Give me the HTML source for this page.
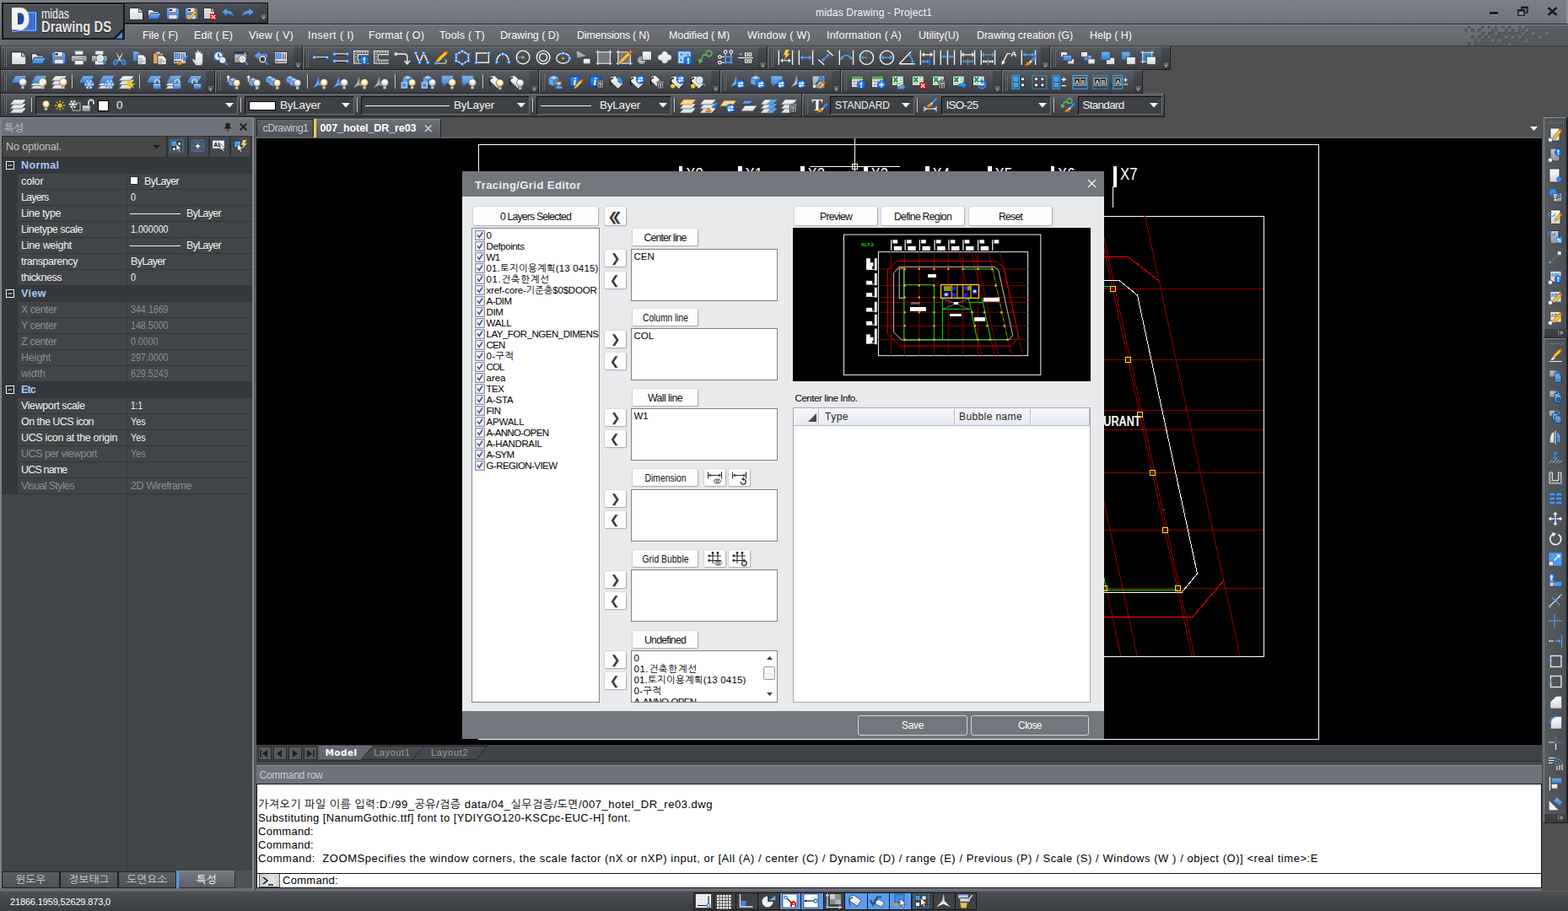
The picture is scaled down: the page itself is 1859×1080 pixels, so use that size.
<!DOCTYPE html>
<html lang="en"><head><meta charset="utf-8"><title>midas Drawing - Project1</title>
<style>
html,body{margin:0;padding:0;}
body{width:1859px;height:1080px;overflow:hidden;background:#505050;position:relative;font-family:"Liberation Sans","NanumGothic","Noto Sans CJK KR",sans-serif;font-size:12px;}
div,span,svg{position:absolute;box-sizing:border-box;}
svg{overflow:visible;}

</style></head><body>
<div style="left:0px;top:0px;width:1859px;height:28px;background:linear-gradient(#7b7f88,#70737b);"></div>
<div style="left:0px;top:28px;width:1859px;height:2px;background:#6f727a;"></div>
<div style="left:148px;top:28px;width:1711px;height:1px;background:#1e1e1e;"></div>
<div style="left:148px;top:29px;width:1711px;height:1px;background:#8a8f98;"></div>
<div style="left:0px;top:30px;width:1859px;height:24px;background:linear-gradient(#6d7179,#64676c);"></div>
<div style="left:0px;top:54px;width:1859px;height:1px;background:#3a3a3a;"></div>
<span style="left:1036px;top:8.04px;font-size:12px;line-height:15px;color:#f4f4f4;white-space:pre;letter-spacing:0.165px;transform:translateX(-50%);">midas Drawing - Project1</span>
<svg width="0" height="0" style="left:0;top:0"><defs>
<pattern id="grip" width="2" height="2" patternUnits="userSpaceOnUse"><rect width="1" height="1" fill="#26282b"/><rect x="1" y="1" width="1" height="1" fill="#8e9297"/></pattern>
<linearGradient id="gW" x1="0" y1="0" x2="0" y2="1"><stop offset="0" stop-color="#ffffff"/><stop offset="1" stop-color="#d2d4d8"/></linearGradient>
<linearGradient id="gB" x1="0" y1="0" x2="0" y2="1"><stop offset="0" stop-color="#7fb0e6"/><stop offset="1" stop-color="#3f7fc8"/></linearGradient>
<linearGradient id="gG" x1="0" y1="0" x2="0" y2="1"><stop offset="0" stop-color="#c9ccd1"/><stop offset="1" stop-color="#8d9198"/></linearGradient>
<radialGradient id="gBulbOn" cx="0.5" cy="0.35" r="0.7"><stop offset="0" stop-color="#ffffff"/><stop offset="0.45" stop-color="#ffe9a8"/><stop offset="1" stop-color="#f0b030"/></radialGradient>
<radialGradient id="gBulbOff" cx="0.5" cy="0.35" r="0.7"><stop offset="0" stop-color="#ffffff"/><stop offset="0.6" stop-color="#d8d8dc"/><stop offset="1" stop-color="#9a9aa0"/></radialGradient>
<radialGradient id="gBadge" cx="0.4" cy="0.3" r="0.8"><stop offset="0" stop-color="#2a8cf4"/><stop offset="1" stop-color="#0a5fd0"/></radialGradient>
</defs></svg>
<div style="left:0px;top:55px;width:1px;height:84px;background:#2a2b2d;"></div>
<div style="left:1px;top:55px;width:357px;height:27px;background:linear-gradient(#5b5f64,#4a4d52 45%,#3b3e42);"></div>
<div style="left:1px;top:55px;width:357px;height:1px;background:#6f7378;"></div>
<div style="left:358px;top:55px;width:1px;height:28px;background:#1c1d1f;"></div>
<div style="left:0px;top:82px;width:359px;height:1px;background:#1c1d1f;"></div>
<svg width="4" height="20" style="left:4px;top:59px"><rect width="4" height="20" fill="url(#grip)"/></svg>
<div style="left:348px;top:56px;width:10px;height:26px;background:linear-gradient(#484b4f,#35383b);"></div>
<svg width="10" height="8" style="left:348px;top:74px"><rect x="2.5" y="0.5" width="6" height="1" fill="#8e9399"/><path d="M2.5 2.5h6l-3 4z" fill="#8e9399"/></svg>
<svg width="19.44" height="17.28" viewBox="0 0 18 16" style="left:12.28px;top:59.86px"><path d="M1.5 1.5h11l5 5v9h-16z" fill="url(#gW)" stroke="#2a2c2f" stroke-width="1"/><path d="M12.5 1.5v5h5" fill="#c8cad0" stroke="#2a2c2f" stroke-width="0.8"/></svg>
<svg width="19.44" height="17.28" viewBox="0 0 18 16" style="left:36.28px;top:59.86px"><path d="M1.5 3.5h5l1.500 2h6.500v8.500h-13z" fill="url(#gW)" stroke="#2a2c2f" stroke-width="1"/><path d="M4.500 7.500h12.500l-3.500 7h-12.500z" fill="url(#gB)" stroke="#1f4f90" stroke-width="1"/></svg>
<svg width="19.44" height="17.28" viewBox="0 0 18 16" style="left:60.28px;top:59.86px"><path d="M1.5 1.500h13l2 2v11h-15z" fill="url(#gB)" stroke="#1f4f90" stroke-width="1"/><rect x="4" y="1.5" width="9" height="5" fill="#f0f0f2" stroke="#50607a" stroke-width="0.6"/><rect x="5" y="3" width="3" height="2" fill="#1c1c1c"/><rect x="4" y="9.5" width="10" height="5" fill="#e6e6ea" stroke="#50607a" stroke-width="0.6"/></svg>
<svg width="19.44" height="17.28" viewBox="0 0 18 16" style="left:84.28px;top:59.86px"><g transform="translate(-0.9 -0.9) scale(1.1)"><rect x="5" y="1" width="8" height="4" fill="#eeeef2" stroke="#70747a" stroke-width="0.6"/><path d="M2.500 5.500h13c1 0 1.500.5 1.500 1.500v5h-16v-5c0-1 .5-1.500 1.500-1.500z" fill="url(#gG)" stroke="#3a3d42" stroke-width="1"/><rect x="4.5" y="10.5" width="9" height="4.5" fill="#f4f4f6" stroke="#50545a" stroke-width="0.7"/><rect x="12.5" y="7" width="3" height="1.5" fill="#22e022"/></g></svg>
<svg width="19.44" height="17.28" viewBox="0 0 18 16" style="left:108.28px;top:59.86px"><g transform="translate(-0.9 -0.9) scale(1.1)"><rect x="5" y="1" width="8" height="4" fill="#eeeef2" stroke="#70747a" stroke-width="0.6"/><path d="M2.500 5.500h13c1 0 1.500.5 1.500 1.500v5h-16v-5c0-1 .5-1.500 1.500-1.500z" fill="url(#gG)" stroke="#3a3d42" stroke-width="1"/><rect x="4.5" y="10.5" width="9" height="4.5" fill="#f4f4f6" stroke="#50545a" stroke-width="0.7"/><rect x="12.5" y="7" width="3" height="1.5" fill="#22e022"/></g><path d="M12.38 10.88L15.62 14.12" stroke="#3b8be8" stroke-width="2.2" fill="none" stroke-linecap="round"/><circle cx="10" cy="8.5" r="3.4" fill="#cfe4fa" stroke="#f4f4f4" stroke-width="1.4"/><circle cx="10" cy="8.5" r="4.3" fill="none" stroke="#3a3d42" stroke-width="0.5"/></svg>
<svg width="19.44" height="17.28" viewBox="0 0 18 16" style="left:132.28px;top:59.86px"><path d="M5 .5c1.500 3 4.500 7 6.500 10.500l-1.800 1c-2-3.500-4.500-7.500-4.700-11.500z" fill="url(#gW)" stroke="#3a3d42" stroke-width="0.5"/><path d="M13 .5c-1.500 3-4.500 7-6.500 10.500l1.800 1c2-3.500 4.500-7.500 4.700-11.500z" fill="url(#gW)" stroke="#3a3d42" stroke-width="0.5"/><ellipse cx="4.500" cy="12.800" rx="1.700" ry="2.500" fill="none" stroke="#3b8be8" stroke-width="1.900" transform="rotate(25 4.500 12.800)"/><ellipse cx="13.500" cy="12.800" rx="1.700" ry="2.500" fill="none" stroke="#3b8be8" stroke-width="1.900" transform="rotate(-25 13.500 12.800)"/></svg>
<svg width="19.44" height="17.28" viewBox="0 0 18 16" style="left:156.28px;top:59.86px"><path d="M1.500 .5h5l3 3v8h-8z" fill="url(#gB)" stroke="#1f4f90" stroke-width="0.7"/><path d="M6.500 4.500h6l3.500 3.500v7.500h-9.500z" fill="url(#gW)" stroke="#2a2c2f" stroke-width="0.8"/><path d="M8 9L12 9" stroke="#8a8a8e" stroke-width="0.9" fill="none" /><path d="M8 11.5L14 11.5" stroke="#8a8a8e" stroke-width="0.9" fill="none" /><path d="M8 13.5L11 13.5" stroke="#8a8a8e" stroke-width="0.9" fill="none" /></svg>
<svg width="19.44" height="17.28" viewBox="0 0 18 16" style="left:180.28px;top:59.86px"><rect x="1.5" y="2.5" width="11" height="12" fill="#d8a868" stroke="#5a3a10" stroke-width="0.8" rx="1"/><rect x="4.5" y="1" width="5" height="3" fill="#c8cacd" stroke="#3a3d42" stroke-width="0.6" rx="0.8"/><path d="M6.500 5.500h6l3.500 3.500v6.500h-9.500z" fill="url(#gW)" stroke="#2a2c2f" stroke-width="0.8"/><path d="M8 9.5L12 9.5" stroke="#8a8a8e" stroke-width="0.9" fill="none" /><path d="M8 11.5L14 11.5" stroke="#8a8a8e" stroke-width="0.9" fill="none" /><path d="M8 13.5L11 13.5" stroke="#8a8a8e" stroke-width="0.9" fill="none" /></svg>
<svg width="19.44" height="17.28" viewBox="0 0 18 16" style="left:204.28px;top:59.86px"><rect x="1.5" y="1.5" width="14" height="13" fill="url(#gW)" stroke="#2a2c2f" stroke-width="0.9" rx="0.6"/><rect x="2.8" y="3" width="6" height="6" fill="#5b9be4" stroke="#2d6cc0" stroke-width="0.6"/><path d="M10.8 3L10.8 9.5" stroke="#44474c" stroke-width="1.1" fill="none" /><path d="M13 3L13 9.5" stroke="#44474c" stroke-width="1.1" fill="none" /><path d="M3 12L14 12" stroke="#44474c" stroke-width="1" fill="none" /><rect x="3" y="11" width="1.2" height="2" fill="#44474c"/><g transform="translate(5 3.5) scale(1.25)"><g transform="translate(0 0)"><path d="M0 9.500c2 .5 4 .2 5.500-1l-2-2.200c-1.500.6-1.800 2.200-3.500 3.200z" fill="#f0901a" stroke="#8a4a00" stroke-width="0.4"/><path d="M4.6 7.2L6.4 5.4" stroke="#f4f4f4" stroke-width="1.8" fill="none" /><path d="M6.4 5.4L9.3 2.2" stroke="#2f8ff0" stroke-width="1.9" fill="none" stroke-linecap="round"/></g></g></svg>
<svg width="19.44" height="17.28" viewBox="0 0 18 16" style="left:228.28px;top:59.86px"><g transform="translate(-1.5 -1.2) scale(1.18)"><path d="M4.500 15c-1-2-3-4-3.500-6c.8-.8 2-.2 2.800 1v-7c0-1.200 1.800-1.200 1.800 0v-1.500c0-1.200 1.900-1.200 1.900 0v1c0-1.300 1.900-1.300 1.900 0v1.500c0-1.200 1.800-1.200 1.800 0v7c0 2-1 3-1.500 4z" fill="url(#gW)" stroke="#2a2c2f" stroke-width="0.5"/></g></svg>
<svg width="19.44" height="17.28" viewBox="0 0 18 16" style="left:252.28px;top:59.86px"><circle cx="6.5" cy="6" r="5" fill="#e8f0fc" stroke="#2a6fd8" stroke-width="1.6"/><path d="M6.500 3v3.500h2.500" fill="none" stroke="#111" stroke-width="1.1"/><path d="M12.96 12.46L15.84 15.34" stroke="#3b8be8" stroke-width="2.2" fill="none" stroke-linecap="round"/><circle cx="11" cy="10.5" r="2.8" fill="#cfe4fa" stroke="#f4f4f4" stroke-width="1.4"/><circle cx="11" cy="10.5" r="3.7" fill="none" stroke="#3a3d42" stroke-width="0.5"/></svg>
<svg width="19.44" height="17.28" viewBox="0 0 18 16" style="left:276.28px;top:59.86px"><rect x="1.5" y="1.5" width="14" height="12" fill="url(#gG)" stroke="#2a2c2f" stroke-width="0.8"/><rect x="1.5" y="1.5" width="14" height="2.5" fill="#2e3a52"/><rect x="12.5" y="2" width="2" height="1.5" fill="#9fc0ee"/><path d="M12.74 11.74L15.98 14.98" stroke="#3b8be8" stroke-width="2.2" fill="none" stroke-linecap="round"/><circle cx="10.5" cy="9.5" r="3.2" fill="#d8dade" stroke="#f4f4f4" stroke-width="1.4"/><circle cx="10.5" cy="9.5" r="4.1" fill="none" stroke="#3a3d42" stroke-width="0.5"/></svg>
<svg width="19.44" height="17.28" viewBox="0 0 18 16" style="left:300.28px;top:59.86px"><path d="M1 5.500l6.500-5v3h8.500v4.500h-8.500v3z" fill="url(#gB)" stroke="#1f4f90" stroke-width="0.5"/><path d="M12.74 11.74L15.98 14.98" stroke="#3b8be8" stroke-width="2.2" fill="none" stroke-linecap="round"/><circle cx="10.5" cy="9.5" r="3.2" fill="#3a3d42" stroke="#f4f4f4" stroke-width="1.4"/><circle cx="10.5" cy="9.5" r="4.1" fill="none" stroke="#3a3d42" stroke-width="0.5"/></svg>
<svg width="19.44" height="17.28" viewBox="0 0 18 16" style="left:324.28px;top:59.86px"><rect x="1.5" y="1.5" width="14" height="13" fill="url(#gW)" stroke="#2a2c2f" stroke-width="0.9" rx="0.6"/><rect x="2.8" y="3" width="6" height="6" fill="#5b9be4" stroke="#2d6cc0" stroke-width="0.6"/><path d="M10.8 3L10.8 9.5" stroke="#44474c" stroke-width="1.1" fill="none" /><path d="M13 3L13 9.5" stroke="#44474c" stroke-width="1.1" fill="none" /><path d="M3 12L14 12" stroke="#44474c" stroke-width="1" fill="none" /><rect x="3" y="11" width="1.2" height="2" fill="#44474c"/></svg>
<div style="left:359px;top:55px;width:550px;height:27px;background:linear-gradient(#5b5f64,#4a4d52 45%,#3b3e42);"></div>
<div style="left:359px;top:55px;width:550px;height:1px;background:#6f7378;"></div>
<div style="left:359px;top:55px;width:1px;height:27px;background:#7a7e83;"></div>
<div style="left:909px;top:55px;width:1px;height:28px;background:#1c1d1f;"></div>
<div style="left:358px;top:82px;width:552px;height:1px;background:#1c1d1f;"></div>
<svg width="4" height="20" style="left:362px;top:59px"><rect width="4" height="20" fill="url(#grip)"/></svg>
<div style="left:899px;top:56px;width:10px;height:26px;background:linear-gradient(#484b4f,#35383b);"></div>
<svg width="10" height="8" style="left:899px;top:74px"><rect x="2.5" y="0.5" width="6" height="1" fill="#8e9399"/><path d="M2.5 2.5h6l-3 4z" fill="#8e9399"/></svg>
<svg width="20.16" height="17.92" viewBox="0 0 18 16" style="left:369.92px;top:59.24px"><path d="M2 8L16 8" stroke="#f2f2f2" stroke-width="1.3" fill="none" /><path d="M2 9L16 9" stroke="#101010" stroke-width="0.8" fill="none" /><rect x="1" y="6.7" width="2.6" height="2.6" fill="#ffffff" stroke="#1f7be8" stroke-width="1"/><rect x="14.4" y="6.7" width="2.6" height="2.6" fill="#ffffff" stroke="#1f7be8" stroke-width="1"/></svg>
<svg width="20.16" height="17.92" viewBox="0 0 18 16" style="left:393.92px;top:59.24px"><path d="M2 4.5L16 4.5" stroke="#f2f2f2" stroke-width="1.3" fill="none" /><path d="M2 5.5L16 5.5" stroke="#101010" stroke-width="0.8" fill="none" /><path d="M2 12L16 12" stroke="#f2f2f2" stroke-width="1.3" fill="none" /><path d="M2 13L16 13" stroke="#101010" stroke-width="0.8" fill="none" /><rect x="1" y="3.2" width="2.6" height="2.6" fill="#ffffff" stroke="#1f7be8" stroke-width="1"/><rect x="14.4" y="3.2" width="2.6" height="2.6" fill="#ffffff" stroke="#1f7be8" stroke-width="1"/><rect x="1" y="10.7" width="2.6" height="2.6" fill="#ffffff" stroke="#1f7be8" stroke-width="1"/><rect x="14.4" y="10.7" width="2.6" height="2.6" fill="#ffffff" stroke="#1f7be8" stroke-width="1"/></svg>
<svg width="20.16" height="17.92" viewBox="0 0 18 16" style="left:417.92px;top:59.24px"><path d="M17 1.500h-15.500v13h15.500" fill="none" stroke="#f2f2f2" stroke-width="1"/><path d="M17 5h-11.500v6h11.500" fill="none" stroke="#f2f2f2" stroke-width="1"/><path d="M17 3.200h-13.500v9.600h13.500" fill="none" stroke="#f2f2f2" stroke-width="0.9" stroke-dasharray="1.6 1.2"/><circle cx="12.5" cy="11" r="4.8" fill="url(#gBadge)" stroke="#0b3f9a" stroke-width="0.5"/><rect x="11.6" y="8" width="1.8" height="3.8" fill="#fff" rx="0.8"/><circle cx="12.5" cy="13.3" r="1" fill="#fff"/></svg>
<svg width="20.16" height="17.92" viewBox="0 0 18 16" style="left:441.92px;top:59.24px"><path d="M17 1.500h-15.500v13h15.500" fill="none" stroke="#f2f2f2" stroke-width="1"/><path d="M17 5h-11.500v6h11.500" fill="none" stroke="#f2f2f2" stroke-width="1"/><path d="M17 3.200h-13.500v9.600h13.500" fill="none" stroke="#f2f2f2" stroke-width="0.9" stroke-dasharray="1.6 1.2"/></svg>
<svg width="20.16" height="17.92" viewBox="0 0 18 16" style="left:465.92px;top:59.24px"><circle cx="3" cy="4.5" r="1.8" fill="#d8d8da"/><path d="M4.500 4.500h7c2.500 0 3.500 1 3.500 3v6.500" fill="none" stroke="#f2f2f2" stroke-width="1.3"/><path d="M12 11.500l3 3.500l3-3.500" fill="none" stroke="#f2f2f2" stroke-width="1.3"/></svg>
<svg width="20.16" height="17.92" viewBox="0 0 18 16" style="left:489.92px;top:59.24px"><path d="M2.500 3.500l4 10l4.500-10l4.500 10" fill="none" stroke="#f2f2f2" stroke-width="1.4"/><rect x="1.2" y="2.2" width="2.6" height="2.6" fill="#ffffff" stroke="#1f7be8" stroke-width="1"/><rect x="5.4" y="12.2" width="2.6" height="2.6" fill="#ffffff" stroke="#1f7be8" stroke-width="1"/><rect x="9.7" y="2.2" width="2.6" height="2.6" fill="#ffffff" stroke="#1f7be8" stroke-width="1"/><rect x="14.2" y="12.2" width="2.6" height="2.6" fill="#ffffff" stroke="#1f7be8" stroke-width="1"/></svg>
<svg width="20.16" height="17.92" viewBox="0 0 18 16" style="left:513.92px;top:59.24px"><path d="M2 14.500h9c3.500 0 3.500-4 .5-4" fill="none" stroke="#d0d0d4" stroke-width="1.1"/><path d="M5.91 12.72L14.8 4.18L12.31 1.59L3.42 10.12z" fill="#f2b01e" stroke="#7a5200" stroke-width="0.5"/><path d="M2.5 13.5L5.91 12.72L3.42 10.12z" fill="#f6e2b8" stroke="#7a5200" stroke-width="0.5"/><path d="M14.8 4.18L16.25 2.8L13.75 0.2L12.31 1.59z" fill="#f06a18" stroke="#7a3000" stroke-width="0.5"/><path d="M4.66 11.42L13.56 2.89" stroke="#ffe27a" stroke-width="0.8" fill="none" /><rect x="1.2" y="13.3" width="2" height="2" fill="#ffffff" stroke="#1f7be8" stroke-width="1"/></svg>
<svg width="20.16" height="17.92" viewBox="0 0 18 16" style="left:537.92px;top:59.24px"><path d="M9 1.500l6.500 3.500v6.500l-6.500 3.500l-6.500-3.500v-6.500z" fill="none" stroke="#f2f2f2" stroke-width="1.3"/><rect x="7.7" y="0.2" width="2.6" height="2.6" fill="#ffffff" stroke="#1f7be8" stroke-width="1"/><rect x="14.2" y="3.7" width="2.6" height="2.6" fill="#ffffff" stroke="#1f7be8" stroke-width="1"/><rect x="14.2" y="10.2" width="2.6" height="2.6" fill="#ffffff" stroke="#1f7be8" stroke-width="1"/><rect x="7.7" y="13.7" width="2.6" height="2.6" fill="#ffffff" stroke="#1f7be8" stroke-width="1"/><rect x="1.2" y="10.2" width="2.6" height="2.6" fill="#ffffff" stroke="#1f7be8" stroke-width="1"/><rect x="1.2" y="3.7" width="2.6" height="2.6" fill="#ffffff" stroke="#1f7be8" stroke-width="1"/></svg>
<svg width="20.16" height="17.92" viewBox="0 0 18 16" style="left:561.92px;top:59.24px"><rect x="2.5" y="3.5" width="13" height="10" fill="none" stroke="#f2f2f2" stroke-width="1.3"/><rect x="14.4" y="2.2" width="2.6" height="2.6" fill="#ffffff" stroke="#1f7be8" stroke-width="1"/><rect x="1" y="12.2" width="2.6" height="2.6" fill="#ffffff" stroke="#1f7be8" stroke-width="1"/></svg>
<svg width="20.16" height="17.92" viewBox="0 0 18 16" style="left:585.92px;top:59.24px"><path d="M2.500 13c0-5 3-8.500 6.500-8.500s6.500 3.500 6.500 8.500" fill="none" stroke="#f2f2f2" stroke-width="1.3"/><rect x="1.2" y="11.7" width="2.6" height="2.6" fill="#ffffff" stroke="#1f7be8" stroke-width="1"/><rect x="7.7" y="3.2" width="2.6" height="2.6" fill="#ffffff" stroke="#1f7be8" stroke-width="1"/><rect x="14.2" y="11.7" width="2.6" height="2.6" fill="#ffffff" stroke="#1f7be8" stroke-width="1"/></svg>
<svg width="20.16" height="17.92" viewBox="0 0 18 16" style="left:609.92px;top:59.24px"><circle cx="9" cy="8" r="7" fill="none" stroke="#f2f2f2" stroke-width="1.2"/><path d="M2.5 8L9 8" stroke="#4da0f0" stroke-width="1.2" fill="none" /><path d="M7.500 8h3M9 6.500v3" fill="none" stroke="#f0a020" stroke-width="1.2"/></svg>
<svg width="20.16" height="17.92" viewBox="0 0 18 16" style="left:633.92px;top:59.24px"><circle cx="9" cy="8" r="7" fill="none" stroke="#f2f2f2" stroke-width="1.3"/><circle cx="9" cy="8" r="4" fill="none" stroke="#f2f2f2" stroke-width="1.3"/></svg>
<svg width="20.16" height="17.92" viewBox="0 0 18 16" style="left:657.92px;top:59.24px"><ellipse cx="8.5" cy="9" rx="7" ry="5.3" fill="none" stroke="#f2f2f2" stroke-width="1.2"/><path d="M7 9h3M8.500 7.500v3" fill="none" stroke="#f0a020" stroke-width="1.2"/><rect x="7.2" y="2.4" width="2.6" height="2.6" fill="#ffffff" stroke="#1f7be8" stroke-width="1"/><rect x="14.2" y="7.7" width="2.6" height="2.6" fill="#ffffff" stroke="#1f7be8" stroke-width="1"/></svg>
<svg width="20.16" height="17.92" viewBox="0 0 18 16" style="left:681.92px;top:59.24px"><path d="M1.500 1l11 5.500l-11 2.500z" fill="url(#gG)" stroke="#3a3d42" stroke-width="0.4"/><rect x="8.5" y="9.5" width="7.5" height="5.5" fill="url(#gW)" stroke="#3a3d42" stroke-width="0.5"/></svg>
<svg width="20.16" height="17.92" viewBox="0 0 18 16" style="left:705.92px;top:59.24px"><rect x="2.5" y="2.5" width="13" height="12" fill="#4a4d52"/><path d="M2.5 4.5L4.5 2.5M2.5 6.5L6.5 2.5M2.5 8.5L8.5 2.5M2.5 10.5L10.5 2.5M2.5 12.5L12.5 2.5M2.5 14.5L14.5 2.5M4.5 14.5L15.5 3.5M6.5 14.5L15.5 5.5M8.5 14.5L15.5 7.5M10.5 14.5L15.5 9.5M12.5 14.5L15.5 11.5M14.5 14.5L15.5 13.5" fill="none" stroke="#c4c6c9" stroke-width="0.7"/><path d="M2.500 .5v15.500M15.500 .5v15.500M.5 2.500h17M.5 14.500h17" fill="none" stroke="#f2f2f2" stroke-width="1"/></svg>
<svg width="20.16" height="17.92" viewBox="0 0 18 16" style="left:729.92px;top:59.24px"><rect x="2.5" y="2.5" width="13" height="12" fill="#4a4d52"/><path d="M2.5 4.5L4.5 2.5M2.5 6.5L6.5 2.5M2.5 8.5L8.5 2.5M2.5 10.5L10.5 2.5M2.5 12.5L12.5 2.5M2.5 14.5L14.5 2.5M4.5 14.5L15.5 3.5M6.5 14.5L15.5 5.5M8.5 14.5L15.5 7.5M10.5 14.5L15.5 9.5M12.5 14.5L15.5 11.5M14.5 14.5L15.5 13.5" fill="none" stroke="#c4c6c9" stroke-width="0.7"/><path d="M2.500 .5v15.500M15.500 .5v15.500M.5 2.500h17M.5 14.500h17" fill="none" stroke="#f2f2f2" stroke-width="1"/><path d="M6.39 14.15L15.86 4.69L13.31 2.14L3.85 11.61z" fill="#f2b01e" stroke="#7a5200" stroke-width="0.5"/><path d="M3 15L6.39 14.15L3.85 11.61z" fill="#f6e2b8" stroke="#7a5200" stroke-width="0.5"/><path d="M15.86 4.69L17.27 3.27L14.73 0.73L13.31 2.14z" fill="#f06a18" stroke="#7a3000" stroke-width="0.5"/><path d="M5.12 12.88L14.59 3.41" stroke="#ffe27a" stroke-width="0.8" fill="none" /></svg>
<svg width="20.16" height="17.92" viewBox="0 0 18 16" style="left:753.92px;top:59.24px"><circle cx="6" cy="11" r="4.5" fill="#b8babd" stroke="#3a3d42" stroke-width="0.6"/><path d="M3 13l5-5M2 11l4-4M5 15l5-5" fill="none" stroke="#6a6d72" stroke-width="0.6"/><rect x="6.5" y="1.5" width="10" height="9.5" fill="url(#gW)" stroke="#3a3d42" stroke-width="0.8"/></svg>
<svg width="20.16" height="17.92" viewBox="0 0 18 16" style="left:777.92px;top:59.24px"><path d="M9 1.500c2 0 3.500 1.300 3.500 3.300c2.300 0 4 1.500 4 3.400s-1.700 3.400-4 3.400c0 1.800-1.500 3.200-3.500 3.200s-3.500-1.400-3.500-3.200c-2.300 0-4-1.500-4-3.400s1.700-3.400 4-3.400c0-2 1.500-3.300 3.500-3.300z" fill="url(#gW)" stroke="#3a3d42" stroke-width="0.6"/></svg>
<svg width="20.16" height="17.92" viewBox="0 0 18 16" style="left:801.92px;top:59.24px"><rect x="1" y="1" width="15" height="14" fill="#5b9be4" stroke="#1f4f90" stroke-width="0.8"/><rect x="3" y="3" width="5" height="4" fill="none" stroke="#e8f0fc" stroke-width="1"/><rect x="10" y="3" width="4" height="4" fill="none" stroke="#e8f0fc" stroke-width="1"/><rect x="3" y="9" width="4" height="4" fill="none" stroke="#e8f0fc" stroke-width="1"/><circle cx="12.5" cy="11.5" r="4.6" fill="url(#gBadge)" stroke="#0b3f9a" stroke-width="0.5"/><rect x="11.6" y="8.5" width="1.8" height="3.8" fill="#fff" rx="0.8"/><circle cx="12.5" cy="13.8" r="1" fill="#fff"/></svg>
<svg width="20.16" height="17.92" viewBox="0 0 18 16" style="left:825.92px;top:59.24px"><circle cx="13" cy="4" r="3" fill="none" stroke="#5cb85c" stroke-width="1.4"/><path d="M10.500 5.500h-3.500l-4 8" fill="none" stroke="#5cb85c" stroke-width="1.4"/><path d="M1.500 9.500l1.200 5l4.300-2.500z" fill="#5cb85c"/></svg>
<svg width="20.16" height="17.92" viewBox="0 0 18 16" style="left:849.92px;top:59.24px"><rect x="9" y="7.5" width="6" height="6" fill="none" stroke="#4da0f0" stroke-width="1.3"/><path d="M7.500 7.500h9M7.500 13.500h9M9 6v9M15 6v9" fill="none" stroke="#4da0f0" stroke-width="1"/><circle cx="3" cy="7.5" r="1.6" fill="none" stroke="#f2f2f2" stroke-width="1.1"/><circle cx="3" cy="13.5" r="1.6" fill="none" stroke="#f2f2f2" stroke-width="1.1"/><path d="M4.6 7.5L7.5 7.5" stroke="#f2f2f2" stroke-width="1" fill="none" /><path d="M4.6 13.5L7.5 13.5" stroke="#f2f2f2" stroke-width="1" fill="none" /><circle cx="9" cy="2.2" r="1.6" fill="none" stroke="#f2f2f2" stroke-width="1.1"/><circle cx="15" cy="2.2" r="1.6" fill="none" stroke="#f2f2f2" stroke-width="1.1"/><path d="M9 3.8L9 6" stroke="#f2f2f2" stroke-width="1" fill="none" /><path d="M15 3.8L15 6" stroke="#f2f2f2" stroke-width="1" fill="none" /></svg>
<svg width="20.16" height="17.92" viewBox="0 0 18 16" style="left:873.92px;top:59.24px"><path d="M1.500 3.500h4.500l-2.250 3z" fill="#4da0f0"/><path d="M1 8.5L17 8.5" stroke="#f2f2f2" stroke-width="1.1" fill="none" /><rect x="8.5" y="3.5" width="2.4" height="3" fill="none" stroke="#f2f2f2" stroke-width="1"/><rect x="12.5" y="3.5" width="2.4" height="3" fill="none" stroke="#f2f2f2" stroke-width="1"/><rect x="8.5" y="10.5" width="2.4" height="3" fill="none" stroke="#f2f2f2" stroke-width="1"/><rect x="12.5" y="10.5" width="2.4" height="3" fill="none" stroke="#f2f2f2" stroke-width="1"/></svg>
<div style="left:910px;top:55px;width:334px;height:27px;background:linear-gradient(#5b5f64,#4a4d52 45%,#3b3e42);"></div>
<div style="left:910px;top:55px;width:334px;height:1px;background:#6f7378;"></div>
<div style="left:910px;top:55px;width:1px;height:27px;background:#7a7e83;"></div>
<div style="left:1244px;top:55px;width:1px;height:28px;background:#1c1d1f;"></div>
<div style="left:909px;top:82px;width:336px;height:1px;background:#1c1d1f;"></div>
<svg width="4" height="20" style="left:913px;top:59px"><rect width="4" height="20" fill="url(#grip)"/></svg>
<div style="left:1234px;top:56px;width:10px;height:26px;background:linear-gradient(#484b4f,#35383b);"></div>
<svg width="10" height="8" style="left:1234px;top:74px"><rect x="2.5" y="0.5" width="6" height="1" fill="#8e9399"/><path d="M2.5 2.5h6l-3 4z" fill="#8e9399"/></svg>
<svg width="20.88" height="18.56" viewBox="0 0 18 16" style="left:920.56px;top:58.92px"><path d="M2 0.5L2 15.5" stroke="#f2f2f2" stroke-width="1.2" fill="none" /><path d="M16 0.5L16 15.5" stroke="#f2f2f2" stroke-width="1.2" fill="none" /><path d="M4.5 11L13.5 11" stroke="#f2f2f2" stroke-width="1" fill="none" /><path d="M3.5 11l2.6 -2.08v4.16z" fill="#f2f2f2"/><path d="M14.5 11l-2.6 -2.08v4.16z" fill="#f2f2f2"/><g transform="translate(5 0) scale(0.95)"><path d="M4 0h4.500l-2.500 4h3l-6.500 7l2-5h-2.500z" fill="#ffd45a" stroke="#a07810" stroke-width="0.4"/></g></svg>
<svg width="20.88" height="18.56" viewBox="0 0 18 16" style="left:944.56px;top:58.92px"><path d="M2 0.5L2 15.5" stroke="#f2f2f2" stroke-width="1.2" fill="none" /><path d="M16 0.5L16 15.5" stroke="#f2f2f2" stroke-width="1.2" fill="none" /><path d="M4 8L14 8" stroke="#4da0f0" stroke-width="1.3" fill="none" /><path d="M3 8l3 -2.4v4.8z" fill="#4da0f0"/><path d="M15 8l-3 -2.4v4.8z" fill="#4da0f0"/></svg>
<svg width="20.88" height="18.56" viewBox="0 0 18 16" style="left:968.56px;top:58.92px"><path d="M1 10L7 15.5" stroke="#f2f2f2" stroke-width="1.2" fill="none" /><path d="M10 0.5L16 6" stroke="#f2f2f2" stroke-width="1.2" fill="none" /><path d="M5.5 11L11.5 5" stroke="#4da0f0" stroke-width="1.3" fill="none" /><path d="M4.500 12l1-3.500l2.500 2.500z" fill="#4da0f0"/><path d="M12.500 4l-1 3.500l-2.500-2.500z" fill="#4da0f0"/></svg>
<svg width="20.88" height="18.56" viewBox="0 0 18 16" style="left:992.56px;top:58.92px"><path d="M2 0.5L2 15.5" stroke="#f2f2f2" stroke-width="1.2" fill="none" /><path d="M16 0.5L16 15.5" stroke="#f2f2f2" stroke-width="1.2" fill="none" /><path d="M4 9.500c2-5 8-5 10 0" fill="none" stroke="#4da0f0" stroke-width="1.4"/><path d="M3 10.500l.2-3.800l3 2.300z" fill="#4da0f0"/><path d="M15 10.500l-.2-3.800l-3 2.300z" fill="#4da0f0"/></svg>
<svg width="20.88" height="18.56" viewBox="0 0 18 16" style="left:1016.56px;top:58.92px"><circle cx="9" cy="8" r="7" fill="none" stroke="#f2f2f2" stroke-width="1.2"/><path d="M9 3v10M9 8h5" fill="none" stroke="#8a8d92" stroke-width="0.9" stroke-dasharray="1 1.3"/><path d="M4 8L9 8" stroke="#4da0f0" stroke-width="1.3" fill="none" /><path d="M2.500 8l3-2.400v4.800z" fill="#4da0f0"/></svg>
<svg width="20.88" height="18.56" viewBox="0 0 18 16" style="left:1040.56px;top:58.92px"><circle cx="9" cy="8" r="7" fill="none" stroke="#f2f2f2" stroke-width="1.2"/><path d="M3.8 8L14.2 8" stroke="#4da0f0" stroke-width="1.3" fill="none" /><path d="M2.8 8l3 -2.4v4.8z" fill="#4da0f0"/><path d="M15.2 8l-3 -2.4v4.8z" fill="#4da0f0"/></svg>
<svg width="20.88" height="18.56" viewBox="0 0 18 16" style="left:1064.56px;top:58.92px"><path d="M1 14.500h16M1 14.500l12-12.500" fill="none" stroke="#f2f2f2" stroke-width="1.2"/><path d="M11.500 5.500c2 2 3 4.500 3.200 7.500" fill="none" stroke="#4da0f0" stroke-width="1.2"/><path d="M10.500 4.500l3.300.6l-2.300 2.400z" fill="#4da0f0"/><path d="M14.700 14l-2-2.800h3.600z" fill="#4da0f0"/></svg>
<svg width="20.88" height="18.56" viewBox="0 0 18 16" style="left:1088.56px;top:58.92px"><path d="M2 0.5L2 15.5" stroke="#f2f2f2" stroke-width="1.2" fill="none" /><path d="M16 0.5L16 15.5" stroke="#f2f2f2" stroke-width="1.2" fill="none" /><path d="M4 5L14 5" stroke="#f2f2f2" stroke-width="1.2" fill="none" /><path d="M3 5l3 -2.4v4.8z" fill="#f2f2f2"/><path d="M15 5l-3 -2.4v4.8z" fill="#f2f2f2"/><path d="M4 12L10 12" stroke="#4da0f0" stroke-width="1.3" fill="none" /><path d="M3 12l2.6 -2.08v4.16z" fill="#4da0f0"/><path d="M11 12l-2.6 -2.08v4.16z" fill="#4da0f0"/><path d="M11.5 9.5L11.5 15.5" stroke="#1f7be8" stroke-width="1.3" fill="none" /></svg>
<svg width="20.88" height="18.56" viewBox="0 0 18 16" style="left:1112.56px;top:58.92px"><path d="M2 0.5L2 15.5" stroke="#f2f2f2" stroke-width="1.2" fill="none" /><path d="M9 0.5L9 15.5" stroke="#f2f2f2" stroke-width="1.2" fill="none" /><path d="M16 0.5L16 15.5" stroke="#f2f2f2" stroke-width="1.2" fill="none" /><path d="M4 7L7.3 7" stroke="#4da0f0" stroke-width="1.2" fill="none" /><path d="M3 7l2.2 -1.76v3.52z" fill="#4da0f0"/><path d="M8.3 7l-2.2 -1.76v3.52z" fill="#4da0f0"/><path d="M10.7 7L14.3 7" stroke="#4da0f0" stroke-width="1.2" fill="none" /><path d="M9.7 7l2.2 -1.76v3.52z" fill="#4da0f0"/><path d="M15.3 7l-2.2 -1.76v3.52z" fill="#4da0f0"/></svg>
<svg width="20.88" height="18.56" viewBox="0 0 18 16" style="left:1136.56px;top:58.92px"><path d="M2 0.5L2 15.5" stroke="#f2f2f2" stroke-width="1.2" fill="none" /><path d="M16 0.5L16 15.5" stroke="#f2f2f2" stroke-width="1.2" fill="none" /><path d="M3 5H15M4.8 3.2L3 5l1.8 1.8M13.2 3.2L15 5l-1.8 1.8" fill="none" stroke="#f2f2f2" stroke-width="1.1"/><path d="M9 9.5L9 15.5" stroke="#9a9da2" stroke-width="1.1" fill="none" /><path d="M4 12L7.5 12" stroke="#4da0f0" stroke-width="1.1" fill="none" /><path d="M3 12l2 -1.6v3.2z" fill="#4da0f0"/><path d="M8.5 12l-2 -1.6v3.2z" fill="#4da0f0"/><path d="M10.5 12L14 12" stroke="#4da0f0" stroke-width="1.1" fill="none" /><path d="M9.5 12l2 -1.6v3.2z" fill="#4da0f0"/><path d="M15 12l-2 -1.6v3.2z" fill="#4da0f0"/></svg>
<svg width="20.88" height="18.56" viewBox="0 0 18 16" style="left:1160.56px;top:58.92px"><path d="M2 0.5L2 15.5" stroke="#f2f2f2" stroke-width="1.2" fill="none" /><path d="M16 0.5L16 15.5" stroke="#f2f2f2" stroke-width="1.2" fill="none" /><path d="M3 5H15M4.8 3.2L3 5l1.8 1.8M13.2 3.2L15 5l-1.8 1.8" fill="none" stroke="#4da0f0" stroke-width="1.1"/><path d="M9 9.5L9 15.5" stroke="#9a9da2" stroke-width="1.1" fill="none" /><path d="M4 12L7.5 12" stroke="#f2f2f2" stroke-width="1.1" fill="none" /><path d="M3 12l2 -1.6v3.2z" fill="#f2f2f2"/><path d="M8.5 12l-2 -1.6v3.2z" fill="#f2f2f2"/><path d="M10.5 12L14 12" stroke="#f2f2f2" stroke-width="1.1" fill="none" /><path d="M9.5 12l2 -1.6v3.2z" fill="#f2f2f2"/><path d="M15 12l-2 -1.6v3.2z" fill="#f2f2f2"/></svg>
<svg width="20.88" height="18.56" viewBox="0 0 18 16" style="left:1184.56px;top:58.92px"><path d="M3.500 13l4.500-9h3" fill="none" stroke="#f2f2f2" stroke-width="1.2"/><path d="M2 15.500l.6-4.500l3.400 2z" fill="#f2f2f2"/><text x="11.5" y="7" font-family="Liberation Sans,sans-serif" font-size="8.5" font-weight="bold" fill="#f2f2f2" >A</text></svg>
<svg width="20.88" height="18.56" viewBox="0 0 18 16" style="left:1208.56px;top:58.92px"><path d="M2 0.5L2 15.5" stroke="#f2f2f2" stroke-width="1.2" fill="none" /><path d="M16 0.5L16 15.5" stroke="#f2f2f2" stroke-width="1.2" fill="none" /><path d="M4 5L14 5" stroke="#4da0f0" stroke-width="1.3" fill="none" /><path d="M3 5l2.8 -2.24v4.48z" fill="#4da0f0"/><path d="M15 5l-2.8 -2.24v4.48z" fill="#4da0f0"/><g transform="translate(4.5 4) scale(1.25)"><g transform="translate(0 0)"><path d="M0 9.500c2 .5 4 .2 5.500-1l-2-2.200c-1.500.6-1.800 2.200-3.500 3.200z" fill="#f0901a" stroke="#8a4a00" stroke-width="0.4"/><path d="M4.6 7.2L6.4 5.4" stroke="#f4f4f4" stroke-width="1.8" fill="none" /><path d="M6.4 5.4L9.3 2.2" stroke="#2f8ff0" stroke-width="1.9" fill="none" stroke-linecap="round"/></g></g></svg>
<div style="left:1245px;top:55px;width:142px;height:27px;background:linear-gradient(#5b5f64,#4a4d52 45%,#3b3e42);"></div>
<div style="left:1245px;top:55px;width:142px;height:1px;background:#6f7378;"></div>
<div style="left:1245px;top:55px;width:1px;height:27px;background:#7a7e83;"></div>
<div style="left:1387px;top:55px;width:1px;height:28px;background:#1c1d1f;"></div>
<div style="left:1244px;top:82px;width:144px;height:1px;background:#1c1d1f;"></div>
<svg width="4" height="20" style="left:1248px;top:59px"><rect width="4" height="20" fill="url(#grip)"/></svg>
<div style="left:1377px;top:56px;width:10px;height:26px;background:linear-gradient(#484b4f,#35383b);"></div>
<svg width="10" height="8" style="left:1377px;top:74px"><rect x="2.5" y="0.5" width="6" height="1" fill="#8e9399"/><path d="M2.5 2.5h6l-3 4z" fill="#8e9399"/></svg>
<svg width="19.80" height="17.60" viewBox="0 0 18 16" style="left:1256.10px;top:59.70px"><rect x="1.5" y="1.5" width="7" height="5.5" fill="url(#gW)" stroke="#3a3d42" stroke-width="0.7"/><rect x="9" y="9" width="7" height="5.5" fill="url(#gW)" stroke="#3a3d42" stroke-width="0.7"/><rect x="4" y="5" width="9" height="6" fill="url(#gB)" stroke="#1f4f90" stroke-width="0.7"/></svg>
<svg width="19.80" height="17.60" viewBox="0 0 18 16" style="left:1280.10px;top:59.70px"><rect x="4.5" y="5" width="8.5" height="6" fill="url(#gB)" stroke="#1f4f90" stroke-width="0.7"/><rect x="1.5" y="1.5" width="7" height="5.5" fill="url(#gW)" stroke="#3a3d42" stroke-width="0.7"/><rect x="9" y="9" width="7.5" height="5.5" fill="url(#gW)" stroke="#3a3d42" stroke-width="0.7"/></svg>
<svg width="19.80" height="17.60" viewBox="0 0 18 16" style="left:1304.10px;top:59.70px"><rect x="7" y="7.5" width="9" height="7.5" fill="url(#gW)" stroke="#3a3d42" stroke-width="0.7"/><rect x="1.5" y="1" width="9.5" height="9" fill="url(#gB)" stroke="#1f4f90" stroke-width="0.7"/></svg>
<svg width="19.80" height="17.60" viewBox="0 0 18 16" style="left:1328.10px;top:59.70px"><rect x="1.5" y="1" width="9.5" height="9" fill="url(#gB)" stroke="#1f4f90" stroke-width="0.7"/><rect x="7" y="7" width="9.5" height="8" fill="url(#gW)" stroke="#3a3d42" stroke-width="0.7"/></svg>
<svg width="19.80" height="17.60" viewBox="0 0 18 16" style="left:1352.10px;top:59.70px"><rect x="2.5" y="2" width="10" height="10" fill="#1c2a3a"/><path d="M2.5 4.2L4.7 2M2.5 6.4L6.9 2M2.5 8.6L9.1 2M2.5 10.8L11.3 2M3.5 12L12.5 3M5.7 12L12.5 5.2M7.9 12L12.5 7.4M10.1 12L12.5 9.6M12.3 12L12.5 11.8" fill="none" stroke="#35a8f8" stroke-width="1.1"/><path d="M2.500 .5v13M12.500 .5v13M.5 2h14M.5 12h14" fill="none" stroke="#f2f2f2" stroke-width="0.9"/><rect x="7" y="6.5" width="9.5" height="8.5" fill="url(#gW)" stroke="#3a3d42" stroke-width="0.7"/></svg>
<div style="left:1px;top:83px;width:253px;height:27px;background:linear-gradient(#5b5f64,#4a4d52 45%,#3b3e42);"></div>
<div style="left:1px;top:83px;width:253px;height:1px;background:#6f7378;"></div>
<div style="left:254px;top:83px;width:1px;height:28px;background:#1c1d1f;"></div>
<div style="left:0px;top:110px;width:255px;height:1px;background:#1c1d1f;"></div>
<svg width="4" height="20" style="left:4px;top:87px"><rect width="4" height="20" fill="url(#grip)"/></svg>
<div style="left:244px;top:84px;width:10px;height:26px;background:linear-gradient(#484b4f,#35383b);"></div>
<svg width="10" height="8" style="left:244px;top:102px"><rect x="2.5" y="0.5" width="6" height="1" fill="#8e9399"/><path d="M2.5 2.5h6l-3 4z" fill="#8e9399"/></svg>
<svg width="18.90" height="16.80" viewBox="0 0 18 16" style="left:12.55px;top:88.60px"><path d="M5 0.55h13l-5 8.5h-13z" fill="url(#gB)" stroke="#16335e" stroke-width="0.6"/><rect x="11.7" y="11.9" width="3.2" height="3.6" fill="#a8a8ac" stroke="#505256" stroke-width="0.5"/><path d="M11.7 13.4L14.9 13.4" stroke="#e8e8e8" stroke-width="0.7" fill="none" /><path d="M11.7 14.7L14.9 14.7" stroke="#e8e8e8" stroke-width="0.7" fill="none" /><circle cx="13.3" cy="8" r="4.4" fill="url(#gBulbOff)" stroke="#505256" stroke-width="0.5"/><ellipse cx="13.3" cy="6.7" rx="2.73" ry="1.98" fill="#ffffff"/></svg>
<svg width="18.90" height="16.80" viewBox="0 0 18 16" style="left:36.55px;top:88.60px"><path d="M3.75 10.5h13l-4.5 5h-13z" fill="url(#gW)" stroke="#505357" stroke-width="0.6"/><path d="M3.75 7h13l-4.5 5h-13z" fill="url(#gW)" stroke="#505357" stroke-width="0.6"/><path d="M5 0.55h13l-5 8.5h-13z" fill="url(#gB)" stroke="#16335e" stroke-width="0.6" stroke-dasharray="1.2 1" stroke-width="1.1"/><rect x="11.7" y="11.9" width="3.2" height="3.6" fill="#a8a8ac" stroke="#505256" stroke-width="0.5"/><path d="M11.7 13.4L14.9 13.4" stroke="#e8e8e8" stroke-width="0.7" fill="none" /><path d="M11.7 14.7L14.9 14.7" stroke="#e8e8e8" stroke-width="0.7" fill="none" /><circle cx="13.3" cy="8" r="4.4" fill="url(#gBulbOn)" stroke="#4a4230" stroke-width="0.5"/><ellipse cx="13.3" cy="6.7" rx="2.73" ry="1.98" fill="#ffffff"/><path d="M13.300 3.600a4.400 4.400 0 0 0 0 8.800z" fill="#f4f4f4" stroke="none" stroke-width="1"/></svg>
<svg width="18.90" height="16.80" viewBox="0 0 18 16" style="left:60.55px;top:88.60px"><path d="M4.25 9.95h13l-4.5 5.5h-13z" fill="url(#gW)" stroke="#505357" stroke-width="0.6"/><path d="M4.25 5.45h13l-4.5 5.5h-13z" fill="url(#gW)" stroke="#505357" stroke-width="0.6"/><path d="M4.25 0.95h13l-4.5 5.5h-13z" fill="url(#gW)" stroke="#505357" stroke-width="0.6"/><rect x="11.7" y="11.9" width="3.2" height="3.6" fill="#a8a8ac" stroke="#505256" stroke-width="0.5"/><path d="M11.7 13.4L14.9 13.4" stroke="#e8e8e8" stroke-width="0.7" fill="none" /><path d="M11.7 14.7L14.9 14.7" stroke="#e8e8e8" stroke-width="0.7" fill="none" /><circle cx="13.3" cy="8" r="4.4" fill="url(#gBulbOn)" stroke="#4a4230" stroke-width="0.5"/><ellipse cx="13.3" cy="6.7" rx="2.73" ry="1.98" fill="#ffffff"/></svg>
<div style="left:85px;top:88px;width:1px;height:17px;background:#c8cacd;"></div>
<div style="left:86px;top:88px;width:1px;height:17px;background:#2e3033;opacity:.6;"></div>
<svg width="18.90" height="16.80" viewBox="0 0 18 16" style="left:92.55px;top:88.60px"><path d="M5 0.55h13l-5 8.5h-13z" fill="url(#gB)" stroke="#16335e" stroke-width="0.6"/><path d="M6.4 10.5L17.6 10.5" stroke="#2a6fcc" stroke-width="2.6" fill="none" /><path d="M9.2 5.65L14.8 15.35" stroke="#2a6fcc" stroke-width="2.6" fill="none" /><path d="M14.8 5.65L9.2 15.35" stroke="#2a6fcc" stroke-width="2.6" fill="none" /><path d="M15.47 10.5L16.69 12.24" stroke="#2a6fcc" stroke-width="2.08" fill="none" /><path d="M15.47 10.5L16.69 8.76" stroke="#2a6fcc" stroke-width="2.08" fill="none" /><path d="M13.74 13.51L12.84 15.44" stroke="#2a6fcc" stroke-width="2.08" fill="none" /><path d="M13.74 13.51L15.86 13.69" stroke="#2a6fcc" stroke-width="2.08" fill="none" /><path d="M10.26 13.51L8.14 13.69" stroke="#2a6fcc" stroke-width="2.08" fill="none" /><path d="M10.26 13.51L11.16 15.44" stroke="#2a6fcc" stroke-width="2.08" fill="none" /><path d="M8.53 10.5L7.31 8.76" stroke="#2a6fcc" stroke-width="2.08" fill="none" /><path d="M8.53 10.5L7.31 12.24" stroke="#2a6fcc" stroke-width="2.08" fill="none" /><path d="M10.26 7.49L11.16 5.56" stroke="#2a6fcc" stroke-width="2.08" fill="none" /><path d="M10.26 7.49L8.14 7.31" stroke="#2a6fcc" stroke-width="2.08" fill="none" /><path d="M13.74 7.49L15.86 7.31" stroke="#2a6fcc" stroke-width="2.08" fill="none" /><path d="M13.74 7.49L12.84 5.56" stroke="#2a6fcc" stroke-width="2.08" fill="none" /><path d="M6.7 10.5L17.3 10.5" stroke="#b4dcff" stroke-width="1.3" fill="none" /><path d="M9.35 5.91L14.65 15.09" stroke="#b4dcff" stroke-width="1.3" fill="none" /><path d="M14.65 5.91L9.35 15.09" stroke="#b4dcff" stroke-width="1.3" fill="none" /><path d="M15.29 10.5L16.44 12.15" stroke="#b4dcff" stroke-width="1.04" fill="none" /><path d="M15.29 10.5L16.44 8.85" stroke="#b4dcff" stroke-width="1.04" fill="none" /><path d="M13.64 13.35L12.79 15.17" stroke="#b4dcff" stroke-width="1.04" fill="none" /><path d="M13.64 13.35L15.65 13.52" stroke="#b4dcff" stroke-width="1.04" fill="none" /><path d="M10.36 13.35L8.35 13.52" stroke="#b4dcff" stroke-width="1.04" fill="none" /><path d="M10.36 13.35L11.21 15.17" stroke="#b4dcff" stroke-width="1.04" fill="none" /><path d="M8.71 10.5L7.56 8.85" stroke="#b4dcff" stroke-width="1.04" fill="none" /><path d="M8.71 10.5L7.56 12.15" stroke="#b4dcff" stroke-width="1.04" fill="none" /><path d="M10.36 7.65L11.21 5.83" stroke="#b4dcff" stroke-width="1.04" fill="none" /><path d="M10.36 7.65L8.35 7.48" stroke="#b4dcff" stroke-width="1.04" fill="none" /><path d="M13.64 7.65L15.65 7.48" stroke="#b4dcff" stroke-width="1.04" fill="none" /><path d="M13.64 7.65L12.79 5.83" stroke="#b4dcff" stroke-width="1.04" fill="none" /></svg>
<svg width="18.90" height="16.80" viewBox="0 0 18 16" style="left:116.55px;top:88.60px"><path d="M3.75 10.5h13l-4.5 5h-13z" fill="url(#gW)" stroke="#505357" stroke-width="0.6"/><path d="M3.75 7h13l-4.5 5h-13z" fill="url(#gW)" stroke="#505357" stroke-width="0.6"/><path d="M5 0.55h13l-5 8.5h-13z" fill="url(#gB)" stroke="#16335e" stroke-width="0.6" stroke-dasharray="1.2 1" stroke-width="1.1"/><path d="M6.4 10.5L17.6 10.5" stroke="#2a6fcc" stroke-width="2.6" fill="none" /><path d="M9.2 5.65L14.8 15.35" stroke="#2a6fcc" stroke-width="2.6" fill="none" /><path d="M14.8 5.65L9.2 15.35" stroke="#2a6fcc" stroke-width="2.6" fill="none" /><path d="M15.47 10.5L16.69 12.24" stroke="#2a6fcc" stroke-width="2.08" fill="none" /><path d="M15.47 10.5L16.69 8.76" stroke="#2a6fcc" stroke-width="2.08" fill="none" /><path d="M13.74 13.51L12.84 15.44" stroke="#2a6fcc" stroke-width="2.08" fill="none" /><path d="M13.74 13.51L15.86 13.69" stroke="#2a6fcc" stroke-width="2.08" fill="none" /><path d="M10.26 13.51L8.14 13.69" stroke="#2a6fcc" stroke-width="2.08" fill="none" /><path d="M10.26 13.51L11.16 15.44" stroke="#2a6fcc" stroke-width="2.08" fill="none" /><path d="M8.53 10.5L7.31 8.76" stroke="#2a6fcc" stroke-width="2.08" fill="none" /><path d="M8.53 10.5L7.31 12.24" stroke="#2a6fcc" stroke-width="2.08" fill="none" /><path d="M10.26 7.49L11.16 5.56" stroke="#2a6fcc" stroke-width="2.08" fill="none" /><path d="M10.26 7.49L8.14 7.31" stroke="#2a6fcc" stroke-width="2.08" fill="none" /><path d="M13.74 7.49L15.86 7.31" stroke="#2a6fcc" stroke-width="2.08" fill="none" /><path d="M13.74 7.49L12.84 5.56" stroke="#2a6fcc" stroke-width="2.08" fill="none" /><path d="M6.7 10.5L17.3 10.5" stroke="#b4dcff" stroke-width="1.3" fill="none" /><path d="M9.35 5.91L14.65 15.09" stroke="#b4dcff" stroke-width="1.3" fill="none" /><path d="M14.65 5.91L9.35 15.09" stroke="#b4dcff" stroke-width="1.3" fill="none" /><path d="M15.29 10.5L16.44 12.15" stroke="#b4dcff" stroke-width="1.04" fill="none" /><path d="M15.29 10.5L16.44 8.85" stroke="#b4dcff" stroke-width="1.04" fill="none" /><path d="M13.64 13.35L12.79 15.17" stroke="#b4dcff" stroke-width="1.04" fill="none" /><path d="M13.64 13.35L15.65 13.52" stroke="#b4dcff" stroke-width="1.04" fill="none" /><path d="M10.36 13.35L8.35 13.52" stroke="#b4dcff" stroke-width="1.04" fill="none" /><path d="M10.36 13.35L11.21 15.17" stroke="#b4dcff" stroke-width="1.04" fill="none" /><path d="M8.71 10.5L7.56 8.85" stroke="#b4dcff" stroke-width="1.04" fill="none" /><path d="M8.71 10.5L7.56 12.15" stroke="#b4dcff" stroke-width="1.04" fill="none" /><path d="M10.36 7.65L11.21 5.83" stroke="#b4dcff" stroke-width="1.04" fill="none" /><path d="M10.36 7.65L8.35 7.48" stroke="#b4dcff" stroke-width="1.04" fill="none" /><path d="M13.64 7.65L15.65 7.48" stroke="#b4dcff" stroke-width="1.04" fill="none" /><path d="M13.64 7.65L12.79 5.83" stroke="#b4dcff" stroke-width="1.04" fill="none" /></svg>
<svg width="18.90" height="16.80" viewBox="0 0 18 16" style="left:140.55px;top:88.60px"><path d="M4.25 9.95h13l-4.5 5.5h-13z" fill="url(#gW)" stroke="#505357" stroke-width="0.6"/><path d="M4.25 5.45h13l-4.5 5.5h-13z" fill="url(#gW)" stroke="#505357" stroke-width="0.6"/><path d="M4.25 0.95h13l-4.5 5.5h-13z" fill="url(#gW)" stroke="#505357" stroke-width="0.6"/><path d="M16.2 10L18.3 10" stroke="#f6c21c" stroke-width="1.2" fill="none" /><path d="M14.97 12.97L16.45 14.45" stroke="#f6c21c" stroke-width="1.2" fill="none" /><path d="M12 14.2L12 16.3" stroke="#f6c21c" stroke-width="1.2" fill="none" /><path d="M9.03 12.97L7.55 14.45" stroke="#f6c21c" stroke-width="1.2" fill="none" /><path d="M7.8 10L5.7 10" stroke="#f6c21c" stroke-width="1.2" fill="none" /><path d="M9.03 7.03L7.55 5.55" stroke="#f6c21c" stroke-width="1.2" fill="none" /><path d="M12 5.8L12 3.7" stroke="#f6c21c" stroke-width="1.2" fill="none" /><path d="M14.97 7.03L16.45 5.55" stroke="#f6c21c" stroke-width="1.2" fill="none" /><circle cx="12" cy="10" r="3.2" fill="#f6c21c"/></svg>
<div style="left:165px;top:88px;width:1px;height:17px;background:#c8cacd;"></div>
<div style="left:166px;top:88px;width:1px;height:17px;background:#2e3033;opacity:.6;"></div>
<svg width="18.90" height="16.80" viewBox="0 0 18 16" style="left:172.55px;top:88.60px"><path d="M5 0.55h13l-5 8.5h-13z" fill="url(#gB)" stroke="#16335e" stroke-width="0.6"/><g transform="translate(8 5)"><path d="M2 5v-2.200a2.600 2.600 0 0 1 5.200 0v2.200" fill="none" stroke="#c8cacd" stroke-width="1.7"/><rect x="0" y="4.6" width="9" height="6.4" fill="url(#gB)" stroke="#153e80" stroke-width="0.6" rx="0.8"/><rect x="0.8" y="5.4" width="7.4" height="1.2" fill="#a8cdf4"/></g></svg>
<svg width="18.90" height="16.80" viewBox="0 0 18 16" style="left:196.55px;top:88.60px"><path d="M3.75 10.5h13l-4.5 5h-13z" fill="url(#gW)" stroke="#505357" stroke-width="0.6"/><path d="M3.75 7h13l-4.5 5h-13z" fill="url(#gW)" stroke="#505357" stroke-width="0.6"/><path d="M5 0.55h13l-5 8.5h-13z" fill="url(#gB)" stroke="#16335e" stroke-width="0.6" stroke-dasharray="1.2 1" stroke-width="1.1"/><g transform="translate(8 5)"><path d="M2 5v-2.200a2.600 2.600 0 0 1 5.200 0v2.200" fill="none" stroke="#c8cacd" stroke-width="1.7"/><rect x="0" y="4.6" width="9" height="6.4" fill="url(#gB)" stroke="#153e80" stroke-width="0.6" rx="0.8"/><rect x="0.8" y="5.4" width="7.4" height="1.2" fill="#a8cdf4"/></g></svg>
<svg width="18.90" height="16.80" viewBox="0 0 18 16" style="left:220.55px;top:88.60px"><path d="M5 0.55h13l-5 8.5h-13z" fill="url(#gB)" stroke="#16335e" stroke-width="0.6"/><g transform="translate(8 5)"><path d="M-1.500 5v-2.500a2.600 2.600 0 0 1 5.200 0v2.500" fill="none" stroke="#c8cacd" stroke-width="1.7"/><rect x="0" y="4.6" width="9" height="6.4" fill="url(#gB)" stroke="#153e80" stroke-width="0.6" rx="0.8"/><rect x="0.8" y="5.4" width="7.4" height="1.2" fill="#a8cdf4"/></g></svg>
<div style="left:255px;top:83px;width:383px;height:27px;background:linear-gradient(#5b5f64,#4a4d52 45%,#3b3e42);"></div>
<div style="left:255px;top:83px;width:383px;height:1px;background:#6f7378;"></div>
<div style="left:255px;top:83px;width:1px;height:27px;background:#7a7e83;"></div>
<div style="left:638px;top:83px;width:1px;height:28px;background:#1c1d1f;"></div>
<div style="left:254px;top:110px;width:385px;height:1px;background:#1c1d1f;"></div>
<svg width="4" height="20" style="left:258px;top:87px"><rect width="4" height="20" fill="url(#grip)"/></svg>
<div style="left:628px;top:84px;width:10px;height:26px;background:linear-gradient(#484b4f,#35383b);"></div>
<svg width="10" height="8" style="left:628px;top:102px"><rect x="2.5" y="0.5" width="6" height="1" fill="#8e9399"/><path d="M2.5 2.5h6l-3 4z" fill="#8e9399"/></svg>
<svg width="18.90" height="16.80" viewBox="0 0 18 16" style="left:266.55px;top:88.60px"><path d="M3.500 0l3 3h-1.800v5h-2.400v-5h-1.800z" fill="url(#gW)" stroke="#3a3d42" stroke-width="0.5"/><g transform="translate(4 3) scale(0.85)"><path d="M5.500 0l5.500 2.500l-5.500 2.500l-5.500-2.500z" fill="#a9cdf2" stroke="#2b5a9a" stroke-width="0.4"/><path d="M0 2.500l5.500 2.500v6.500l-5.500-2.500z" fill="#6fa5e0" stroke="#2b5a9a" stroke-width="0.4"/><path d="M11 2.500l-5.500 2.500v6.500l5.500-2.500z" fill="#4a86cc" stroke="#2b5a9a" stroke-width="0.4"/></g><rect x="11.4" y="12.5" width="3.2" height="3.6" fill="#a8a8ac" stroke="#505256" stroke-width="0.5"/><path d="M11.4 14L14.6 14" stroke="#e8e8e8" stroke-width="0.7" fill="none" /><path d="M11.4 15.3L14.6 15.3" stroke="#e8e8e8" stroke-width="0.7" fill="none" /><circle cx="13" cy="9" r="4" fill="url(#gBulbOn)" stroke="#4a4230" stroke-width="0.5"/><ellipse cx="13" cy="7.7" rx="2.48" ry="1.8" fill="#ffffff"/></svg>
<svg width="18.90" height="16.80" viewBox="0 0 18 16" style="left:290.55px;top:88.60px"><path d="M3.500 0l3 3h-1.800v5h-2.400v-5h-1.800z" fill="url(#gW)" stroke="#3a3d42" stroke-width="0.5"/><g transform="translate(4 3) scale(0.85)"><path d="M5.500 0l5.500 2.500l-5.500 2.500l-5.500-2.500z" fill="#a9cdf2" stroke="#2b5a9a" stroke-width="0.4"/><path d="M0 2.500l5.500 2.500v6.500l-5.500-2.500z" fill="#6fa5e0" stroke="#2b5a9a" stroke-width="0.4"/><path d="M11 2.500l-5.500 2.500v6.500l5.500-2.500z" fill="#4a86cc" stroke="#2b5a9a" stroke-width="0.4"/></g><rect x="11.4" y="12.5" width="3.2" height="3.6" fill="#a8a8ac" stroke="#505256" stroke-width="0.5"/><path d="M11.4 14L14.6 14" stroke="#e8e8e8" stroke-width="0.7" fill="none" /><path d="M11.4 15.3L14.6 15.3" stroke="#e8e8e8" stroke-width="0.7" fill="none" /><circle cx="13" cy="9" r="4" fill="url(#gBulbOff)" stroke="#505256" stroke-width="0.5"/><ellipse cx="13" cy="7.7" rx="2.48" ry="1.8" fill="#ffffff"/></svg>
<svg width="18.90" height="16.80" viewBox="0 0 18 16" style="left:314.55px;top:88.60px"><g transform="translate(0.5 1) scale(0.75)"><path d="M5.500 0l5.500 2.500l-5.500 2.500l-5.500-2.500z" fill="#a9cdf2" stroke="#2b5a9a" stroke-width="0.4"/><path d="M0 2.500l5.500 2.500v6.500l-5.500-2.500z" fill="#6fa5e0" stroke="#2b5a9a" stroke-width="0.4"/><path d="M11 2.500l-5.500 2.500v6.500l5.500-2.500z" fill="#4a86cc" stroke="#2b5a9a" stroke-width="0.4"/></g><g transform="translate(4 3) scale(0.85)"><path d="M5.500 0l5.500 2.500l-5.500 2.500l-5.500-2.500z" fill="#a9cdf2" stroke="#2b5a9a" stroke-width="0.4"/><path d="M0 2.500l5.500 2.500v6.500l-5.500-2.500z" fill="#6fa5e0" stroke="#2b5a9a" stroke-width="0.4"/><path d="M11 2.500l-5.500 2.500v6.500l5.500-2.500z" fill="#4a86cc" stroke="#2b5a9a" stroke-width="0.4"/></g><rect x="11.4" y="12.5" width="3.2" height="3.6" fill="#a8a8ac" stroke="#505256" stroke-width="0.5"/><path d="M11.4 14L14.6 14" stroke="#e8e8e8" stroke-width="0.7" fill="none" /><path d="M11.4 15.3L14.6 15.3" stroke="#e8e8e8" stroke-width="0.7" fill="none" /><circle cx="13" cy="9" r="4" fill="url(#gBulbOn)" stroke="#4a4230" stroke-width="0.5"/><ellipse cx="13" cy="7.7" rx="2.48" ry="1.8" fill="#ffffff"/></svg>
<svg width="18.90" height="16.80" viewBox="0 0 18 16" style="left:338.55px;top:88.60px"><g transform="translate(0.5 1) scale(0.75)"><path d="M5.500 0l5.500 2.500l-5.500 2.500l-5.500-2.500z" fill="#a9cdf2" stroke="#2b5a9a" stroke-width="0.4"/><path d="M0 2.500l5.500 2.500v6.500l-5.500-2.500z" fill="#6fa5e0" stroke="#2b5a9a" stroke-width="0.4"/><path d="M11 2.500l-5.500 2.500v6.500l5.500-2.500z" fill="#4a86cc" stroke="#2b5a9a" stroke-width="0.4"/></g><g transform="translate(4 3) scale(0.85)"><path d="M5.500 0l5.500 2.500l-5.500 2.500l-5.500-2.500z" fill="#a9cdf2" stroke="#2b5a9a" stroke-width="0.4"/><path d="M0 2.500l5.500 2.500v6.500l-5.500-2.500z" fill="#6fa5e0" stroke="#2b5a9a" stroke-width="0.4"/><path d="M11 2.500l-5.500 2.500v6.500l5.500-2.500z" fill="#4a86cc" stroke="#2b5a9a" stroke-width="0.4"/></g><rect x="11.4" y="12.5" width="3.2" height="3.6" fill="#a8a8ac" stroke="#505256" stroke-width="0.5"/><path d="M11.4 14L14.6 14" stroke="#e8e8e8" stroke-width="0.7" fill="none" /><path d="M11.4 15.3L14.6 15.3" stroke="#e8e8e8" stroke-width="0.7" fill="none" /><circle cx="13" cy="9" r="4" fill="url(#gBulbOff)" stroke="#505256" stroke-width="0.5"/><ellipse cx="13" cy="7.7" rx="2.48" ry="1.8" fill="#ffffff"/></svg>
<div style="left:364px;top:88px;width:1px;height:17px;background:#c8cacd;"></div>
<div style="left:365px;top:88px;width:1px;height:17px;background:#2e3033;opacity:.6;"></div>
<svg width="18.90" height="16.80" viewBox="0 0 18 16" style="left:370.55px;top:88.60px"><g transform="translate(0 1.5)"><path d="M6 0l2.300 6.500l4.700 5.300l-6.300-2.100l-6.700 3.300l4.300-6z" fill="#6fb0f0" stroke="#2f6fb8" stroke-width="0.5"/><path d="M6 0l2.300 6.500l-1.600 3.200z" fill="#2f6fb8"/></g><rect x="10.9" y="12.2" width="3.2" height="3.6" fill="#a8a8ac" stroke="#505256" stroke-width="0.5"/><path d="M10.9 13.7L14.1 13.7" stroke="#e8e8e8" stroke-width="0.7" fill="none" /><path d="M10.9 15L14.1 15" stroke="#e8e8e8" stroke-width="0.7" fill="none" /><circle cx="12.5" cy="8.5" r="4.2" fill="url(#gBulbOn)" stroke="#4a4230" stroke-width="0.5"/><ellipse cx="12.5" cy="7.2" rx="2.6" ry="1.89" fill="#ffffff"/></svg>
<svg width="18.90" height="16.80" viewBox="0 0 18 16" style="left:394.55px;top:88.60px"><g transform="translate(0 1.5)"><path d="M6 0l2.300 6.500l4.700 5.300l-6.300-2.100l-6.700 3.300l4.300-6z" fill="#6fb0f0" stroke="#2f6fb8" stroke-width="0.5"/><path d="M6 0l2.300 6.500l-1.600 3.200z" fill="#2f6fb8"/></g><rect x="10.9" y="12.2" width="3.2" height="3.6" fill="#a8a8ac" stroke="#505256" stroke-width="0.5"/><path d="M10.9 13.7L14.1 13.7" stroke="#e8e8e8" stroke-width="0.7" fill="none" /><path d="M10.9 15L14.1 15" stroke="#e8e8e8" stroke-width="0.7" fill="none" /><circle cx="12.5" cy="8.5" r="4.2" fill="url(#gBulbOff)" stroke="#505256" stroke-width="0.5"/><ellipse cx="12.5" cy="7.2" rx="2.6" ry="1.89" fill="#ffffff"/></svg>
<svg width="18.90" height="16.80" viewBox="0 0 18 16" style="left:418.55px;top:88.60px"><g transform="translate(0 1.5)"><path d="M6 0l2.300 6.500l4.700 5.300l-6.300-2.100l-6.700 3.300l4.300-6z" fill="#b4b6ba" stroke="#6a6d72" stroke-width="0.5"/><path d="M6 0l2.300 6.500l-1.600 3.200z" fill="#6a6d72"/></g><rect x="10.9" y="12.2" width="3.2" height="3.6" fill="#a8a8ac" stroke="#505256" stroke-width="0.5"/><path d="M10.9 13.7L14.1 13.7" stroke="#e8e8e8" stroke-width="0.7" fill="none" /><path d="M10.9 15L14.1 15" stroke="#e8e8e8" stroke-width="0.7" fill="none" /><circle cx="12.5" cy="8.5" r="4.2" fill="url(#gBulbOn)" stroke="#4a4230" stroke-width="0.5"/><ellipse cx="12.5" cy="7.2" rx="2.6" ry="1.89" fill="#ffffff"/></svg>
<svg width="18.90" height="16.80" viewBox="0 0 18 16" style="left:442.55px;top:88.60px"><g transform="translate(0 1.5)"><path d="M6 0l2.300 6.500l4.700 5.300l-6.300-2.100l-6.700 3.300l4.300-6z" fill="#b4b6ba" stroke="#6a6d72" stroke-width="0.5"/><path d="M6 0l2.300 6.500l-1.600 3.200z" fill="#6a6d72"/></g><rect x="10.9" y="12.2" width="3.2" height="3.6" fill="#a8a8ac" stroke="#505256" stroke-width="0.5"/><path d="M10.9 13.7L14.1 13.7" stroke="#e8e8e8" stroke-width="0.7" fill="none" /><path d="M10.9 15L14.1 15" stroke="#e8e8e8" stroke-width="0.7" fill="none" /><circle cx="12.5" cy="8.5" r="4.2" fill="url(#gBulbOff)" stroke="#505256" stroke-width="0.5"/><ellipse cx="12.5" cy="7.2" rx="2.6" ry="1.89" fill="#ffffff"/></svg>
<div style="left:468px;top:88px;width:1px;height:17px;background:#c8cacd;"></div>
<div style="left:469px;top:88px;width:1px;height:17px;background:#2e3033;opacity:.6;"></div>
<svg width="18.90" height="16.80" viewBox="0 0 18 16" style="left:474.55px;top:88.60px"><g transform="translate(2.5 0.5) scale(0.95)"><path d="M5.500 0l5.500 2.500l-5.500 2.500l-5.500-2.500z" fill="#a9cdf2" stroke="#2b5a9a" stroke-width="0.4"/><path d="M0 2.500l5.500 2.500v6.500l-5.500-2.500z" fill="#6fa5e0" stroke="#2b5a9a" stroke-width="0.4"/><path d="M11 2.500l-5.500 2.500v6.500l5.500-2.500z" fill="#4a86cc" stroke="#2b5a9a" stroke-width="0.4"/></g><rect x="1" y="8.5" width="6" height="6" fill="#5b9be4" stroke="#cfe4fa" stroke-width="0.9"/><path d="M3 10.5L5 12.5" stroke="#1f4f90" stroke-width="0.9" fill="none" /><rect x="11.4" y="12" width="3.2" height="3.6" fill="#a8a8ac" stroke="#505256" stroke-width="0.5"/><path d="M11.4 13.5L14.6 13.5" stroke="#e8e8e8" stroke-width="0.7" fill="none" /><path d="M11.4 14.8L14.6 14.8" stroke="#e8e8e8" stroke-width="0.7" fill="none" /><circle cx="13" cy="8.5" r="4" fill="url(#gBulbOn)" stroke="#4a4230" stroke-width="0.5"/><ellipse cx="13" cy="7.2" rx="2.48" ry="1.8" fill="#ffffff"/></svg>
<svg width="18.90" height="16.80" viewBox="0 0 18 16" style="left:498.55px;top:88.60px"><g transform="translate(2.5 0.5) scale(0.95)"><path d="M5.500 0l5.500 2.500l-5.500 2.500l-5.500-2.500z" fill="#a9cdf2" stroke="#2b5a9a" stroke-width="0.4"/><path d="M0 2.500l5.500 2.500v6.500l-5.500-2.500z" fill="#6fa5e0" stroke="#2b5a9a" stroke-width="0.4"/><path d="M11 2.500l-5.500 2.500v6.500l5.500-2.500z" fill="#4a86cc" stroke="#2b5a9a" stroke-width="0.4"/></g><rect x="1" y="8.5" width="6" height="6" fill="#5b9be4" stroke="#cfe4fa" stroke-width="0.9"/><path d="M3 10.5L5 12.5" stroke="#1f4f90" stroke-width="0.9" fill="none" /><rect x="11.4" y="12" width="3.2" height="3.6" fill="#a8a8ac" stroke="#505256" stroke-width="0.5"/><path d="M11.4 13.5L14.6 13.5" stroke="#e8e8e8" stroke-width="0.7" fill="none" /><path d="M11.4 14.8L14.6 14.8" stroke="#e8e8e8" stroke-width="0.7" fill="none" /><circle cx="13" cy="8.5" r="4" fill="url(#gBulbOff)" stroke="#505256" stroke-width="0.5"/><ellipse cx="13" cy="7.2" rx="2.48" ry="1.8" fill="#ffffff"/></svg>
<svg width="18.90" height="16.80" viewBox="0 0 18 16" style="left:522.55px;top:88.60px"><g transform="translate(0.5 0.5)"><path d="M0 0h13v9h-8l-3.500 3.500v-3.500h-1.500z" fill="url(#gB)" stroke="#2b5a9a" stroke-width="0.5"/></g><rect x="10.9" y="12.2" width="3.2" height="3.6" fill="#a8a8ac" stroke="#505256" stroke-width="0.5"/><path d="M10.9 13.7L14.1 13.7" stroke="#e8e8e8" stroke-width="0.7" fill="none" /><path d="M10.9 15L14.1 15" stroke="#e8e8e8" stroke-width="0.7" fill="none" /><circle cx="12.5" cy="8.5" r="4.2" fill="url(#gBulbOn)" stroke="#4a4230" stroke-width="0.5"/><ellipse cx="12.5" cy="7.2" rx="2.6" ry="1.89" fill="#ffffff"/></svg>
<svg width="18.90" height="16.80" viewBox="0 0 18 16" style="left:546.55px;top:88.60px"><g transform="translate(0.5 0.5)"><path d="M0 0h13v9h-8l-3.500 3.500v-3.500h-1.500z" fill="url(#gB)" stroke="#2b5a9a" stroke-width="0.5"/></g><rect x="10.9" y="12.2" width="3.2" height="3.6" fill="#a8a8ac" stroke="#505256" stroke-width="0.5"/><path d="M10.9 13.7L14.1 13.7" stroke="#e8e8e8" stroke-width="0.7" fill="none" /><path d="M10.9 15L14.1 15" stroke="#e8e8e8" stroke-width="0.7" fill="none" /><circle cx="12.5" cy="8.5" r="4.2" fill="url(#gBulbOff)" stroke="#505256" stroke-width="0.5"/><ellipse cx="12.5" cy="7.2" rx="2.6" ry="1.89" fill="#ffffff"/></svg>
<div style="left:572px;top:88px;width:1px;height:17px;background:#c8cacd;"></div>
<div style="left:573px;top:88px;width:1px;height:17px;background:#2e3033;opacity:.6;"></div>
<svg width="18.90" height="16.80" viewBox="0 0 18 16" style="left:578.55px;top:88.60px"><g transform="translate(0 0)"><path d="M1.800 1.200l5.200-.7l9 8.700l-5.800 6l-8.700-8.500z" fill="url(#gW)" stroke="#2a2c2f" stroke-width="0.8"/><circle cx="3.8" cy="3.2" r="1.1" fill="#222"/><path d="M3.400 3.200c-2.800 1.800-2.800 5.500-.8 8.500" fill="none" stroke="#111" stroke-width="1"/></g><rect x="11.4" y="12.7" width="3.2" height="3.6" fill="#a8a8ac" stroke="#505256" stroke-width="0.5"/><path d="M11.4 14.2L14.6 14.2" stroke="#e8e8e8" stroke-width="0.7" fill="none" /><path d="M11.4 15.5L14.6 15.5" stroke="#e8e8e8" stroke-width="0.7" fill="none" /><circle cx="13" cy="9" r="4.2" fill="url(#gBulbOn)" stroke="#4a4230" stroke-width="0.5"/><ellipse cx="13" cy="7.7" rx="2.6" ry="1.89" fill="#ffffff"/></svg>
<svg width="18.90" height="16.80" viewBox="0 0 18 16" style="left:602.55px;top:88.60px"><g transform="translate(0 0)"><path d="M1.800 1.200l5.200-.7l9 8.700l-5.800 6l-8.700-8.500z" fill="url(#gW)" stroke="#2a2c2f" stroke-width="0.8"/><circle cx="3.8" cy="3.2" r="1.1" fill="#222"/><path d="M3.400 3.200c-2.800 1.800-2.800 5.500-.8 8.500" fill="none" stroke="#111" stroke-width="1"/></g><rect x="11.4" y="12.7" width="3.2" height="3.6" fill="#a8a8ac" stroke="#505256" stroke-width="0.5"/><path d="M11.4 14.2L14.6 14.2" stroke="#e8e8e8" stroke-width="0.7" fill="none" /><path d="M11.4 15.5L14.6 15.5" stroke="#e8e8e8" stroke-width="0.7" fill="none" /><circle cx="13" cy="9" r="4.2" fill="url(#gBulbOff)" stroke="#505256" stroke-width="0.5"/><ellipse cx="13" cy="7.7" rx="2.6" ry="1.89" fill="#ffffff"/></svg>
<div style="left:639px;top:83px;width:214px;height:27px;background:linear-gradient(#5b5f64,#4a4d52 45%,#3b3e42);"></div>
<div style="left:639px;top:83px;width:214px;height:1px;background:#6f7378;"></div>
<div style="left:639px;top:83px;width:1px;height:27px;background:#7a7e83;"></div>
<div style="left:853px;top:83px;width:1px;height:28px;background:#1c1d1f;"></div>
<div style="left:638px;top:110px;width:216px;height:1px;background:#1c1d1f;"></div>
<svg width="4" height="20" style="left:642px;top:87px"><rect width="4" height="20" fill="url(#grip)"/></svg>
<div style="left:843px;top:84px;width:10px;height:26px;background:linear-gradient(#484b4f,#35383b);"></div>
<svg width="10" height="8" style="left:843px;top:102px"><rect x="2.5" y="0.5" width="6" height="1" fill="#8e9399"/><path d="M2.5 2.5h6l-3 4z" fill="#8e9399"/></svg>
<svg width="18.90" height="16.80" viewBox="0 0 18 16" style="left:649.55px;top:88.60px"><g transform="translate(0.5 0.5) scale(1.05)"><path d="M5.500 0l5.500 2.500l-5.500 2.500l-5.500-2.500z" fill="#a9cdf2" stroke="#2b5a9a" stroke-width="0.4"/><path d="M0 2.500l5.500 2.500v6.500l-5.500-2.500z" fill="#6fa5e0" stroke="#2b5a9a" stroke-width="0.4"/><path d="M11 2.500l-5.500 2.500v6.500l5.500-2.500z" fill="#4a86cc" stroke="#2b5a9a" stroke-width="0.4"/></g><circle cx="12" cy="9" r="2.6" fill="#f2c8a0" stroke="#7a4a20" stroke-width="0.5"/><path d="M9.700 8.200a2.400 2.400 0 0 1 4.600 0z" fill="#8a4a20"/><path d="M8 15.500c0-3 1.500-4 4-4s4 1 4 4z" fill="#4da0f0" stroke="#1f4f90" stroke-width="0.5"/></svg>
<svg width="18.90" height="16.80" viewBox="0 0 18 16" style="left:673.55px;top:88.60px"><rect x="1.5" y="1.5" width="11.5" height="11.5" fill="url(#gBadge)" stroke="#0b3f9a" stroke-width="0.6"/><text x="5.2" y="11.3" font-family="Liberation Serif,sans-serif" font-size="12" font-weight="bold" fill="#fff" font-style="italic">i</text><path d="M9.7 14.35L15.84 7.56L13.47 5.41L7.33 12.2z" fill="#f2b01e" stroke="#7a5200" stroke-width="0.5"/><path d="M6.5 15.5L9.7 14.35L7.33 12.2z" fill="#f6e2b8" stroke="#7a5200" stroke-width="0.5"/><path d="M15.84 7.56L17.19 6.07L14.81 3.93L13.47 5.41z" fill="#f06a18" stroke="#7a3000" stroke-width="0.5"/><path d="M8.51 13.28L14.66 6.48" stroke="#ffe27a" stroke-width="0.8" fill="none" /></svg>
<svg width="18.90" height="16.80" viewBox="0 0 18 16" style="left:697.55px;top:88.60px"><rect x="1.5" y="1.5" width="11.5" height="11.5" fill="url(#gBadge)" stroke="#0b3f9a" stroke-width="0.6"/><text x="5.2" y="11.3" font-family="Liberation Serif,sans-serif" font-size="12" font-weight="bold" fill="#fff" font-style="italic">i</text><g transform="translate(9 5.5) scale(1)"><rect x="0.5" y="2.5" width="7" height="7" fill="url(#gG)" stroke="#1e1f21" stroke-width="0.8" rx="0.6"/><rect x="0" y="1" width="8" height="1.6" fill="#d0d2d6" stroke="#1e1f21" stroke-width="0.6" rx="0.5"/><rect x="2.8" y="0" width="2.4" height="1.2" fill="#d0d2d6" stroke="#1e1f21" stroke-width="0.5"/><path d="M2.7 4L2.7 8.5" stroke="#2a2c2f" stroke-width="1" fill="none" /><path d="M5.3 4L5.3 8.5" stroke="#2a2c2f" stroke-width="1" fill="none" /></g></svg>
<svg width="18.90" height="16.80" viewBox="0 0 18 16" style="left:721.55px;top:88.60px"><g transform="translate(0 0.5)"><path d="M1.800 1.200l5.200-.7l9 8.700l-5.800 6l-8.700-8.500z" fill="url(#gW)" stroke="#2a2c2f" stroke-width="0.8"/><circle cx="3.8" cy="3.2" r="1.1" fill="#222"/><path d="M3.400 3.200c-2.800 1.800-2.800 5.500-.8 8.500" fill="none" stroke="#111" stroke-width="1"/></g><path d="M8.500 2c3.500-.5 6 1.500 6 4.500h2l-3.500 3.500l-3.500-3.500h2c0-1.500-1.200-2.500-3-2.500z" fill="#2f8ff0" stroke="#0b4faa" stroke-width="0.5"/></svg>
<svg width="18.90" height="16.80" viewBox="0 0 18 16" style="left:745.55px;top:88.60px"><g transform="translate(0 0.5)"><path d="M1.800 1.200l5.200-.7l9 8.700l-5.800 6l-8.700-8.500z" fill="url(#gW)" stroke="#2a2c2f" stroke-width="0.8"/><circle cx="3.8" cy="3.2" r="1.1" fill="#222"/><path d="M3.400 3.200c-2.800 1.800-2.800 5.500-.8 8.500" fill="none" stroke="#111" stroke-width="1"/></g><circle cx="12.5" cy="5" r="4.7" fill="url(#gBadge)" stroke="#0b3f9a" stroke-width="0.5"/><path d="M9.3 3.6h5.4m-1.500 -1.600l1.800 1.600l-1.800 1.600M15.7 6.6h-5.4m1.500 -1.600l-1.800 1.600l1.800 1.600" fill="none" stroke="#ffffff" stroke-width="1.1"/></svg>
<svg width="18.90" height="16.80" viewBox="0 0 18 16" style="left:769.55px;top:88.60px"><g transform="translate(0 0)"><path d="M1.800 1.200l5.200-.7l9 8.700l-5.800 6l-8.700-8.500z" fill="url(#gW)" stroke="#2a2c2f" stroke-width="0.8"/><circle cx="3.8" cy="3.2" r="1.1" fill="#222"/><path d="M3.400 3.200c-2.800 1.800-2.800 5.500-.8 8.500" fill="none" stroke="#111" stroke-width="1"/></g><g transform="translate(8.5 6) scale(1)"><rect x="0.5" y="2.5" width="7" height="7" fill="url(#gG)" stroke="#1e1f21" stroke-width="0.8" rx="0.6"/><rect x="0" y="1" width="8" height="1.6" fill="#d0d2d6" stroke="#1e1f21" stroke-width="0.6" rx="0.5"/><rect x="2.8" y="0" width="2.4" height="1.2" fill="#d0d2d6" stroke="#1e1f21" stroke-width="0.5"/><path d="M2.7 4L2.7 8.5" stroke="#2a2c2f" stroke-width="1" fill="none" /><path d="M5.3 4L5.3 8.5" stroke="#2a2c2f" stroke-width="1" fill="none" /></g></svg>
<svg width="18.90" height="16.80" viewBox="0 0 18 16" style="left:793.55px;top:88.60px"><g transform="translate(0 0.5)"><path d="M1.800 1.200l5.200-.7l9 8.700l-5.800 6l-8.700-8.500z" fill="url(#gW)" stroke="#2a2c2f" stroke-width="0.8"/><circle cx="3.8" cy="3.2" r="1.1" fill="#222"/><path d="M3.400 3.200c-2.800 1.800-2.800 5.500-.8 8.500" fill="none" stroke="#111" stroke-width="1"/></g><circle cx="3.5" cy="12.5" r="2.6" fill="#f6d020" stroke="#8a7000" stroke-width="0.4"/><circle cx="12.5" cy="5" r="4.7" fill="url(#gBadge)" stroke="#0b3f9a" stroke-width="0.5"/><path d="M9.3 3.6h5.4m-1.500 -1.600l1.800 1.600l-1.800 1.600M15.7 6.6h-5.4m1.500 -1.600l-1.800 1.600l1.800 1.600" fill="none" stroke="#ffffff" stroke-width="1.1"/></svg>
<svg width="18.90" height="16.80" viewBox="0 0 18 16" style="left:817.55px;top:88.60px"><g transform="translate(0 0.5)"><path d="M1.800 1.200l5.200-.7l9 8.700l-5.800 6l-8.700-8.500z" fill="url(#gW)" stroke="#2a2c2f" stroke-width="0.8"/><circle cx="3.8" cy="3.2" r="1.1" fill="#222"/><path d="M3.400 3.200c-2.800 1.800-2.800 5.500-.8 8.500" fill="none" stroke="#111" stroke-width="1"/></g><circle cx="3.5" cy="12.5" r="2.6" fill="#f6d020" stroke="#8a7000" stroke-width="0.4"/><path d="M13.31 7.81L16.55 11.05" stroke="#3b8be8" stroke-width="2.2" fill="none" stroke-linecap="round"/><circle cx="11" cy="5.5" r="3.3" fill="#bfe4ff" stroke="#f4f4f4" stroke-width="1.4"/><circle cx="11" cy="5.5" r="4.2" fill="none" stroke="#3a3d42" stroke-width="0.5"/></svg>
<div style="left:854px;top:83px;width:142px;height:27px;background:linear-gradient(#5b5f64,#4a4d52 45%,#3b3e42);"></div>
<div style="left:854px;top:83px;width:142px;height:1px;background:#6f7378;"></div>
<div style="left:854px;top:83px;width:1px;height:27px;background:#7a7e83;"></div>
<div style="left:996px;top:83px;width:1px;height:28px;background:#1c1d1f;"></div>
<div style="left:853px;top:110px;width:144px;height:1px;background:#1c1d1f;"></div>
<svg width="4" height="20" style="left:857px;top:87px"><rect width="4" height="20" fill="url(#grip)"/></svg>
<div style="left:986px;top:84px;width:10px;height:26px;background:linear-gradient(#484b4f,#35383b);"></div>
<svg width="10" height="8" style="left:986px;top:102px"><rect x="2.5" y="0.5" width="6" height="1" fill="#8e9399"/><path d="M2.5 2.5h6l-3 4z" fill="#8e9399"/></svg>
<svg width="18.90" height="16.80" viewBox="0 0 18 16" style="left:864.55px;top:88.60px"><g transform="translate(1 0.5)"><path d="M6 0l2.300 6.500l4.700 5.300l-6.300-2.100l-6.700 3.300l4.300-6z" fill="#6fb0f0" stroke="#2f6fb8" stroke-width="0.5"/><path d="M6 0l2.300 6.500l-1.600 3.200z" fill="#2f6fb8"/></g><circle cx="12.5" cy="10.5" r="4.7" fill="url(#gBadge)" stroke="#0b3f9a" stroke-width="0.5"/><path d="M9.3 9.1h5.4m-1.500 -1.600l1.800 1.600l-1.800 1.600M15.7 12.1h-5.4m1.500 -1.600l-1.800 1.600l1.800 1.600" fill="none" stroke="#ffffff" stroke-width="1.1"/></svg>
<svg width="18.90" height="16.80" viewBox="0 0 18 16" style="left:888.55px;top:88.60px"><g transform="translate(1 0.5) scale(1)"><path d="M5.500 0l5.500 2.500l-5.500 2.500l-5.500-2.500z" fill="#a9cdf2" stroke="#2b5a9a" stroke-width="0.4"/><path d="M0 2.500l5.500 2.500v6.500l-5.500-2.500z" fill="#6fa5e0" stroke="#2b5a9a" stroke-width="0.4"/><path d="M11 2.500l-5.500 2.500v6.500l5.500-2.500z" fill="#4a86cc" stroke="#2b5a9a" stroke-width="0.4"/></g><circle cx="12.5" cy="10.5" r="4.7" fill="url(#gBadge)" stroke="#0b3f9a" stroke-width="0.5"/><path d="M9.3 9.1h5.4m-1.500 -1.600l1.800 1.600l-1.800 1.600M15.7 12.1h-5.4m1.500 -1.600l-1.800 1.600l1.800 1.600" fill="none" stroke="#ffffff" stroke-width="1.1"/></svg>
<svg width="18.90" height="16.80" viewBox="0 0 18 16" style="left:912.55px;top:88.60px"><g transform="translate(1 1)"><path d="M0 0h13v9h-8l-3.500 3.500v-3.500h-1.500z" fill="url(#gB)" stroke="#2b5a9a" stroke-width="0.5"/></g><circle cx="12.5" cy="10.5" r="4.7" fill="url(#gBadge)" stroke="#0b3f9a" stroke-width="0.5"/><path d="M9.3 9.1h5.4m-1.500 -1.600l1.800 1.600l-1.800 1.600M15.7 12.1h-5.4m1.500 -1.600l-1.800 1.600l1.800 1.600" fill="none" stroke="#ffffff" stroke-width="1.1"/></svg>
<svg width="18.90" height="16.80" viewBox="0 0 18 16" style="left:936.55px;top:88.60px"><g transform="translate(1 0.5)"><path d="M6 0l2.300 6.500l4.700 5.300l-6.300-2.100l-6.700 3.300l4.300-6z" fill="#c4c6ca" stroke="#6a6d72" stroke-width="0.5"/><path d="M6 0l2.300 6.500l-1.600 3.200z" fill="#6a6d72"/></g><circle cx="12.5" cy="10.5" r="4.7" fill="url(#gBadge)" stroke="#0b3f9a" stroke-width="0.5"/><path d="M9.3 9.1h5.4m-1.500 -1.600l1.800 1.600l-1.800 1.600M15.7 12.1h-5.4m1.500 -1.600l-1.800 1.600l1.800 1.600" fill="none" stroke="#ffffff" stroke-width="1.1"/></svg>
<svg width="18.90" height="16.80" viewBox="0 0 18 16" style="left:960.55px;top:88.60px"><rect x="2" y="1" width="14" height="14" fill="url(#gG)" stroke="#3a3d42" stroke-width="0.6"/><path d="M5 12L11 4.5" stroke="#1c1c1c" stroke-width="1.1" fill="none" /><rect x="2.5" y="10.5" width="4" height="4" fill="#f4f4f4" stroke="#3a3d42" stroke-width="0.6"/><circle cx="12" cy="4.5" r="2.8" fill="#3b8be8" stroke="#0b4faa" stroke-width="0.5"/><path d="M12.72 14.4L16.31 10.55L13.97 8.37L10.38 12.22z" fill="#f2b01e" stroke="#7a5200" stroke-width="0.5"/><path d="M9.5 15.5L12.72 14.4L10.38 12.22z" fill="#f6e2b8" stroke="#7a5200" stroke-width="0.5"/><path d="M16.31 10.55L17.67 9.09L15.33 6.91L13.97 8.37z" fill="#f06a18" stroke="#7a3000" stroke-width="0.5"/><path d="M11.55 13.31L15.14 9.46" stroke="#ffe27a" stroke-width="0.8" fill="none" /></svg>
<div style="left:997px;top:83px;width:190px;height:27px;background:linear-gradient(#5b5f64,#4a4d52 45%,#3b3e42);"></div>
<div style="left:997px;top:83px;width:190px;height:1px;background:#6f7378;"></div>
<div style="left:997px;top:83px;width:1px;height:27px;background:#7a7e83;"></div>
<div style="left:1187px;top:83px;width:1px;height:28px;background:#1c1d1f;"></div>
<div style="left:996px;top:110px;width:192px;height:1px;background:#1c1d1f;"></div>
<svg width="4" height="20" style="left:1000px;top:87px"><rect width="4" height="20" fill="url(#grip)"/></svg>
<div style="left:1177px;top:84px;width:10px;height:26px;background:linear-gradient(#484b4f,#35383b);"></div>
<svg width="10" height="8" style="left:1177px;top:102px"><rect x="2.5" y="0.5" width="6" height="1" fill="#8e9399"/><path d="M2.5 2.5h6l-3 4z" fill="#8e9399"/></svg>
<svg width="18.90" height="16.80" viewBox="0 0 18 16" style="left:1007.55px;top:88.60px"><g transform="translate(1 0.5)"><rect x="0.5" y="0.5" width="13" height="13" fill="#f4f4f4" stroke="#2a2c2f" stroke-width="0.8"/><rect x="0.5" y="0.5" width="13" height="3" fill="#58a858" stroke="#2a5a2a" stroke-width="0.5"/><path d="M3.75 3.5L3.75 13.5" stroke="#8a8a8a" stroke-width="0.8" fill="none" /><path d="M7 3.5L7 13.5" stroke="#8a8a8a" stroke-width="0.8" fill="none" /><path d="M10.25 3.5L10.25 13.5" stroke="#8a8a8a" stroke-width="0.8" fill="none" /><path d="M0.5 6.8L13.5 6.8" stroke="#8a8a8a" stroke-width="0.8" fill="none" /><path d="M0.5 10.1L13.5 10.1" stroke="#8a8a8a" stroke-width="0.8" fill="none" /></g><circle cx="12.5" cy="11" r="4.8" fill="url(#gBadge)" stroke="#0b3f9a" stroke-width="0.5"/><rect x="11.6" y="8" width="1.8" height="3.8" fill="#fff" rx="0.8"/><circle cx="12.5" cy="13.3" r="1" fill="#fff"/></svg>
<svg width="18.90" height="16.80" viewBox="0 0 18 16" style="left:1031.55px;top:88.60px"><g transform="translate(1 0.5)"><rect x="0.5" y="0.5" width="13" height="13" fill="#f4f4f4" stroke="#2a2c2f" stroke-width="0.8"/><rect x="0.5" y="0.5" width="13" height="3" fill="#58a858" stroke="#2a5a2a" stroke-width="0.5"/><path d="M3.75 3.5L3.75 13.5" stroke="#8a8a8a" stroke-width="0.8" fill="none" /><path d="M7 3.5L7 13.5" stroke="#8a8a8a" stroke-width="0.8" fill="none" /><path d="M10.25 3.5L10.25 13.5" stroke="#8a8a8a" stroke-width="0.8" fill="none" /><path d="M0.5 6.8L13.5 6.8" stroke="#8a8a8a" stroke-width="0.8" fill="none" /><path d="M0.5 10.1L13.5 10.1" stroke="#8a8a8a" stroke-width="0.8" fill="none" /></g><circle cx="12.5" cy="11" r="4.8" fill="url(#gBadge)" stroke="#0b3f9a" stroke-width="0.5"/><path d="M9.7 11h5.600M12.5 8.2v5.600" fill="none" stroke="#fff" stroke-width="1.3"/></svg>
<svg width="18.90" height="16.80" viewBox="0 0 18 16" style="left:1055.55px;top:88.60px"><g transform="translate(1 0.5)"><rect x="0.5" y="0.5" width="13" height="11" fill="#f6f6f6" stroke="#2a2c2f" stroke-width="0.9" rx="0.6"/><path d="M2.200 2l4.600 5.500M6.800 2l-4.600 5.500" fill="none" stroke="#12903a" stroke-width="1.9"/><rect x="8.5" y="2" width="3.6" height="1.5" fill="#8fce9a"/><rect x="8.5" y="4.7" width="3.6" height="1.5" fill="#8fce9a"/><rect x="8.5" y="7.4" width="3.6" height="1.5" fill="#8fce9a"/><rect x="2" y="8.6" width="4.6" height="1.6" fill="#8fce9a"/></g><g transform="translate(7 8.5) scale(0.95)"><path d="M.5 1.500h3l1 1.200h4v5h-8z" fill="url(#gW)" stroke="#2a2c2f" stroke-width="0.6"/><path d="M2.500 4h8l-2 4h-8z" fill="url(#gB)" stroke="#1f4f90" stroke-width="0.6"/></g></svg>
<svg width="18.90" height="16.80" viewBox="0 0 18 16" style="left:1079.55px;top:88.60px"><g transform="translate(1 0.5)"><rect x="0.5" y="0.5" width="13" height="11" fill="#f6f6f6" stroke="#2a2c2f" stroke-width="0.9" rx="0.6"/><path d="M2.200 2l4.600 5.500M6.800 2l-4.600 5.500" fill="none" stroke="#12903a" stroke-width="1.9"/><rect x="8.5" y="2" width="3.6" height="1.5" fill="#8fce9a"/><rect x="8.5" y="4.7" width="3.6" height="1.5" fill="#8fce9a"/><rect x="8.5" y="7.4" width="3.6" height="1.5" fill="#8fce9a"/><rect x="2" y="8.6" width="4.6" height="1.6" fill="#8fce9a"/></g><rect x="10" y="8.5" width="7" height="7" fill="#e01818" stroke="#7a0000" stroke-width="0.4"/><path d="M11.3 9.8l4.4 4.4M15.7 9.8l-4.4 4.4" fill="none" stroke="#fff" stroke-width="1.1"/></svg>
<svg width="18.90" height="16.80" viewBox="0 0 18 16" style="left:1103.55px;top:88.60px"><g transform="translate(1 0.5)"><rect x="0.5" y="0.5" width="13" height="11" fill="#f6f6f6" stroke="#2a2c2f" stroke-width="0.9" rx="0.6"/><path d="M2.200 2l4.600 5.500M6.800 2l-4.600 5.500" fill="none" stroke="#12903a" stroke-width="1.9"/><rect x="8.5" y="2" width="3.6" height="1.5" fill="#8fce9a"/><rect x="8.5" y="4.7" width="3.6" height="1.5" fill="#8fce9a"/><rect x="8.5" y="7.4" width="3.6" height="1.5" fill="#8fce9a"/><rect x="2" y="8.6" width="4.6" height="1.6" fill="#8fce9a"/></g><g transform="translate(8 5.5) scale(1.05)"><rect x="0.5" y="2.5" width="7" height="7" fill="url(#gG)" stroke="#1e1f21" stroke-width="0.8" rx="0.6"/><rect x="0" y="1" width="8" height="1.6" fill="#d0d2d6" stroke="#1e1f21" stroke-width="0.6" rx="0.5"/><rect x="2.8" y="0" width="2.4" height="1.2" fill="#d0d2d6" stroke="#1e1f21" stroke-width="0.5"/><path d="M2.7 4L2.7 8.5" stroke="#2a2c2f" stroke-width="1" fill="none" /><path d="M5.3 4L5.3 8.5" stroke="#2a2c2f" stroke-width="1" fill="none" /></g></svg>
<svg width="18.90" height="16.80" viewBox="0 0 18 16" style="left:1127.55px;top:88.60px"><g transform="translate(1 0.5)"><rect x="0.5" y="0.5" width="13" height="11" fill="#f6f6f6" stroke="#2a2c2f" stroke-width="0.9" rx="0.6"/><path d="M2.200 2l4.600 5.500M6.800 2l-4.600 5.500" fill="none" stroke="#12903a" stroke-width="1.9"/><rect x="8.5" y="2" width="3.6" height="1.5" fill="#8fce9a"/><rect x="8.5" y="4.7" width="3.6" height="1.5" fill="#8fce9a"/><rect x="8.5" y="7.4" width="3.6" height="1.5" fill="#8fce9a"/><rect x="2" y="8.6" width="4.6" height="1.6" fill="#8fce9a"/></g><path d="M8 10h5v-2.500l4.500 4l-4.500 4v-2.500h-5z" fill="#2f8ff0" stroke="#0b4faa" stroke-width="0.5"/></svg>
<svg width="18.90" height="16.80" viewBox="0 0 18 16" style="left:1151.55px;top:88.60px"><g transform="translate(1 0.5)"><rect x="0.5" y="0.5" width="13" height="11" fill="#f6f6f6" stroke="#2a2c2f" stroke-width="0.9" rx="0.6"/><path d="M2.200 2l4.600 5.500M6.800 2l-4.600 5.500" fill="none" stroke="#12903a" stroke-width="1.9"/><rect x="8.5" y="2" width="3.6" height="1.5" fill="#8fce9a"/><rect x="8.5" y="4.7" width="3.6" height="1.5" fill="#8fce9a"/><rect x="8.5" y="7.4" width="3.6" height="1.5" fill="#8fce9a"/><rect x="2" y="8.6" width="4.6" height="1.6" fill="#8fce9a"/></g><path d="M7.500 11a4 4 0 1 0 4-4" fill="none" stroke="#2f7fe8" stroke-width="2.2"/><path d="M12.500 4l-4 3l4 3z" fill="#2f7fe8"/><circle cx="11.5" cy="11" r="1.6" fill="#c8cacd"/></svg>
<div style="left:1188px;top:83px;width:166px;height:27px;background:linear-gradient(#5b5f64,#4a4d52 45%,#3b3e42);"></div>
<div style="left:1188px;top:83px;width:166px;height:1px;background:#6f7378;"></div>
<div style="left:1188px;top:83px;width:1px;height:27px;background:#7a7e83;"></div>
<div style="left:1354px;top:83px;width:1px;height:28px;background:#1c1d1f;"></div>
<div style="left:1187px;top:110px;width:168px;height:1px;background:#1c1d1f;"></div>
<svg width="4" height="20" style="left:1191px;top:87px"><rect width="4" height="20" fill="url(#grip)"/></svg>
<div style="left:1344px;top:84px;width:10px;height:26px;background:linear-gradient(#484b4f,#35383b);"></div>
<svg width="10" height="8" style="left:1344px;top:102px"><rect x="2.5" y="0.5" width="6" height="1" fill="#8e9399"/><path d="M2.5 2.5h6l-3 4z" fill="#8e9399"/></svg>
<svg width="18.90" height="16.80" viewBox="0 0 18 16" style="left:1198.55px;top:88.60px"><rect x="1" y="0.5" width="8" height="15" fill="none" stroke="#18a8f8" stroke-width="1.2"/><rect x="2.8" y="2.5" width="4.4" height="4.4" fill="#3f9bf0" stroke="#6fc0ff" stroke-width="0.6"/><rect x="2.8" y="9" width="4.4" height="4.4" fill="#3f9bf0" stroke="#6fc0ff" stroke-width="0.6"/><rect x="11" y="2.8" width="3.6" height="3.6" fill="#ffffff" stroke="#1a1a1a" stroke-width="0.7"/><rect x="11" y="9.5" width="3.6" height="3.6" fill="#ffffff" stroke="#1a1a1a" stroke-width="0.7"/></svg>
<svg width="18.90" height="16.80" viewBox="0 0 18 16" style="left:1222.55px;top:88.60px"><rect x="1" y="0.5" width="16" height="15" fill="none" stroke="#18a8f8" stroke-width="1.2" stroke-dasharray="1.6 1.2"/><rect x="3.5" y="2.8" width="3.6" height="3.6" fill="#ffffff" stroke="#1a1a1a" stroke-width="0.7"/><rect x="10.5" y="2.8" width="3.6" height="3.6" fill="#ffffff" stroke="#1a1a1a" stroke-width="0.7"/><rect x="3.5" y="9.5" width="3.6" height="3.6" fill="#ffffff" stroke="#1a1a1a" stroke-width="0.7"/><rect x="10.5" y="9.5" width="3.6" height="3.6" fill="#ffffff" stroke="#1a1a1a" stroke-width="0.7"/></svg>
<svg width="18.90" height="16.80" viewBox="0 0 18 16" style="left:1246.55px;top:88.60px"><rect x="1" y="0.5" width="8" height="15" fill="none" stroke="#18a8f8" stroke-width="1.2"/><rect x="2.8" y="2.5" width="4.4" height="4.4" fill="#3f9bf0" stroke="#6fc0ff" stroke-width="0.6"/><rect x="2.8" y="9" width="4.4" height="4.4" fill="#3f9bf0" stroke="#6fc0ff" stroke-width="0.6"/><path d="M11 5h5M13.500 2.500v5M11 12h5" fill="none" stroke="#fff" stroke-width="1.2"/></svg>
<svg width="18.90" height="16.80" viewBox="0 0 18 16" style="left:1270.55px;top:88.60px"><rect x="0.8" y="0.5" width="16.4" height="15" fill="none" stroke="#18a8f8" stroke-width="1.2"/><rect x="1.8" y="3" width="14.4" height="9" fill="#b8b8b8" stroke="#8a8a8a" stroke-width="0.5"/><rect x="2.8" y="4" width="5.7" height="7" fill="#2a2a2a"/><text x="3.4" y="10.3" font-family="Liberation Mono,sans-serif" font-size="7.5" font-weight="normal" fill="#fff" >A</text><rect x="9.5" y="4" width="5.7" height="7" fill="#2a2a2a"/><text x="10.1" y="10.3" font-family="Liberation Mono,sans-serif" font-size="7.5" font-weight="normal" fill="#fff" >B</text></svg>
<svg width="18.90" height="16.80" viewBox="0 0 18 16" style="left:1294.55px;top:88.60px"><rect x="0.8" y="0.5" width="16.4" height="15" fill="none" stroke="#18a8f8" stroke-width="1.2" stroke-dasharray="1.6 1.2"/><rect x="1.8" y="3" width="14.4" height="9" fill="#b8b8b8" stroke="#8a8a8a" stroke-width="0.5"/><rect x="2.8" y="4" width="5.7" height="7" fill="#2a2a2a"/><text x="3.4" y="10.3" font-family="Liberation Mono,sans-serif" font-size="7.5" font-weight="normal" fill="#fff" >A</text><rect x="9.5" y="4" width="5.7" height="7" fill="#2a2a2a"/><text x="10.1" y="10.3" font-family="Liberation Mono,sans-serif" font-size="7.5" font-weight="normal" fill="#fff" >B</text></svg>
<svg width="18.90" height="16.80" viewBox="0 0 18 16" style="left:1318.55px;top:88.60px"><rect x="0.8" y="0.5" width="10.4" height="15" fill="none" stroke="#18a8f8" stroke-width="1.2"/><rect x="2.2" y="3" width="7.6" height="9" fill="#b8b8b8" stroke="#8a8a8a" stroke-width="0.5"/><rect x="3.2" y="4" width="5.6" height="7" fill="#2a2a2a"/><text x="3.8" y="10.3" font-family="Liberation Mono,sans-serif" font-size="7.5" font-weight="normal" fill="#fff" >A</text><path d="M12.500 5.500h4.500M14.750 3.200v4.600M12.500 10.500h4.500" fill="none" stroke="#fff" stroke-width="1.1"/></svg>
<div style="left:1px;top:111px;width:949px;height:27px;background:linear-gradient(#5b5f64,#4a4d52 45%,#3b3e42);"></div>
<div style="left:1px;top:111px;width:949px;height:1px;background:#6f7378;"></div>
<div style="left:950px;top:111px;width:1px;height:28px;background:#1c1d1f;"></div>
<div style="left:0px;top:138px;width:951px;height:1px;background:#1c1d1f;"></div>
<svg width="4" height="20" style="left:4px;top:115px"><rect width="4" height="20" fill="url(#grip)"/></svg>
<svg width="19.80" height="17.60" viewBox="0 0 18 16" style="left:12.10px;top:116.70px"><path d="M4.25 9.95h13l-4.5 5.5h-13z" fill="url(#gW)" stroke="#505357" stroke-width="0.6"/><path d="M4.25 5.45h13l-4.5 5.5h-13z" fill="url(#gW)" stroke="#505357" stroke-width="0.6"/><path d="M4.25 0.95h13l-4.5 5.5h-13z" fill="url(#gW)" stroke="#505357" stroke-width="0.6"/></svg>
<div style="left:37px;top:116px;width:1px;height:17px;background:#c8cacd;"></div>
<div style="left:38px;top:116px;width:1px;height:17px;background:#2e3033;opacity:.6;"></div>
<div style="left:42px;top:114px;width:240px;height:22px;background:#3e4144;border:1px solid #6c7075;border-top-color:#0e0e0f;border-left-color:#0e0e0f;"></div>
<span style="left:138px;top:116.22px;font-size:13.5px;line-height:17px;color:#f2f2f2;white-space:pre;letter-spacing:-0.516px;">0</span>
<svg width="10" height="6" style="left:267px;top:122px"><path d="M0 0h10l-5 5.5z" fill="#f4f4f4"/></svg>
<svg width="18.00" height="16.00" viewBox="0 0 18 16" style="left:48.00px;top:117.00px"><rect x="4.9" y="10.2" width="3.2" height="3.6" fill="#a8a8ac" stroke="#505256" stroke-width="0.5"/><path d="M4.9 11.7L8.1 11.7" stroke="#e8e8e8" stroke-width="0.7" fill="none" /><path d="M4.9 13L8.1 13" stroke="#e8e8e8" stroke-width="0.7" fill="none" /><circle cx="6.5" cy="6.5" r="4.2" fill="url(#gBulbOn)" stroke="#4a4230" stroke-width="0.5"/><ellipse cx="6.5" cy="5.2" rx="2.6" ry="1.89" fill="#ffffff"/></svg>
<svg width="18.00" height="16.00" viewBox="0 0 18 16" style="left:63.00px;top:117.00px"><path d="M11.6 8L14.2 8" stroke="#f6c21c" stroke-width="1.2" fill="none" /><path d="M10.55 10.55L12.38 12.38" stroke="#f6c21c" stroke-width="1.2" fill="none" /><path d="M8 11.6L8 14.2" stroke="#f6c21c" stroke-width="1.2" fill="none" /><path d="M5.45 10.55L3.62 12.38" stroke="#f6c21c" stroke-width="1.2" fill="none" /><path d="M4.4 8L1.8 8" stroke="#f6c21c" stroke-width="1.2" fill="none" /><path d="M5.45 5.45L3.62 3.62" stroke="#f6c21c" stroke-width="1.2" fill="none" /><path d="M8 4.4L8 1.8" stroke="#f6c21c" stroke-width="1.2" fill="none" /><path d="M10.55 5.45L12.38 3.62" stroke="#f6c21c" stroke-width="1.2" fill="none" /><circle cx="8" cy="8" r="2.6" fill="#f6c21c"/></svg>
<svg width="18.00" height="16.00" viewBox="0 0 18 16" style="left:80.00px;top:117.00px"><rect x="6" y="5" width="9" height="9" fill="none" stroke="#c8cacd" stroke-width="0.9"/><circle cx="6.5" cy="6.5" r="4.6" fill="#3e4144"/><path d="M1.5 6.5L11.5 6.5" stroke="#f4f4f4" stroke-width="1.1" fill="none" /><path d="M4 2.17L9 10.83" stroke="#f4f4f4" stroke-width="1.1" fill="none" /><path d="M9 2.17L4 10.83" stroke="#f4f4f4" stroke-width="1.1" fill="none" /><path d="M9.6 6.5L10.69 8.06" stroke="#f4f4f4" stroke-width="0.88" fill="none" /><path d="M9.6 6.5L10.69 4.94" stroke="#f4f4f4" stroke-width="0.88" fill="none" /><path d="M8.05 9.18L7.25 10.91" stroke="#f4f4f4" stroke-width="0.88" fill="none" /><path d="M8.05 9.18L9.94 9.35" stroke="#f4f4f4" stroke-width="0.88" fill="none" /><path d="M4.95 9.18L3.06 9.35" stroke="#f4f4f4" stroke-width="0.88" fill="none" /><path d="M4.95 9.18L5.75 10.91" stroke="#f4f4f4" stroke-width="0.88" fill="none" /><path d="M3.4 6.5L2.31 4.94" stroke="#f4f4f4" stroke-width="0.88" fill="none" /><path d="M3.4 6.5L2.31 8.06" stroke="#f4f4f4" stroke-width="0.88" fill="none" /><path d="M4.95 3.82L5.75 2.09" stroke="#f4f4f4" stroke-width="0.88" fill="none" /><path d="M4.95 3.82L3.06 3.65" stroke="#f4f4f4" stroke-width="0.88" fill="none" /><path d="M8.05 3.82L9.94 3.65" stroke="#f4f4f4" stroke-width="0.88" fill="none" /><path d="M8.05 3.82L7.25 2.09" stroke="#f4f4f4" stroke-width="0.88" fill="none" /></svg>
<svg width="18.00" height="16.00" viewBox="0 0 18 16" style="left:96.00px;top:117.00px"><path d="M9 8v-3.500a3 3 0 0 1 6 0v2" fill="none" stroke="#d8dadd" stroke-width="1.8"/><rect x="1.5" y="8" width="9.5" height="7" fill="url(#gG)" stroke="#4a4d52" stroke-width="0.6" rx="0.6"/><rect x="2.5" y="9" width="7.5" height="1.2" fill="#e8e8ea"/></svg>
<div style="left:116px;top:119px;width:13px;height:13px;background:#fff;border:1px solid #000;"></div>
<div style="left:285px;top:116px;width:1px;height:17px;background:#c8cacd;"></div>
<div style="left:286px;top:116px;width:1px;height:17px;background:#2e3033;opacity:.6;"></div>
<div style="left:290px;top:114px;width:130px;height:22px;background:#3e4144;border:1px solid #6c7075;border-top-color:#0e0e0f;border-left-color:#0e0e0f;"></div>
<span style="left:332px;top:116.22px;font-size:13.5px;line-height:17px;color:#f2f2f2;white-space:pre;letter-spacing:-0.219px;">ByLayer</span>
<svg width="10" height="6" style="left:405px;top:122px"><path d="M0 0h10l-5 5.5z" fill="#f4f4f4"/></svg>
<div style="left:295px;top:120px;width:32px;height:11px;background:#fff;border:1px solid #000;"></div>
<div style="left:423px;top:116px;width:1px;height:17px;background:#c8cacd;"></div>
<div style="left:424px;top:116px;width:1px;height:17px;background:#2e3033;opacity:.6;"></div>
<div style="left:428px;top:114px;width:200px;height:22px;background:#3e4144;border:1px solid #6c7075;border-top-color:#0e0e0f;border-left-color:#0e0e0f;"></div>
<span style="left:538px;top:116.22px;font-size:13.5px;line-height:17px;color:#f2f2f2;white-space:pre;letter-spacing:-0.219px;">ByLayer</span>
<svg width="10" height="6" style="left:613px;top:122px"><path d="M0 0h10l-5 5.5z" fill="#f4f4f4"/></svg>
<div style="left:433px;top:125px;width:100px;height:1px;background:#f0f0f0;"></div>
<div style="left:631px;top:116px;width:1px;height:17px;background:#c8cacd;"></div>
<div style="left:632px;top:116px;width:1px;height:17px;background:#2e3033;opacity:.6;"></div>
<div style="left:636px;top:114px;width:160px;height:22px;background:#3e4144;border:1px solid #6c7075;border-top-color:#0e0e0f;border-left-color:#0e0e0f;"></div>
<span style="left:711px;top:116.22px;font-size:13.5px;line-height:17px;color:#f2f2f2;white-space:pre;letter-spacing:-0.219px;">ByLayer</span>
<svg width="10" height="6" style="left:781px;top:122px"><path d="M0 0h10l-5 5.5z" fill="#f4f4f4"/></svg>
<div style="left:641px;top:125px;width:60px;height:1px;background:#f0f0f0;"></div>
<div style="left:799px;top:116px;width:1px;height:17px;background:#c8cacd;"></div>
<div style="left:800px;top:116px;width:1px;height:17px;background:#2e3033;opacity:.6;"></div>
<svg width="19.80" height="17.60" viewBox="0 0 18 16" style="left:806.10px;top:116.70px"><path d="M4.25 9.95h13l-4.5 5.5h-13z" fill="url(#gW)" stroke="#505357" stroke-width="0.6"/><path d="M4.25 5.45h13l-4.5 5.5h-13z" fill="url(#gW)" stroke="#505357" stroke-width="0.6"/><path d="M4.25 0.95h13l-4.5 5.5h-13z" fill="#fad68a" stroke="#a87a20" stroke-width="0.6"/></svg>
<svg width="19.80" height="17.60" viewBox="0 0 18 16" style="left:830.10px;top:116.70px"><path d="M4.25 9.95h13l-4.5 5.5h-13z" fill="url(#gW)" stroke="#505357" stroke-width="0.6"/><path d="M4.25 5.45h13l-4.5 5.5h-13z" fill="url(#gW)" stroke="#505357" stroke-width="0.6"/><path d="M4.25 0.95h13l-4.5 5.5h-13z" fill="url(#gW)" stroke="#505357" stroke-width="0.6"/><g transform="translate(5.5 2.5) scale(1.25)"><g transform="translate(0 0)"><path d="M0 9.500c2 .5 4 .2 5.500-1l-2-2.200c-1.500.6-1.800 2.200-3.500 3.200z" fill="#f0901a" stroke="#8a4a00" stroke-width="0.4"/><path d="M4.6 7.2L6.4 5.4" stroke="#f4f4f4" stroke-width="1.8" fill="none" /><path d="M6.4 5.4L9.3 2.2" stroke="#2f8ff0" stroke-width="1.9" fill="none" stroke-linecap="round"/></g></g></svg>
<svg width="19.80" height="17.60" viewBox="0 0 18 16" style="left:854.10px;top:116.70px"><path d="M4.25 2h13l-4.5 6h-13z" fill="#fad68a" stroke="#a87a20" stroke-width="0.6"/><circle cx="11" cy="10.5" r="4.8" fill="url(#gBadge)" stroke="#0b3f9a" stroke-width="0.5"/><path d="M7.7 9.1h5.6m-1.500 -1.600l1.800 1.600l-1.800 1.600M14.3 12.1h-5.6m1.500 -1.600l-1.800 1.600l1.800 1.600" fill="none" stroke="#ffffff" stroke-width="1.1"/></svg>
<svg width="19.80" height="17.60" viewBox="0 0 18 16" style="left:878.10px;top:116.70px"><path d="M4.75 7.5h13l-4.5 6h-13z" fill="url(#gW)" stroke="#505357" stroke-width="0.6"/><path d="M4.25 2h9l-3.5 4h-9z" fill="url(#gB)" stroke="#16335e" stroke-width="0.6"/></svg>
<svg width="19.80" height="17.60" viewBox="0 0 18 16" style="left:902.10px;top:116.70px"><path d="M4.25 9.95h13l-4.5 5.5h-13z" fill="url(#gW)" stroke="#505357" stroke-width="0.6"/><path d="M10.7 9.95h6.5l-4.500 5.500h-6.500z" fill="#5b9be4"/><path d="M4.25 5.45h13l-4.5 5.5h-13z" fill="url(#gW)" stroke="#505357" stroke-width="0.6"/><path d="M10.7 5.45h6.5l-4.500 5.500h-6.500z" fill="#5b9be4"/><path d="M4.25 0.95h13l-4.5 5.5h-13z" fill="url(#gW)" stroke="#505357" stroke-width="0.6"/><path d="M10.7 0.95h6.5l-4.500 5.500h-6.500z" fill="#5b9be4"/></svg>
<svg width="19.80" height="17.60" viewBox="0 0 18 16" style="left:926.10px;top:116.70px"><path d="M4.25 9.95h13l-4.5 5.5h-13z" fill="url(#gW)" stroke="#505357" stroke-width="0.6"/><path d="M4.25 5.45h13l-4.5 5.5h-13z" fill="url(#gW)" stroke="#505357" stroke-width="0.6"/><path d="M4.25 0.95h13l-4.5 5.5h-13z" fill="url(#gW)" stroke="#505357" stroke-width="0.6"/><g transform="translate(9 5.5) scale(1)"><rect x="0.5" y="2.5" width="7" height="7" fill="url(#gG)" stroke="#1e1f21" stroke-width="0.8" rx="0.6"/><rect x="0" y="1" width="8" height="1.6" fill="#d0d2d6" stroke="#1e1f21" stroke-width="0.6" rx="0.5"/><rect x="2.8" y="0" width="2.4" height="1.2" fill="#d0d2d6" stroke="#1e1f21" stroke-width="0.5"/><path d="M2.7 4L2.7 8.5" stroke="#2a2c2f" stroke-width="1" fill="none" /><path d="M5.3 4L5.3 8.5" stroke="#2a2c2f" stroke-width="1" fill="none" /></g></svg>
<div style="left:951px;top:111px;width:429px;height:27px;background:linear-gradient(#5b5f64,#4a4d52 45%,#3b3e42);"></div>
<div style="left:951px;top:111px;width:429px;height:1px;background:#6f7378;"></div>
<div style="left:951px;top:111px;width:1px;height:27px;background:#7a7e83;"></div>
<div style="left:1380px;top:111px;width:1px;height:28px;background:#1c1d1f;"></div>
<div style="left:950px;top:138px;width:431px;height:1px;background:#1c1d1f;"></div>
<svg width="4" height="20" style="left:954px;top:115px"><rect width="4" height="20" fill="url(#grip)"/></svg>
<svg width="18.00" height="18.00" viewBox="0 0 18 18" style="left:962.00px;top:116.00px"><text x="0.5" y="14.5" font-family="Liberation Serif,sans-serif" font-size="19" font-weight="bold" fill="#fff" >T</text><g transform="translate(6 4.5) scale(1.3)"><g transform="translate(0 0)"><path d="M0 9.500c2 .5 4 .2 5.500-1l-2-2.200c-1.500.6-1.800 2.200-3.500 3.200z" fill="#f0901a" stroke="#8a4a00" stroke-width="0.4"/><path d="M4.6 7.2L6.4 5.4" stroke="#f4f4f4" stroke-width="1.8" fill="none" /><path d="M6.4 5.4L9.3 2.2" stroke="#2f8ff0" stroke-width="1.9" fill="none" stroke-linecap="round"/></g></g></svg>
<div style="left:984px;top:114px;width:100px;height:22px;background:#3e4144;border:1px solid #6c7075;border-top-color:#0e0e0f;border-left-color:#0e0e0f;"></div>
<span style="left:989.5px;top:116.22px;font-size:13.5px;line-height:17px;color:#f2f2f2;white-space:pre;transform-origin:0 0;transform:scaleX(0.8872);">STANDARD</span>
<svg width="10" height="6" style="left:1069px;top:122px"><path d="M0 0h10l-5 5.5z" fill="#f4f4f4"/></svg>
<div style="left:1087px;top:116px;width:1px;height:17px;background:#c8cacd;"></div>
<div style="left:1088px;top:116px;width:1px;height:17px;background:#2e3033;opacity:.6;"></div>
<svg width="18.00" height="18.00" viewBox="0 0 18 18" style="left:1094.00px;top:116.00px"><path d="M2 10v6M16 10v6" fill="none" stroke="#f2f2f2" stroke-width="1.1"/><path d="M2 13L16 13" stroke="#f2f2f2" stroke-width="1.1" fill="none" /><path d="M2 13l2.500-1.500v3zM16 13l-2.500-1.500v3z" fill="#f2f2f2"/><g transform="translate(3.5 -1.5) scale(1.3)"><g transform="translate(0 0)"><path d="M0 9.500c2 .5 4 .2 5.500-1l-2-2.200c-1.500.6-1.800 2.200-3.500 3.200z" fill="#f0901a" stroke="#8a4a00" stroke-width="0.4"/><path d="M4.6 7.2L6.4 5.4" stroke="#f4f4f4" stroke-width="1.8" fill="none" /><path d="M6.4 5.4L9.3 2.2" stroke="#2f8ff0" stroke-width="1.9" fill="none" stroke-linecap="round"/></g></g></svg>
<div style="left:1116px;top:114px;width:130px;height:22px;background:#3e4144;border:1px solid #6c7075;border-top-color:#0e0e0f;border-left-color:#0e0e0f;"></div>
<span style="left:1121.5px;top:116.22px;font-size:13.5px;line-height:17px;color:#f2f2f2;white-space:pre;letter-spacing:-0.797px;">ISO-25</span>
<svg width="10" height="6" style="left:1231px;top:122px"><path d="M0 0h10l-5 5.5z" fill="#f4f4f4"/></svg>
<div style="left:1249px;top:116px;width:1px;height:17px;background:#c8cacd;"></div>
<div style="left:1250px;top:116px;width:1px;height:17px;background:#2e3033;opacity:.6;"></div>
<svg width="18.00" height="18.00" viewBox="0 0 18 18" style="left:1256.00px;top:116.00px"><circle cx="12" cy="3.5" r="3" fill="none" stroke="#5cb85c" stroke-width="1.4"/><path d="M9.500 5h-3.500l-3 6" fill="none" stroke="#5cb85c" stroke-width="1.4"/><path d="M1.500 7.500l1 5l4.300-2.500z" fill="#5cb85c"/><g transform="translate(5.5 4.5) scale(1.25)"><g transform="translate(0 0)"><path d="M0 9.500c2 .5 4 .2 5.500-1l-2-2.200c-1.500.6-1.800 2.200-3.500 3.200z" fill="#f0901a" stroke="#8a4a00" stroke-width="0.4"/><path d="M4.6 7.2L6.4 5.4" stroke="#f4f4f4" stroke-width="1.8" fill="none" /><path d="M6.4 5.4L9.3 2.2" stroke="#2f8ff0" stroke-width="1.9" fill="none" stroke-linecap="round"/></g></g></svg>
<div style="left:1278px;top:114px;width:100px;height:22px;background:#3e4144;border:1px solid #6c7075;border-top-color:#0e0e0f;border-left-color:#0e0e0f;"></div>
<span style="left:1283.5px;top:116.22px;font-size:13.5px;line-height:17px;color:#f2f2f2;white-space:pre;letter-spacing:-0.725px;">Standard</span>
<svg width="10" height="6" style="left:1363px;top:122px"><path d="M0 0h10l-5 5.5z" fill="#f4f4f4"/></svg>
<div style="left:2px;top:3px;width:146px;height:44px;background:#1b1c1e;"></div>
<svg width="146" height="44" style="left:2px;top:3px"><path d="M1.5 1.5h143v29l-12 12h-131z" fill="#4b4e52" stroke="#131415"/><path d="M143 35v7.500h-7.500z" fill="#2f9be8"/><path d="M2.5 2.5h141" stroke="#5e6166"/></svg>
<div style="left:148px;top:3px;width:170px;height:25px;background:linear-gradient(#4d5055,#3b3e43);border:1px solid #101011;border-left:none;"></div>
<div style="left:307px;top:4px;width:10px;height:23px;background:linear-gradient(#484b4f,#35383b);"></div>
<svg width="10" height="8" style="left:307px;top:17px"><rect x="2.5" y="0.5" width="6" height="1" fill="#8e9399"/><path d="M2.5 2.5h6l-3 4z" fill="#8e9399"/></svg>
<svg width="18.00" height="16.00" viewBox="0 0 18 16" style="left:152.00px;top:8.00px"><path d="M1.5 1.5h11l5 5v9h-16z" fill="url(#gW)" stroke="#2a2c2f" stroke-width="1"/><path d="M12.5 1.5v5h5" fill="#c8cad0" stroke="#2a2c2f" stroke-width="0.8"/></svg>
<svg width="18.00" height="16.00" viewBox="0 0 18 16" style="left:174.00px;top:8.00px"><path d="M1.5 3.5h5l1.500 2h6.500v8.500h-13z" fill="url(#gW)" stroke="#2a2c2f" stroke-width="1"/><path d="M4.500 7.500h12.500l-3.500 7h-12.500z" fill="url(#gB)" stroke="#1f4f90" stroke-width="1"/></svg>
<svg width="18.00" height="16.00" viewBox="0 0 18 16" style="left:196.00px;top:8.00px"><path d="M1.5 1.500h13l2 2v11h-15z" fill="url(#gB)" stroke="#1f4f90" stroke-width="1"/><rect x="4" y="1.5" width="9" height="5" fill="#f0f0f2" stroke="#50607a" stroke-width="0.6"/><rect x="5" y="3" width="3" height="2" fill="#1c1c1c"/><rect x="4" y="9.5" width="10" height="5" fill="#e6e6ea" stroke="#50607a" stroke-width="0.6"/></svg>
<svg width="18.00" height="16.00" viewBox="0 0 18 16" style="left:218.00px;top:8.00px"><path d="M1.5 1.500h13l2 2v11h-15z" fill="url(#gB)" stroke="#1f4f90" stroke-width="1"/><rect x="4" y="1.5" width="9" height="5" fill="#f0f0f2" stroke="#50607a" stroke-width="0.6"/><rect x="5" y="3" width="3" height="2" fill="#1c1c1c"/><rect x="4" y="9.5" width="10" height="5" fill="#e6e6ea" stroke="#50607a" stroke-width="0.6"/><path d="M8.78 13.92L15.41 6.62L12.9 4.34L6.26 11.64z" fill="#f2b01e" stroke="#7a5200" stroke-width="0.5"/><path d="M5.5 15L8.78 13.92L6.26 11.64z" fill="#f6e2b8" stroke="#7a5200" stroke-width="0.5"/><path d="M15.41 6.62L16.76 5.14L14.24 2.86L12.9 4.34z" fill="#f06a18" stroke="#7a3000" stroke-width="0.5"/><path d="M7.52 12.78L14.15 5.48" stroke="#ffe27a" stroke-width="0.8" fill="none" /></svg>
<svg width="18.00" height="16.00" viewBox="0 0 18 16" style="left:240.00px;top:8.00px"><path d="M1.5 1.5h9l4 4v9h-13z" fill="url(#gW)" stroke="#2a2c2f" stroke-width="1"/><path d="M10.5 1.5v4h4" fill="#c8cad0" stroke="#2a2c2f" stroke-width="0.8"/><path d="M3 5L8 5" stroke="#b0b0b4" stroke-width="1" fill="none" /><path d="M3 8L10 8" stroke="#b0b0b4" stroke-width="1" fill="none" /><path d="M3 11L8 11" stroke="#b0b0b4" stroke-width="1" fill="none" /><rect x="9.5" y="8.5" width="7" height="7" fill="#e01818" stroke="#7a0000" stroke-width="0.4"/><path d="M10.8 9.8l4.4 4.4M15.2 9.8l-4.4 4.4" fill="none" stroke="#fff" stroke-width="1.1"/></svg>
<svg width="18.00" height="16.00" viewBox="0 0 18 16" style="left:262.00px;top:8.00px"><path d="M1 6l6-4.500v3c5 0 8 2.500 8.500 8c-2-3-4.500-4-8.500-4v3z" fill="url(#gB)" stroke="#1f4f90" stroke-width="0.6"/></svg>
<svg width="18.00" height="16.00" viewBox="0 0 18 16" style="left:284.00px;top:8.00px"><path d="M17 6l-6-4.500v3c-5 0-8 2.500-8.500 8c2-3 4.500-4 8.500-4v3z" fill="url(#gB)" stroke="#1f4f90" stroke-width="0.6"/></svg>
<svg width="36" height="32" style="left:13px;top:8px" viewBox="0 0 36 32">
<rect x="5.500" y="5" width="25.500" height="25" rx="1.500" fill="#1f56b8"/>
<rect x="8.500" y="7" width="21" height="21" fill="#2c66cc" stroke="#dfe8fa" stroke-width="0.800"/>
<path d="M11 7v21M14 7v21M17 7v21M20 7v21M23 7v21M26 7v21M8.500 10h21M8.500 13h21M8.500 16h21M8.500 19h21M8.500 22h21M8.500 25h21" stroke="#5d8fe6" stroke-width="0.500"/>
<path d="M1 1h10c7 0 10.500 6 10.500 13.500c0 7-3.500 12-9 13l-8 2.500c-2 0-3.500-1-3.500-3z" fill="#f2f2f4"/>
<path d="M1 27c.5 1.500 2 2.500 3.500 2.500l6.500-2h-5z" fill="#1f56b8"/>
<path d="M8 7.500h3c3 0 4.500 3 4.500 6.500s-1.500 7-4.500 7h-3z" fill="#183f98"/>
<path d="M8 10.500h6.500M8 13.500h7.500M8 16.500h7M8 19.500h5.500M11 7.500v13.500M14 9v10.500" stroke="#2c55b0" stroke-width="0.500"/>
</svg>
<span style="left:49px;top:7.46px;font-size:16px;line-height:20px;color:#f0f0f0;white-space:pre;transform-origin:0 0;transform:scaleX(0.7731);">midas</span>
<span style="left:49px;top:20.94px;font-size:17.5px;line-height:22px;color:#e4e4e6;white-space:pre;font-weight:bold;transform-origin:0 0;transform:scaleX(0.8451);text-shadow:0 1px 1px #222;">Drawing DS</span>
<span style="left:169px;top:33.67px;font-size:12.5px;line-height:16px;color:#fbfbfb;white-space:pre;letter-spacing:-0.118px;">File ( F)</span>
<span style="left:230px;top:33.67px;font-size:12.5px;line-height:16px;color:#fbfbfb;white-space:pre;letter-spacing:0.094px;">Edit ( E)</span>
<span style="left:295px;top:33.67px;font-size:12.5px;line-height:16px;color:#fbfbfb;white-space:pre;letter-spacing:0.280px;">View ( V)</span>
<span style="left:365px;top:33.67px;font-size:12.5px;line-height:16px;color:#fbfbfb;white-space:pre;letter-spacing:0.453px;">Insert ( I)</span>
<span style="left:437px;top:33.67px;font-size:12.5px;line-height:16px;color:#fbfbfb;white-space:pre;letter-spacing:0.128px;">Format ( O)</span>
<span style="left:521px;top:33.67px;font-size:12.5px;line-height:16px;color:#fbfbfb;white-space:pre;letter-spacing:0.212px;">Tools ( T)</span>
<span style="left:593px;top:33.67px;font-size:12.5px;line-height:16px;color:#fbfbfb;white-space:pre;letter-spacing:-0.013px;">Drawing ( D)</span>
<span style="left:684px;top:33.67px;font-size:12.5px;line-height:16px;color:#fbfbfb;white-space:pre;letter-spacing:-0.241px;">Dimensions ( N)</span>
<span style="left:793px;top:33.67px;font-size:12.5px;line-height:16px;color:#fbfbfb;white-space:pre;letter-spacing:-0.072px;">Modified ( M)</span>
<span style="left:886px;top:33.67px;font-size:12.5px;line-height:16px;color:#fbfbfb;white-space:pre;letter-spacing:0.315px;">Window ( W)</span>
<span style="left:980px;top:33.67px;font-size:12.5px;line-height:16px;color:#fbfbfb;white-space:pre;letter-spacing:0.222px;">Information ( A)</span>
<span style="left:1089px;top:33.67px;font-size:12.5px;line-height:16px;color:#fbfbfb;white-space:pre;letter-spacing:0.008px;">Utility(U)</span>
<span style="left:1158px;top:33.67px;font-size:12.5px;line-height:16px;color:#fbfbfb;white-space:pre;letter-spacing:-0.066px;">Drawing creation (G)</span>
<span style="left:1292px;top:33.67px;font-size:12.5px;line-height:16px;color:#fbfbfb;white-space:pre;letter-spacing:-0.002px;">Help ( H)</span>
<div style="left:1766px;top:14px;width:10px;height:3px;background:#1a1a1a;"></div>
<div style="left:1766px;top:17px;width:10px;height:1px;background:#8f939b;"></div>
<svg width="13" height="13" style="left:1799px;top:7px"><rect x="5" y="1.500" width="7" height="6.500" fill="#6e727a" stroke="#1a1a1a" stroke-width="1.400"/><rect x="4.300" y="0.800" width="8.400" height="2.200" fill="#1a1a1a"/><rect x="1" y="5" width="7" height="6.500" fill="#8a8e96" stroke="#1a1a1a" stroke-width="1.400"/><rect x="0.300" y="4.300" width="8.400" height="2.200" fill="#1a1a1a"/><rect x="0.300" y="12.200" width="8.400" height="0.800" fill="#8f939b"/></svg>
<svg width="13" height="11" style="left:1834px;top:8px"><path d="M1 10.500h3M9 10.500h3" stroke="#8f939b" stroke-width="1"/><path d="M1.500 1l10 9M11.500 1l-10 9" stroke="#1a1a1a" stroke-width="2.600"/></svg>
<div style="left:1857px;top:0px;width:2px;height:28px;background:#8b8f97;"></div>
<div style="left:1736px;top:30px;width:123px;height:24px;background:linear-gradient(#5b5f65,#54575c);"></div>
<svg width="123" height="24" style="left:1736px;top:30px;overflow:hidden"><rect x="1" y="1" width="4" height="4" fill="#494c51"/><rect x="9" y="1" width="4" height="4" fill="#494c51"/><rect x="13" y="1" width="4" height="4" fill="#494c51"/><rect x="17" y="1" width="4" height="4" fill="#494c51"/><rect x="25" y="1" width="4" height="4" fill="#494c51"/><rect x="33" y="1" width="4" height="4" fill="#494c51"/><rect x="41" y="1" width="4" height="4" fill="#494c51"/><rect x="49" y="1" width="4" height="4" fill="#494c51"/><rect x="57" y="1" width="4" height="4" fill="#494c51"/><rect x="61" y="1" width="4" height="4" fill="#494c51"/><rect x="69" y="1" width="4" height="4" fill="#494c51"/><rect x="0" y="0" width="4" height="4" fill="#6c7078"/><rect x="8" y="0" width="4" height="4" fill="#6c7078"/><rect x="12" y="0" width="4" height="4" fill="#6c7078"/><rect x="16" y="0" width="4" height="4" fill="#6c7078"/><rect x="24" y="0" width="4" height="4" fill="#6c7078"/><rect x="32" y="0" width="4" height="4" fill="#6c7078"/><rect x="40" y="0" width="4" height="4" fill="#6c7078"/><rect x="48" y="0" width="4" height="4" fill="#6c7078"/><rect x="56" y="0" width="4" height="4" fill="#6c7078"/><rect x="60" y="0" width="4" height="4" fill="#6c7078"/><rect x="68" y="0" width="4" height="4" fill="#6c7078"/><rect x="5" y="5" width="4" height="4" fill="#494c51"/><rect x="13" y="5" width="4" height="4" fill="#494c51"/><rect x="21" y="5" width="4" height="4" fill="#494c51"/><rect x="25" y="5" width="4" height="4" fill="#494c51"/><rect x="29" y="5" width="4" height="4" fill="#494c51"/><rect x="41" y="5" width="4" height="4" fill="#494c51"/><rect x="45" y="5" width="4" height="4" fill="#494c51"/><rect x="53" y="5" width="4" height="4" fill="#494c51"/><rect x="61" y="5" width="4" height="4" fill="#494c51"/><rect x="73" y="5" width="4" height="4" fill="#494c51"/><rect x="4" y="4" width="4" height="4" fill="#6b6e76"/><rect x="12" y="4" width="4" height="4" fill="#6b6e76"/><rect x="20" y="4" width="4" height="4" fill="#6b6e76"/><rect x="24" y="4" width="4" height="4" fill="#6b6e76"/><rect x="28" y="4" width="4" height="4" fill="#6b6e76"/><rect x="40" y="4" width="4" height="4" fill="#6b6e76"/><rect x="44" y="4" width="4" height="4" fill="#6b6e76"/><rect x="52" y="4" width="4" height="4" fill="#6b6e76"/><rect x="60" y="4" width="4" height="4" fill="#6b6e76"/><rect x="72" y="4" width="4" height="4" fill="#6b6e76"/><rect x="1" y="9" width="4" height="4" fill="#494c51"/><rect x="5" y="9" width="4" height="4" fill="#494c51"/><rect x="9" y="9" width="4" height="4" fill="#494c51"/><rect x="13" y="9" width="4" height="4" fill="#494c51"/><rect x="17" y="9" width="4" height="4" fill="#494c51"/><rect x="25" y="9" width="4" height="4" fill="#494c51"/><rect x="37" y="9" width="4" height="4" fill="#494c51"/><rect x="69" y="9" width="4" height="4" fill="#494c51"/><rect x="81" y="9" width="4" height="4" fill="#494c51"/><rect x="97" y="9" width="4" height="4" fill="#494c51"/><rect x="0" y="8" width="4" height="4" fill="#696d74"/><rect x="4" y="8" width="4" height="4" fill="#696d74"/><rect x="8" y="8" width="4" height="4" fill="#696d74"/><rect x="12" y="8" width="4" height="4" fill="#696d74"/><rect x="16" y="8" width="4" height="4" fill="#696d74"/><rect x="24" y="8" width="4" height="4" fill="#696d74"/><rect x="36" y="8" width="4" height="4" fill="#696d74"/><rect x="68" y="8" width="4" height="4" fill="#696d74"/><rect x="80" y="8" width="4" height="4" fill="#696d74"/><rect x="96" y="8" width="4" height="4" fill="#696d74"/><rect x="1" y="13" width="4" height="4" fill="#494c51"/><rect x="5" y="13" width="4" height="4" fill="#494c51"/><rect x="13" y="13" width="4" height="4" fill="#494c51"/><rect x="21" y="13" width="4" height="4" fill="#494c51"/><rect x="29" y="13" width="4" height="4" fill="#494c51"/><rect x="49" y="13" width="4" height="4" fill="#494c51"/><rect x="57" y="13" width="4" height="4" fill="#494c51"/><rect x="65" y="13" width="4" height="4" fill="#494c51"/><rect x="89" y="13" width="4" height="4" fill="#494c51"/><rect x="0" y="12" width="4" height="4" fill="#686b71"/><rect x="4" y="12" width="4" height="4" fill="#686b71"/><rect x="12" y="12" width="4" height="4" fill="#686b71"/><rect x="20" y="12" width="4" height="4" fill="#686b71"/><rect x="28" y="12" width="4" height="4" fill="#686b71"/><rect x="48" y="12" width="4" height="4" fill="#686b71"/><rect x="56" y="12" width="4" height="4" fill="#686b71"/><rect x="64" y="12" width="4" height="4" fill="#686b71"/><rect x="88" y="12" width="4" height="4" fill="#686b71"/><rect x="1" y="17" width="4" height="4" fill="#494c51"/><rect x="5" y="17" width="4" height="4" fill="#494c51"/><rect x="9" y="17" width="4" height="4" fill="#494c51"/><rect x="17" y="17" width="4" height="4" fill="#494c51"/><rect x="33" y="17" width="4" height="4" fill="#494c51"/><rect x="41" y="17" width="4" height="4" fill="#494c51"/><rect x="73" y="17" width="4" height="4" fill="#494c51"/><rect x="0" y="16" width="4" height="4" fill="#666a6f"/><rect x="4" y="16" width="4" height="4" fill="#666a6f"/><rect x="8" y="16" width="4" height="4" fill="#666a6f"/><rect x="16" y="16" width="4" height="4" fill="#666a6f"/><rect x="32" y="16" width="4" height="4" fill="#666a6f"/><rect x="40" y="16" width="4" height="4" fill="#666a6f"/><rect x="72" y="16" width="4" height="4" fill="#666a6f"/><rect x="1" y="21" width="4" height="4" fill="#494c51"/><rect x="9" y="21" width="4" height="4" fill="#494c51"/><rect x="53" y="21" width="4" height="4" fill="#494c51"/><rect x="0" y="20" width="4" height="4" fill="#65686d"/><rect x="8" y="20" width="4" height="4" fill="#65686d"/><rect x="52" y="20" width="4" height="4" fill="#65686d"/></svg>
<div style="left:0px;top:139px;width:304px;height:917px;background:#7d8187;"></div>
<div style="left:2px;top:139px;width:297px;height:22px;background:#6e727a;"></div>
<div style="left:0px;top:139px;width:304px;height:1px;background:#858990;"></div>
<span style="left:5px;top:143.67px;font-size:12.5px;line-height:16px;color:#bcc0c8;white-space:pre;letter-spacing:-0.258px;">특성</span>
<svg width="12" height="12" style="left:264px;top:145px"><path d="M3.5 1h5v5h1.500v1.500h-8v-1.500h1.500z" fill="#1c1c1e"/><rect x="5.500" y="7" width="1" height="4" fill="#1c1c1e"/></svg>
<svg width="12" height="12" style="left:283px;top:145px"><path d="M1.5 1.500l8 8M9.500 1.500l-8 8" stroke="#1c1c1e" stroke-width="1.800"/></svg>
<div style="left:2px;top:161px;width:297px;height:892px;background:#414548;"></div>
<div style="left:2px;top:161px;width:196px;height:26px;background:#484848;border:1px solid #2b2c2e;"></div>
<span style="left:7px;top:165.67px;font-size:12.5px;line-height:16px;color:#c2c2c2;white-space:pre;letter-spacing:-0.060px;">No optional.</span>
<svg width="10" height="6" style="left:181px;top:172px"><path d="M0 0h9l-4.500 4.500z" fill="#1b1b1c"/></svg>
<div style="left:198px;top:161px;width:25px;height:26px;background:#45494d;border:1px solid #2f3134;"></div>
<svg width="18.00" height="16.00" viewBox="0 0 18 16" style="left:201.00px;top:165.00px"><rect x="1" y="1" width="15" height="14" fill="none" stroke="#18a8f8" stroke-width="1.2" stroke-dasharray="1.6 1.2"/><rect x="3" y="3" width="4.5" height="4.5" fill="#3f9bf0" stroke="#6fc0ff" stroke-width="0.6"/><rect x="10" y="3.5" width="3.6" height="3.6" fill="#ffffff" stroke="#1a1a1a" stroke-width="0.7"/><rect x="3.5" y="10" width="3.6" height="3.6" fill="#ffffff" stroke="#1a1a1a" stroke-width="0.7"/><g transform="translate(8 5.5) scale(0.9)"><path d="M0 0v9l2.200-2l1.600 3.500l1.600-.8l-1.600-3.300h3z" fill="#f4f4f4" stroke="#222" stroke-width="0.6"/></g></svg>
<div style="left:223px;top:161px;width:25px;height:26px;background:#45494d;border:1px solid #2f3134;"></div>
<svg width="18.00" height="16.00" viewBox="0 0 18 16" style="left:226.00px;top:165.00px"><rect x="1.5" y="1.5" width="14" height="13" fill="none" stroke="#3b9bf0" stroke-width="1.4" rx="2" stroke-dasharray="1.4 1.2"/><rect x="4" y="4" width="9" height="8" fill="none" stroke="#6ab4f4" stroke-width="1" rx="1.5" stroke-dasharray="1.2 1"/><path d="M8.500 5.500v5.500M5.800 8.200h5.400" fill="none" stroke="#fff" stroke-width="1.6"/></svg>
<div style="left:248px;top:161px;width:25px;height:26px;background:#45494d;border:1px solid #2f3134;"></div>
<svg width="18.00" height="16.00" viewBox="0 0 18 16" style="left:251.00px;top:165.00px"><rect x="1" y="1.5" width="14" height="9.5" fill="#f4f4f4" stroke="#1f7be8" stroke-width="1" stroke-dasharray="1.2 1"/><text x="2.6" y="8.8" font-family="Liberation Mono,sans-serif" font-size="7.5" font-weight="bold" fill="#111" >AL</text><g transform="translate(10 5) scale(0.95)"><path d="M0 0v9l2.200-2l1.600 3.500l1.600-.8l-1.600-3.300h3z" fill="#f4f4f4" stroke="#222" stroke-width="0.6"/></g></svg>
<div style="left:273px;top:161px;width:25px;height:26px;background:#45494d;border:1px solid #2f3134;"></div>
<svg width="18.00" height="16.00" viewBox="0 0 18 16" style="left:276.00px;top:165.00px"><rect x="1.5" y="2" width="8" height="8" fill="#4da0f0" stroke="#12335e" stroke-width="1"/><g transform="translate(8 1) scale(1)"><path d="M4 0h4.500l-2.500 4h3l-6.500 7l2-5h-2.500z" fill="#ffd45a" stroke="#a07810" stroke-width="0.4"/></g><g transform="translate(5.5 5.5) scale(0.95)"><path d="M0 0v9l2.200-2l1.600 3.500l1.600-.8l-1.600-3.300h3z" fill="#f4f4f4" stroke="#222" stroke-width="0.6"/></g></svg>
<div style="left:298px;top:161px;width:1px;height:26px;background:#35383b;"></div>
<div style="left:2px;top:187px;width:19px;height:399px;background:#35383b;"></div>
<div style="left:2px;top:187px;width:297px;height:19px;background:#35383b;"></div>
<svg width="10" height="10" style="left:7px;top:191px"><rect x="0.500" y="0.500" width="9" height="9" fill="#2c2e31" stroke="#f4f4f4"/><rect x="2.500" y="4.500" width="5" height="1" fill="#f4f4f4"/></svg>
<span style="left:25px;top:187.67px;font-size:12.5px;line-height:16px;color:#a9c9f2;white-space:pre;font-weight:bold;letter-spacing:0.404px;">Normal</span>
<div style="left:21px;top:224px;width:278px;height:1px;background:#34373a;"></div>
<span style="left:25px;top:206.67px;font-size:12.5px;line-height:16px;color:#f1f1f1;white-space:pre;letter-spacing:-0.119px;">color</span>
<div style="left:154px;top:209px;width:10px;height:10px;background:#fff;border:1px solid #2a2a2a;"></div>
<span style="left:171px;top:206.67px;font-size:12.5px;line-height:16px;color:#f1f1f1;white-space:pre;letter-spacing:-0.694px;">ByLayer</span>
<div style="left:21px;top:243px;width:278px;height:1px;background:#34373a;"></div>
<span style="left:25px;top:225.67px;font-size:12.5px;line-height:16px;color:#f1f1f1;white-space:pre;letter-spacing:-0.839px;">Layers</span>
<span style="left:155px;top:225.67px;font-size:12.5px;line-height:16px;color:#f1f1f1;white-space:pre;transform-origin:0 0;transform:scaleX(0.8629);">0</span>
<div style="left:21px;top:262px;width:278px;height:1px;background:#34373a;"></div>
<span style="left:25px;top:244.67px;font-size:12.5px;line-height:16px;color:#f1f1f1;white-space:pre;letter-spacing:-0.415px;">Line type</span>
<div style="left:154px;top:253px;width:60px;height:1px;background:#f1f1f1;"></div>
<span style="left:221px;top:244.67px;font-size:12.5px;line-height:16px;color:#f1f1f1;white-space:pre;letter-spacing:-0.694px;">ByLayer</span>
<div style="left:21px;top:281px;width:278px;height:1px;background:#34373a;"></div>
<span style="left:25px;top:263.67px;font-size:12.5px;line-height:16px;color:#f1f1f1;white-space:pre;letter-spacing:-0.494px;">Linetype scale</span>
<span style="left:155px;top:263.67px;font-size:12.5px;line-height:16px;color:#f1f1f1;white-space:pre;transform-origin:0 0;transform:scaleX(0.8535);">1.000000</span>
<div style="left:21px;top:300px;width:278px;height:1px;background:#34373a;"></div>
<span style="left:25px;top:282.67px;font-size:12.5px;line-height:16px;color:#f1f1f1;white-space:pre;letter-spacing:-0.295px;">Line weight</span>
<div style="left:154px;top:291px;width:60px;height:1px;background:#f1f1f1;"></div>
<span style="left:221px;top:282.67px;font-size:12.5px;line-height:16px;color:#f1f1f1;white-space:pre;letter-spacing:-0.694px;">ByLayer</span>
<div style="left:21px;top:319px;width:278px;height:1px;background:#34373a;"></div>
<span style="left:25px;top:301.67px;font-size:12.5px;line-height:16px;color:#f1f1f1;white-space:pre;letter-spacing:-0.439px;">transparency</span>
<span style="left:155px;top:301.67px;font-size:12.5px;line-height:16px;color:#f1f1f1;white-space:pre;letter-spacing:-0.694px;">ByLayer</span>
<div style="left:21px;top:338px;width:278px;height:1px;background:#34373a;"></div>
<span style="left:25px;top:320.67px;font-size:12.5px;line-height:16px;color:#f1f1f1;white-space:pre;letter-spacing:-0.457px;">thickness</span>
<span style="left:155px;top:320.67px;font-size:12.5px;line-height:16px;color:#f1f1f1;white-space:pre;transform-origin:0 0;transform:scaleX(0.8629);">0</span>
<div style="left:2px;top:339px;width:297px;height:19px;background:#35383b;"></div>
<svg width="10" height="10" style="left:7px;top:343px"><rect x="0.500" y="0.500" width="9" height="9" fill="#2c2e31" stroke="#f4f4f4"/><rect x="2.500" y="4.500" width="5" height="1" fill="#f4f4f4"/></svg>
<span style="left:25px;top:339.67px;font-size:12.5px;line-height:16px;color:#a9c9f2;white-space:pre;font-weight:bold;letter-spacing:0.434px;">View</span>
<div style="left:21px;top:376px;width:278px;height:1px;background:#34373a;"></div>
<span style="left:25px;top:358.67px;font-size:12.5px;line-height:16px;color:#8b8e91;white-space:pre;letter-spacing:-0.570px;">X center</span>
<span style="left:155px;top:358.67px;font-size:12.5px;line-height:16px;color:#8b8e91;white-space:pre;transform-origin:0 0;transform:scaleX(0.8535);">344.1869</span>
<div style="left:21px;top:395px;width:278px;height:1px;background:#34373a;"></div>
<span style="left:25px;top:377.67px;font-size:12.5px;line-height:16px;color:#8b8e91;white-space:pre;letter-spacing:-0.541px;">Y center</span>
<span style="left:155px;top:377.67px;font-size:12.5px;line-height:16px;color:#8b8e91;white-space:pre;transform-origin:0 0;transform:scaleX(0.8535);">148.5000</span>
<div style="left:21px;top:414px;width:278px;height:1px;background:#34373a;"></div>
<span style="left:25px;top:396.67px;font-size:12.5px;line-height:16px;color:#8b8e91;white-space:pre;letter-spacing:-0.482px;">Z center</span>
<span style="left:155px;top:396.67px;font-size:12.5px;line-height:16px;color:#8b8e91;white-space:pre;transform-origin:0 0;transform:scaleX(0.8500);">0.0000</span>
<div style="left:21px;top:433px;width:278px;height:1px;background:#34373a;"></div>
<span style="left:25px;top:415.67px;font-size:12.5px;line-height:16px;color:#8b8e91;white-space:pre;letter-spacing:-0.107px;">Height</span>
<span style="left:155px;top:415.67px;font-size:12.5px;line-height:16px;color:#8b8e91;white-space:pre;transform-origin:0 0;transform:scaleX(0.8535);">297.0000</span>
<div style="left:21px;top:452px;width:278px;height:1px;background:#34373a;"></div>
<span style="left:25px;top:434.67px;font-size:12.5px;line-height:16px;color:#8b8e91;white-space:pre;letter-spacing:-0.037px;">width</span>
<span style="left:155px;top:434.67px;font-size:12.5px;line-height:16px;color:#8b8e91;white-space:pre;transform-origin:0 0;transform:scaleX(0.8535);">629.5243</span>
<div style="left:2px;top:453px;width:297px;height:19px;background:#35383b;"></div>
<svg width="10" height="10" style="left:7px;top:457px"><rect x="0.500" y="0.500" width="9" height="9" fill="#2c2e31" stroke="#f4f4f4"/><rect x="2.500" y="4.500" width="5" height="1" fill="#f4f4f4"/></svg>
<span style="left:25px;top:453.67px;font-size:12.5px;line-height:16px;color:#a9c9f2;white-space:pre;font-weight:bold;letter-spacing:-0.818px;">Etc</span>
<div style="left:21px;top:490px;width:278px;height:1px;background:#34373a;"></div>
<span style="left:25px;top:472.67px;font-size:12.5px;line-height:16px;color:#f1f1f1;white-space:pre;letter-spacing:-0.397px;">Viewport scale</span>
<span style="left:155px;top:472.67px;font-size:12.5px;line-height:16px;color:#f1f1f1;white-space:pre;transform-origin:0 0;transform:scaleX(0.8050);">1:1</span>
<div style="left:21px;top:509px;width:278px;height:1px;background:#34373a;"></div>
<span style="left:25px;top:491.67px;font-size:12.5px;line-height:16px;color:#f1f1f1;white-space:pre;letter-spacing:-0.520px;">On the UCS icon</span>
<span style="left:155px;top:491.67px;font-size:12.5px;line-height:16px;color:#f1f1f1;white-space:pre;transform-origin:0 0;transform:scaleX(0.8576);">Yes</span>
<div style="left:21px;top:528px;width:278px;height:1px;background:#34373a;"></div>
<span style="left:25px;top:510.67px;font-size:12.5px;line-height:16px;color:#f1f1f1;white-space:pre;letter-spacing:-0.345px;">UCS icon at the origin</span>
<span style="left:155px;top:510.67px;font-size:12.5px;line-height:16px;color:#f1f1f1;white-space:pre;transform-origin:0 0;transform:scaleX(0.8576);">Yes</span>
<div style="left:21px;top:547px;width:278px;height:1px;background:#34373a;"></div>
<span style="left:25px;top:529.67px;font-size:12.5px;line-height:16px;color:#8b8e91;white-space:pre;letter-spacing:-0.497px;">UCS per viewport</span>
<span style="left:155px;top:529.67px;font-size:12.5px;line-height:16px;color:#8b8e91;white-space:pre;transform-origin:0 0;transform:scaleX(0.8576);">Yes</span>
<div style="left:21px;top:566px;width:278px;height:1px;background:#34373a;"></div>
<span style="left:25px;top:548.67px;font-size:12.5px;line-height:16px;color:#f1f1f1;white-space:pre;letter-spacing:-0.830px;">UCS name</span>
<div style="left:21px;top:585px;width:278px;height:1px;background:#34373a;"></div>
<span style="left:25px;top:567.67px;font-size:12.5px;line-height:16px;color:#8b8e91;white-space:pre;letter-spacing:-0.642px;">Visual Styles</span>
<span style="left:155px;top:567.67px;font-size:12.5px;line-height:16px;color:#8b8e91;white-space:pre;letter-spacing:-0.424px;">2D Wireframe</span>
<div style="left:150px;top:187px;width:1px;height:844px;background:#373a3d;"></div>
<div style="left:150px;top:187px;width:1px;height:19px;background:#35383b;"></div>
<div style="left:150px;top:339px;width:1px;height:19px;background:#35383b;"></div>
<div style="left:150px;top:453px;width:1px;height:19px;background:#35383b;"></div>
<div style="left:2px;top:1031px;width:297px;height:22px;background:#414548;"></div>
<div style="left:279px;top:1032px;width:20px;height:21px;background:#505153;"></div>
<div style="left:2px;top:1033px;width:69px;height:20px;background:linear-gradient(#5a5e63,#4e5256);border:1px solid #1f2123;"></div>
<span style="left:36.5px;top:1034.67px;font-size:12.5px;line-height:16px;color:#cfd1d4;white-space:pre;letter-spacing:0.245px;transform:translateX(-50%);">윈도우</span>
<div style="left:71px;top:1033px;width:69px;height:20px;background:linear-gradient(#5a5e63,#4e5256);border:1px solid #1f2123;"></div>
<span style="left:105.5px;top:1034.67px;font-size:12.5px;line-height:16px;color:#cfd1d4;white-space:pre;letter-spacing:0.246px;transform:translateX(-50%);">정보태그</span>
<div style="left:140px;top:1033px;width:69px;height:20px;background:linear-gradient(#5a5e63,#4e5256);border:1px solid #1f2123;"></div>
<span style="left:174.5px;top:1034.67px;font-size:12.5px;line-height:16px;color:#cfd1d4;white-space:pre;letter-spacing:0.246px;transform:translateX(-50%);">도면요소</span>
<div style="left:209px;top:1032px;width:70px;height:21px;background:linear-gradient(#757a83,#5b5f67);border:1px solid #2b2d2f;border-top-color:#7d828b;"></div>
<div style="left:209px;top:1032px;width:3px;height:21px;background:#49a2ef;"></div>
<span style="left:245.0px;top:1034.67px;font-size:12.5px;line-height:16px;color:#ffffff;white-space:pre;letter-spacing:0.242px;transform:translateX(-50%);">특성</span>
<div style="left:0px;top:1053px;width:304px;height:3px;background:#6a6d72;"></div>
<div style="left:299px;top:139px;width:5px;height:917px;background:#55585c;"></div>
<div style="left:299px;top:139px;width:1.5px;height:917px;background:#858a92;"></div>
<div style="left:303px;top:163px;width:1px;height:740px;background:#5c6068;"></div>
<div style="left:304px;top:139px;width:1524px;height:24px;background:#505050;"></div>
<div style="left:304px;top:162px;width:1524px;height:2px;background:#5a5e66;"></div>
<div style="left:304px;top:141px;width:68px;height:21px;background:linear-gradient(#5e6168,#4d5056);border:1px solid #202123;border-bottom:none;"></div>
<span style="left:311.5px;top:143.67px;font-size:12.5px;line-height:16px;color:#c6cad2;white-space:pre;letter-spacing:-0.562px;">cDrawing1</span>
<div style="left:372px;top:141px;width:151px;height:22px;background:linear-gradient(#6c7079,#555962);border-right:1px solid #202123;border-top:1px solid #858991;"></div>
<div style="left:372px;top:141px;width:3px;height:22px;background:#f5d23c;"></div>
<span style="left:379.5px;top:143.67px;font-size:12.5px;line-height:16px;color:#ffffff;white-space:pre;font-weight:bold;letter-spacing:-0.080px;">007_hotel_DR_re03</span>
<svg width="10" height="9" style="left:503px;top:148px"><path d="M1 0.500l7.500 7.500M8.500 0.500l-7.500 7.500" stroke="#d8dade" stroke-width="1.300"/></svg>
<svg width="10" height="6" style="left:1814px;top:150px"><path d="M0 0h9l-4.500 5z" fill="#f4f4f4"/></svg>
<div style="left:304px;top:164px;width:1524px;height:719px;background:#000000;"></div>
<svg width="1859" height="1080" viewBox="0 0 1859 1080" style="left:0;top:0" shape-rendering="crispEdges"><rect x="567.500" y="171.500" width="996" height="705" fill="none" stroke="#fff"/><rect x="1200.500" y="256.500" width="298" height="522" fill="none" stroke="#fff"/><line x1="1300" y1="342.5" x2="1498" y2="342.5" stroke="#8c0000" stroke-width="1"/><line x1="1300" y1="426.5" x2="1498" y2="426.5" stroke="#8c0000" stroke-width="1"/><line x1="1300" y1="486.5" x2="1498" y2="486.5" stroke="#8c0000" stroke-width="1"/><line x1="1300" y1="509.5" x2="1498" y2="509.5" stroke="#8c0000" stroke-width="1"/><line x1="1300" y1="560.5" x2="1498" y2="560.5" stroke="#8c0000" stroke-width="1"/><line x1="1300" y1="628.5" x2="1498" y2="628.5" stroke="#8c0000" stroke-width="1"/><line x1="1300" y1="697.5" x2="1498" y2="697.5" stroke="#8c0000" stroke-width="1"/><line x1="1357.5" y1="256" x2="1470.1476" y2="778" stroke="#8c0000" stroke-width="1"/><line x1="1300.5333" y1="256" x2="1413.1809" y2="778" stroke="#8c0000" stroke-width="1"/><line x1="1303.3333" y1="256" x2="1415.9809" y2="778" stroke="#8c0000" stroke-width="1"/><line x1="1288.2832" y1="500" x2="1348.2756" y2="778" stroke="#8c0000" stroke-width="1"/><line x1="1290.5491" y1="600" x2="1328.9615" y2="778" stroke="#8c0000" stroke-width="1"/><path d="M1300 304.5L1337.5 304.5L1374 333" fill="none" stroke="#ff0000" stroke-width="1"/><path d="M1300 731.5L1414 731.5L1451 688" fill="none" stroke="#ff0000" stroke-width="1"/><path d="M1300 332.5L1327 332.5L1348.5 350L1419.5 680L1401 702.5L1300 702.5" fill="none" stroke="#ffffff" stroke-width="1"/><line x1="1300" y1="339.5" x2="1316" y2="339.5" stroke="#00e000" stroke-width="1"/><line x1="1300" y1="699.5" x2="1396" y2="699.5" stroke="#00e000" stroke-width="1"/><line x1="1309" y1="685" x2="1311" y2="697" stroke="#00e000" stroke-width="1"/><line x1="1379.5" y1="604" x2="1380.5" y2="605" stroke="#00c000" stroke-width="1"/><rect x="1316.5" y="339.5" width="6" height="6" fill="none" stroke="#ffee00" stroke-width="1" shape-rendering="crispEdges"/><rect x="1334.5" y="423.5" width="6" height="6" fill="none" stroke="#ffee00" stroke-width="1" shape-rendering="crispEdges"/><rect x="1348.5" y="488.5" width="6" height="6" fill="none" stroke="#ffee00" stroke-width="1" shape-rendering="crispEdges"/><rect x="1363.5" y="557.5" width="6" height="6" fill="none" stroke="#ffee00" stroke-width="1" shape-rendering="crispEdges"/><rect x="1378.5" y="625.5" width="6" height="6" fill="none" stroke="#ffee00" stroke-width="1" shape-rendering="crispEdges"/><rect x="1393.5" y="694.5" width="6" height="6" fill="none" stroke="#ffee00" stroke-width="1" shape-rendering="crispEdges"/><rect x="1306.5" y="694.5" width="6" height="6" fill="none" stroke="#ffee00" stroke-width="1" shape-rendering="crispEdges"/><line x1="1013.5" y1="164" x2="1013.5" y2="210" stroke="#fff" stroke-width="1"/><line x1="960" y1="197.5" x2="1067" y2="197.5" stroke="#fff" stroke-width="1"/><rect x="1010.500" y="194.500" width="6" height="6" fill="none" stroke="#fff"/><rect x="804.8" y="197" width="4.500" height="25" fill="#fff"/><text x="813.3" y="212.500" font-family="Liberation Sans,sans-serif" font-size="20" fill="#fff" textLength="20.500" lengthAdjust="spacingAndGlyphs">X0</text><rect x="875" y="197" width="4.500" height="25" fill="#fff"/><text x="883.5" y="212.500" font-family="Liberation Sans,sans-serif" font-size="20" fill="#fff" textLength="20.500" lengthAdjust="spacingAndGlyphs">X1</text><rect x="949" y="197" width="4.500" height="25" fill="#fff"/><text x="957.5" y="212.500" font-family="Liberation Sans,sans-serif" font-size="20" fill="#fff" textLength="20.500" lengthAdjust="spacingAndGlyphs">X2</text><rect x="1024" y="197" width="4.500" height="25" fill="#fff"/><text x="1032.5" y="212.500" font-family="Liberation Sans,sans-serif" font-size="20" fill="#fff" textLength="20.500" lengthAdjust="spacingAndGlyphs">X3</text><rect x="1097" y="197" width="4.500" height="25" fill="#fff"/><text x="1105.5" y="212.500" font-family="Liberation Sans,sans-serif" font-size="20" fill="#fff" textLength="20.500" lengthAdjust="spacingAndGlyphs">X4</text><rect x="1171" y="197" width="4.500" height="25" fill="#fff"/><text x="1179.5" y="212.500" font-family="Liberation Sans,sans-serif" font-size="20" fill="#fff" textLength="20.500" lengthAdjust="spacingAndGlyphs">X5</text><rect x="1245.5" y="197" width="4.500" height="25" fill="#fff"/><text x="1254.0" y="212.500" font-family="Liberation Sans,sans-serif" font-size="20" fill="#fff" textLength="20.500" lengthAdjust="spacingAndGlyphs">X6</text><rect x="1319.5" y="197" width="4.500" height="25" fill="#fff"/><text x="1328.0" y="212.500" font-family="Liberation Sans,sans-serif" font-size="20" fill="#fff" textLength="20.500" lengthAdjust="spacingAndGlyphs">X7</text><line x1="1319.5" y1="221" x2="1319.5" y2="246" stroke="#fff" stroke-width="1"/><text x="1352.500" y="504.500" text-anchor="end" font-family="Liberation Sans,sans-serif" font-weight="bold" font-size="16" fill="#fff" textLength="86" lengthAdjust="spacingAndGlyphs">RESTAURANT</text></svg>
<div style="left:548px;top:203px;width:761px;height:673px;background:#e9eaec;"></div>
<div style="left:548px;top:203px;width:761px;height:30px;background:#72767d;"></div>
<div style="left:548px;top:843px;width:761px;height:33px;background:#72767d;"></div>
<span style="left:563px;top:211.50px;font-size:13px;line-height:16px;color:#ececec;white-space:pre;font-weight:bold;letter-spacing:0.434px;">Tracing/Grid Editor</span>
<svg width="11" height="11" style="left:1289px;top:212px"><path d="M1 1l9 9M10 1l-9 9" stroke="#f2f2f2" stroke-width="1.200"/></svg>
<div style="left:561px;top:245px;width:148px;height:22px;background:#fdfdfd;border-radius:1.5px;box-shadow:0.5px 1px 1.5px rgba(120,124,140,.55),0 0 0 0.5px rgba(200,202,208,.7);"></div>
<span style="left:635.0px;top:249.84px;font-size:12.3px;line-height:15px;color:#101010;white-space:pre;letter-spacing:-0.849px;transform:translateX(-50%);">0 Layers Selected</span>
<div style="left:717px;top:245px;width:25px;height:22px;background:#fdfdfd;border-radius:1.5px;box-shadow:0.5px 1px 1.5px rgba(120,124,140,.55),0 0 0 0.5px rgba(200,202,208,.7);"></div>
<span style="left:726.5px;top:247.98px;font-size:14.5px;line-height:18px;color:#3a3a3a;white-space:pre;font-family:'DejaVu Sans',sans-serif;transform:translateX(-50%);">❮</span>
<span style="left:731.5px;top:247.98px;font-size:14.5px;line-height:18px;color:#3a3a3a;white-space:pre;font-family:'DejaVu Sans',sans-serif;transform:translateX(-50%);">❮</span>
<div style="left:559px;top:270px;width:152px;height:563px;background:#ffffff;border:1px solid #7b808a;"></div>
<div style="left:560px;top:271px;width:150px;height:561px;overflow:hidden;">
<svg width="12" height="12" style="left:3px;top:2px"><rect x="0.500" y="0.500" width="11" height="11" fill="#f3f4f8" stroke="#8c8f94"/><rect x="1.500" y="1.500" width="9" height="9" fill="none" stroke="#d6d9e2"/><path d="M3 5.500l2.200 3l3.800-6" fill="none" stroke="#3a4fa0" stroke-width="1.500"/></svg>
<span style="left:16.5px;top:1.32px;font-size:11.5px;line-height:14px;color:#000;white-space:pre;font-family:'Liberation Sans','NanumGothic','Noto Sans CJK KR',sans-serif;letter-spacing:-0.406px;">0</span>
<svg width="12" height="12" style="left:3px;top:15px"><rect x="0.500" y="0.500" width="11" height="11" fill="#f3f4f8" stroke="#8c8f94"/><rect x="1.500" y="1.500" width="9" height="9" fill="none" stroke="#d6d9e2"/><path d="M3 5.500l2.200 3l3.800-6" fill="none" stroke="#3a4fa0" stroke-width="1.500"/></svg>
<span style="left:16.5px;top:14.32px;font-size:11.5px;line-height:14px;color:#000;white-space:pre;font-family:'Liberation Sans','NanumGothic','Noto Sans CJK KR',sans-serif;letter-spacing:-0.399px;">Defpoints</span>
<svg width="12" height="12" style="left:3px;top:28px"><rect x="0.500" y="0.500" width="11" height="11" fill="#f3f4f8" stroke="#8c8f94"/><rect x="1.500" y="1.500" width="9" height="9" fill="none" stroke="#d6d9e2"/><path d="M3 5.500l2.200 3l3.800-6" fill="none" stroke="#3a4fa0" stroke-width="1.500"/></svg>
<span style="left:16.5px;top:27.32px;font-size:11.5px;line-height:14px;color:#000;white-space:pre;font-family:'Liberation Sans','NanumGothic','Noto Sans CJK KR',sans-serif;letter-spacing:-0.625px;">W1</span>
<svg width="12" height="12" style="left:3px;top:41px"><rect x="0.500" y="0.500" width="11" height="11" fill="#f3f4f8" stroke="#8c8f94"/><rect x="1.500" y="1.500" width="9" height="9" fill="none" stroke="#d6d9e2"/><path d="M3 5.500l2.200 3l3.800-6" fill="none" stroke="#3a4fa0" stroke-width="1.500"/></svg>
<span style="left:16.5px;top:40.32px;font-size:11.5px;line-height:14px;color:#000;white-space:pre;font-family:'Liberation Sans','NanumGothic','Noto Sans CJK KR',sans-serif;letter-spacing:0.162px;">01.토지이용계획(13 0415)</span>
<svg width="12" height="12" style="left:3px;top:54px"><rect x="0.500" y="0.500" width="11" height="11" fill="#f3f4f8" stroke="#8c8f94"/><rect x="1.500" y="1.500" width="9" height="9" fill="none" stroke="#d6d9e2"/><path d="M3 5.500l2.200 3l3.800-6" fill="none" stroke="#3a4fa0" stroke-width="1.500"/></svg>
<span style="left:16.5px;top:53.32px;font-size:11.5px;line-height:14px;color:#000;white-space:pre;font-family:'Liberation Sans','NanumGothic','Noto Sans CJK KR',sans-serif;letter-spacing:0.619px;">01.건축한계선</span>
<svg width="12" height="12" style="left:3px;top:67px"><rect x="0.500" y="0.500" width="11" height="11" fill="#f3f4f8" stroke="#8c8f94"/><rect x="1.500" y="1.500" width="9" height="9" fill="none" stroke="#d6d9e2"/><path d="M3 5.500l2.200 3l3.800-6" fill="none" stroke="#3a4fa0" stroke-width="1.500"/></svg>
<span style="left:16.5px;top:66.32px;font-size:11.5px;line-height:14px;color:#000;white-space:pre;font-family:'Liberation Sans','NanumGothic','Noto Sans CJK KR',sans-serif;letter-spacing:-0.216px;">xref-core-기준층$0$DOOR</span>
<svg width="12" height="12" style="left:3px;top:80px"><rect x="0.500" y="0.500" width="11" height="11" fill="#f3f4f8" stroke="#8c8f94"/><rect x="1.500" y="1.500" width="9" height="9" fill="none" stroke="#d6d9e2"/><path d="M3 5.500l2.200 3l3.800-6" fill="none" stroke="#3a4fa0" stroke-width="1.500"/></svg>
<span style="left:16.5px;top:79.32px;font-size:11.5px;line-height:14px;color:#000;white-space:pre;font-family:'Liberation Sans','NanumGothic','Noto Sans CJK KR',sans-serif;letter-spacing:-0.519px;">A-DIM</span>
<svg width="12" height="12" style="left:3px;top:93px"><rect x="0.500" y="0.500" width="11" height="11" fill="#f3f4f8" stroke="#8c8f94"/><rect x="1.500" y="1.500" width="9" height="9" fill="none" stroke="#d6d9e2"/><path d="M3 5.500l2.200 3l3.800-6" fill="none" stroke="#3a4fa0" stroke-width="1.500"/></svg>
<span style="left:16.5px;top:92.32px;font-size:11.5px;line-height:14px;color:#000;white-space:pre;font-family:'Liberation Sans','NanumGothic','Noto Sans CJK KR',sans-serif;letter-spacing:-0.365px;">DIM</span>
<svg width="12" height="12" style="left:3px;top:106px"><rect x="0.500" y="0.500" width="11" height="11" fill="#f3f4f8" stroke="#8c8f94"/><rect x="1.500" y="1.500" width="9" height="9" fill="none" stroke="#d6d9e2"/><path d="M3 5.500l2.200 3l3.800-6" fill="none" stroke="#3a4fa0" stroke-width="1.500"/></svg>
<span style="left:16.5px;top:105.32px;font-size:11.5px;line-height:14px;color:#000;white-space:pre;font-family:'Liberation Sans','NanumGothic','Noto Sans CJK KR',sans-serif;letter-spacing:-0.223px;">WALL</span>
<svg width="12" height="12" style="left:3px;top:119px"><rect x="0.500" y="0.500" width="11" height="11" fill="#f3f4f8" stroke="#8c8f94"/><rect x="1.500" y="1.500" width="9" height="9" fill="none" stroke="#d6d9e2"/><path d="M3 5.500l2.200 3l3.800-6" fill="none" stroke="#3a4fa0" stroke-width="1.500"/></svg>
<span style="left:16.5px;top:118.32px;font-size:11.5px;line-height:14px;color:#000;white-space:pre;font-family:'Liberation Sans','NanumGothic','Noto Sans CJK KR',sans-serif;letter-spacing:-0.489px;">LAY_FOR_NGEN_DIMENS</span>
<svg width="12" height="12" style="left:3px;top:132px"><rect x="0.500" y="0.500" width="11" height="11" fill="#f3f4f8" stroke="#8c8f94"/><rect x="1.500" y="1.500" width="9" height="9" fill="none" stroke="#d6d9e2"/><path d="M3 5.500l2.200 3l3.800-6" fill="none" stroke="#3a4fa0" stroke-width="1.500"/></svg>
<span style="left:16.5px;top:131.32px;font-size:11.5px;line-height:14px;color:#000;white-space:pre;font-family:'Liberation Sans','NanumGothic','Noto Sans CJK KR',sans-serif;letter-spacing:-0.760px;">CEN</span>
<svg width="12" height="12" style="left:3px;top:145px"><rect x="0.500" y="0.500" width="11" height="11" fill="#f3f4f8" stroke="#8c8f94"/><rect x="1.500" y="1.500" width="9" height="9" fill="none" stroke="#d6d9e2"/><path d="M3 5.500l2.200 3l3.800-6" fill="none" stroke="#3a4fa0" stroke-width="1.500"/></svg>
<span style="left:16.5px;top:144.32px;font-size:11.5px;line-height:14px;color:#000;white-space:pre;font-family:'Liberation Sans','NanumGothic','Noto Sans CJK KR',sans-serif;letter-spacing:0.285px;">0-구적</span>
<svg width="12" height="12" style="left:3px;top:158px"><rect x="0.500" y="0.500" width="11" height="11" fill="#f3f4f8" stroke="#8c8f94"/><rect x="1.500" y="1.500" width="9" height="9" fill="none" stroke="#d6d9e2"/><path d="M3 5.500l2.200 3l3.800-6" fill="none" stroke="#3a4fa0" stroke-width="1.500"/></svg>
<span style="left:16.5px;top:157.32px;font-size:11.5px;line-height:14px;color:#000;white-space:pre;font-family:'Liberation Sans','NanumGothic','Noto Sans CJK KR',sans-serif;letter-spacing:-0.885px;">COL</span>
<svg width="12" height="12" style="left:3px;top:171px"><rect x="0.500" y="0.500" width="11" height="11" fill="#f3f4f8" stroke="#8c8f94"/><rect x="1.500" y="1.500" width="9" height="9" fill="none" stroke="#d6d9e2"/><path d="M3 5.500l2.200 3l3.800-6" fill="none" stroke="#3a4fa0" stroke-width="1.500"/></svg>
<span style="left:16.5px;top:170.32px;font-size:11.5px;line-height:14px;color:#000;white-space:pre;font-family:'Liberation Sans','NanumGothic','Noto Sans CJK KR',sans-serif;letter-spacing:-0.008px;">area</span>
<svg width="12" height="12" style="left:3px;top:184px"><rect x="0.500" y="0.500" width="11" height="11" fill="#f3f4f8" stroke="#8c8f94"/><rect x="1.500" y="1.500" width="9" height="9" fill="none" stroke="#d6d9e2"/><path d="M3 5.500l2.200 3l3.800-6" fill="none" stroke="#3a4fa0" stroke-width="1.500"/></svg>
<span style="left:16.5px;top:183.32px;font-size:11.5px;line-height:14px;color:#000;white-space:pre;font-family:'Liberation Sans','NanumGothic','Noto Sans CJK KR',sans-serif;letter-spacing:-0.458px;">TEX</span>
<svg width="12" height="12" style="left:3px;top:197px"><rect x="0.500" y="0.500" width="11" height="11" fill="#f3f4f8" stroke="#8c8f94"/><rect x="1.500" y="1.500" width="9" height="9" fill="none" stroke="#d6d9e2"/><path d="M3 5.500l2.200 3l3.800-6" fill="none" stroke="#3a4fa0" stroke-width="1.500"/></svg>
<span style="left:16.5px;top:196.32px;font-size:11.5px;line-height:14px;color:#000;white-space:pre;font-family:'Liberation Sans','NanumGothic','Noto Sans CJK KR',sans-serif;letter-spacing:-0.203px;">A-STA</span>
<svg width="12" height="12" style="left:3px;top:210px"><rect x="0.500" y="0.500" width="11" height="11" fill="#f3f4f8" stroke="#8c8f94"/><rect x="1.500" y="1.500" width="9" height="9" fill="none" stroke="#d6d9e2"/><path d="M3 5.500l2.200 3l3.800-6" fill="none" stroke="#3a4fa0" stroke-width="1.500"/></svg>
<span style="left:16.5px;top:209.32px;font-size:11.5px;line-height:14px;color:#000;white-space:pre;font-family:'Liberation Sans','NanumGothic','Noto Sans CJK KR',sans-serif;letter-spacing:-0.510px;">FIN</span>
<svg width="12" height="12" style="left:3px;top:223px"><rect x="0.500" y="0.500" width="11" height="11" fill="#f3f4f8" stroke="#8c8f94"/><rect x="1.500" y="1.500" width="9" height="9" fill="none" stroke="#d6d9e2"/><path d="M3 5.500l2.200 3l3.800-6" fill="none" stroke="#3a4fa0" stroke-width="1.500"/></svg>
<span style="left:16.5px;top:222.32px;font-size:11.5px;line-height:14px;color:#000;white-space:pre;font-family:'Liberation Sans','NanumGothic','Noto Sans CJK KR',sans-serif;letter-spacing:-0.206px;">APWALL</span>
<svg width="12" height="12" style="left:3px;top:236px"><rect x="0.500" y="0.500" width="11" height="11" fill="#f3f4f8" stroke="#8c8f94"/><rect x="1.500" y="1.500" width="9" height="9" fill="none" stroke="#d6d9e2"/><path d="M3 5.500l2.200 3l3.800-6" fill="none" stroke="#3a4fa0" stroke-width="1.500"/></svg>
<span style="left:16.5px;top:235.32px;font-size:11.5px;line-height:14px;color:#000;white-space:pre;font-family:'Liberation Sans','NanumGothic','Noto Sans CJK KR',sans-serif;letter-spacing:-0.651px;">A-ANNO-OPEN</span>
<svg width="12" height="12" style="left:3px;top:249px"><rect x="0.500" y="0.500" width="11" height="11" fill="#f3f4f8" stroke="#8c8f94"/><rect x="1.500" y="1.500" width="9" height="9" fill="none" stroke="#d6d9e2"/><path d="M3 5.500l2.200 3l3.800-6" fill="none" stroke="#3a4fa0" stroke-width="1.500"/></svg>
<span style="left:16.5px;top:248.32px;font-size:11.5px;line-height:14px;color:#000;white-space:pre;font-family:'Liberation Sans','NanumGothic','Noto Sans CJK KR',sans-serif;letter-spacing:-0.366px;">A-HANDRAIL</span>
<svg width="12" height="12" style="left:3px;top:262px"><rect x="0.500" y="0.500" width="11" height="11" fill="#f3f4f8" stroke="#8c8f94"/><rect x="1.500" y="1.500" width="9" height="9" fill="none" stroke="#d6d9e2"/><path d="M3 5.500l2.200 3l3.800-6" fill="none" stroke="#3a4fa0" stroke-width="1.500"/></svg>
<span style="left:16.5px;top:261.32px;font-size:11.5px;line-height:14px;color:#000;white-space:pre;font-family:'Liberation Sans','NanumGothic','Noto Sans CJK KR',sans-serif;letter-spacing:-0.684px;">A-SYM</span>
<svg width="12" height="12" style="left:3px;top:275px"><rect x="0.500" y="0.500" width="11" height="11" fill="#f3f4f8" stroke="#8c8f94"/><rect x="1.500" y="1.500" width="9" height="9" fill="none" stroke="#d6d9e2"/><path d="M3 5.500l2.200 3l3.800-6" fill="none" stroke="#3a4fa0" stroke-width="1.500"/></svg>
<span style="left:16.5px;top:274.32px;font-size:11.5px;line-height:14px;color:#000;white-space:pre;font-family:'Liberation Sans','NanumGothic','Noto Sans CJK KR',sans-serif;letter-spacing:-0.567px;">G-REGION-VIEW</span>
</div>
<div style="left:750px;top:271px;width:77px;height:20px;background:#fdfdfd;border-radius:1.5px;box-shadow:0.5px 1px 1.5px rgba(120,124,140,.55),0 0 0 0.5px rgba(200,202,208,.7);"></div>
<span style="left:788.5px;top:274.84px;font-size:12.3px;line-height:15px;color:#101010;white-space:pre;letter-spacing:-0.861px;transform:translateX(-50%);">Center line</span>
<div style="left:748px;top:295px;width:174px;height:62px;background:#ffffff;border:1px solid #7b808a;"></div>
<div style="left:717px;top:296px;width:25px;height:20px;background:#fdfdfd;border-radius:1.5px;box-shadow:0.5px 1px 1.5px rgba(120,124,140,.55),0 0 0 0.5px rgba(200,202,208,.7);"></div>
<span style="left:729.5px;top:297.15px;font-size:14px;line-height:18px;color:#3a3a3a;white-space:pre;font-family:'DejaVu Sans',sans-serif;transform:translateX(-50%);">❯</span>
<div style="left:717px;top:322px;width:25px;height:20px;background:#fdfdfd;border-radius:1.5px;box-shadow:0.5px 1px 1.5px rgba(120,124,140,.55),0 0 0 0.5px rgba(200,202,208,.7);"></div>
<span style="left:728.5px;top:323.15px;font-size:14px;line-height:18px;color:#3a3a3a;white-space:pre;font-family:'DejaVu Sans',sans-serif;transform:translateX(-50%);">❮</span>
<span style="left:751.5px;top:297.02px;font-size:11.5px;line-height:14px;color:#000;white-space:pre;font-family:'Liberation Sans','NanumGothic','Noto Sans CJK KR',sans-serif;">CEN</span>
<div style="left:750px;top:366px;width:77px;height:20px;background:#fdfdfd;border-radius:1.5px;box-shadow:0.5px 1px 1.5px rgba(120,124,140,.55),0 0 0 0.5px rgba(200,202,208,.7);"></div>
<span style="left:788.5px;top:369.84px;font-size:12.3px;line-height:15px;color:#101010;white-space:pre;transform-origin:50% 0;transform:translateX(-50%) scaleX(0.8316);">Column line</span>
<div style="left:748px;top:389px;width:174px;height:62px;background:#ffffff;border:1px solid #7b808a;"></div>
<div style="left:717px;top:392px;width:25px;height:20px;background:#fdfdfd;border-radius:1.5px;box-shadow:0.5px 1px 1.5px rgba(120,124,140,.55),0 0 0 0.5px rgba(200,202,208,.7);"></div>
<span style="left:729.5px;top:393.15px;font-size:14px;line-height:18px;color:#3a3a3a;white-space:pre;font-family:'DejaVu Sans',sans-serif;transform:translateX(-50%);">❯</span>
<div style="left:717px;top:418px;width:25px;height:20px;background:#fdfdfd;border-radius:1.5px;box-shadow:0.5px 1px 1.5px rgba(120,124,140,.55),0 0 0 0.5px rgba(200,202,208,.7);"></div>
<span style="left:728.5px;top:419.15px;font-size:14px;line-height:18px;color:#3a3a3a;white-space:pre;font-family:'DejaVu Sans',sans-serif;transform:translateX(-50%);">❮</span>
<span style="left:751.5px;top:391.02px;font-size:11.5px;line-height:14px;color:#000;white-space:pre;font-family:'Liberation Sans','NanumGothic','Noto Sans CJK KR',sans-serif;">COL</span>
<div style="left:750px;top:461px;width:77px;height:20px;background:#fdfdfd;border-radius:1.5px;box-shadow:0.5px 1px 1.5px rgba(120,124,140,.55),0 0 0 0.5px rgba(200,202,208,.7);"></div>
<span style="left:788.5px;top:464.84px;font-size:12.3px;line-height:15px;color:#101010;white-space:pre;letter-spacing:-0.557px;transform:translateX(-50%);">Wall line</span>
<div style="left:748px;top:484px;width:174px;height:62px;background:#ffffff;border:1px solid #7b808a;"></div>
<div style="left:717px;top:485px;width:25px;height:20px;background:#fdfdfd;border-radius:1.5px;box-shadow:0.5px 1px 1.5px rgba(120,124,140,.55),0 0 0 0.5px rgba(200,202,208,.7);"></div>
<span style="left:729.5px;top:486.15px;font-size:14px;line-height:18px;color:#3a3a3a;white-space:pre;font-family:'DejaVu Sans',sans-serif;transform:translateX(-50%);">❯</span>
<div style="left:717px;top:510px;width:25px;height:20px;background:#fdfdfd;border-radius:1.5px;box-shadow:0.5px 1px 1.5px rgba(120,124,140,.55),0 0 0 0.5px rgba(200,202,208,.7);"></div>
<span style="left:728.5px;top:511.15px;font-size:14px;line-height:18px;color:#3a3a3a;white-space:pre;font-family:'DejaVu Sans',sans-serif;transform:translateX(-50%);">❮</span>
<span style="left:751.5px;top:486.02px;font-size:11.5px;line-height:14px;color:#000;white-space:pre;font-family:'Liberation Sans','NanumGothic','Noto Sans CJK KR',sans-serif;">W1</span>
<div style="left:750px;top:556px;width:77px;height:20px;background:#fdfdfd;border-radius:1.5px;box-shadow:0.5px 1px 1.5px rgba(120,124,140,.55),0 0 0 0.5px rgba(200,202,208,.7);"></div>
<span style="left:788.5px;top:559.84px;font-size:12.3px;line-height:15px;color:#101010;white-space:pre;transform-origin:50% 0;transform:translateX(-50%) scaleX(0.8435);">Dimension</span>
<div style="left:748px;top:580px;width:174px;height:62px;background:#ffffff;border:1px solid #7b808a;"></div>
<div style="left:717px;top:581px;width:25px;height:20px;background:#fdfdfd;border-radius:1.5px;box-shadow:0.5px 1px 1.5px rgba(120,124,140,.55),0 0 0 0.5px rgba(200,202,208,.7);"></div>
<span style="left:729.5px;top:582.15px;font-size:14px;line-height:18px;color:#3a3a3a;white-space:pre;font-family:'DejaVu Sans',sans-serif;transform:translateX(-50%);">❯</span>
<div style="left:717px;top:606px;width:25px;height:20px;background:#fdfdfd;border-radius:1.5px;box-shadow:0.5px 1px 1.5px rgba(120,124,140,.55),0 0 0 0.5px rgba(200,202,208,.7);"></div>
<span style="left:728.5px;top:607.15px;font-size:14px;line-height:18px;color:#3a3a3a;white-space:pre;font-family:'DejaVu Sans',sans-serif;transform:translateX(-50%);">❮</span>
<div style="left:750px;top:652px;width:77px;height:20px;background:#fdfdfd;border-radius:1.5px;box-shadow:0.5px 1px 1.5px rgba(120,124,140,.55),0 0 0 0.5px rgba(200,202,208,.7);"></div>
<span style="left:788.5px;top:655.84px;font-size:12.3px;line-height:15px;color:#101010;white-space:pre;transform-origin:50% 0;transform:translateX(-50%) scaleX(0.8470);">Grid Bubble</span>
<div style="left:748px;top:675px;width:174px;height:62px;background:#ffffff;border:1px solid #7b808a;"></div>
<div style="left:717px;top:677px;width:25px;height:20px;background:#fdfdfd;border-radius:1.5px;box-shadow:0.5px 1px 1.5px rgba(120,124,140,.55),0 0 0 0.5px rgba(200,202,208,.7);"></div>
<span style="left:729.5px;top:678.15px;font-size:14px;line-height:18px;color:#3a3a3a;white-space:pre;font-family:'DejaVu Sans',sans-serif;transform:translateX(-50%);">❯</span>
<div style="left:717px;top:702px;width:25px;height:20px;background:#fdfdfd;border-radius:1.5px;box-shadow:0.5px 1px 1.5px rgba(120,124,140,.55),0 0 0 0.5px rgba(200,202,208,.7);"></div>
<span style="left:728.5px;top:703.15px;font-size:14px;line-height:18px;color:#3a3a3a;white-space:pre;font-family:'DejaVu Sans',sans-serif;transform:translateX(-50%);">❮</span>
<div style="left:750px;top:748px;width:77px;height:20px;background:#fdfdfd;border-radius:1.5px;box-shadow:0.5px 1px 1.5px rgba(120,124,140,.55),0 0 0 0.5px rgba(200,202,208,.7);"></div>
<span style="left:788.5px;top:751.84px;font-size:12.3px;line-height:15px;color:#101010;white-space:pre;letter-spacing:-0.786px;transform:translateX(-50%);">Undefined</span>
<div style="left:748px;top:771px;width:174px;height:62px;background:#ffffff;border:1px solid #7b808a;"></div>
<div style="left:717px;top:772px;width:25px;height:20px;background:#fdfdfd;border-radius:1.5px;box-shadow:0.5px 1px 1.5px rgba(120,124,140,.55),0 0 0 0.5px rgba(200,202,208,.7);"></div>
<span style="left:729.5px;top:773.15px;font-size:14px;line-height:18px;color:#3a3a3a;white-space:pre;font-family:'DejaVu Sans',sans-serif;transform:translateX(-50%);">❯</span>
<div style="left:717px;top:797px;width:25px;height:20px;background:#fdfdfd;border-radius:1.5px;box-shadow:0.5px 1px 1.5px rgba(120,124,140,.55),0 0 0 0.5px rgba(200,202,208,.7);"></div>
<span style="left:728.5px;top:798.15px;font-size:14px;line-height:18px;color:#3a3a3a;white-space:pre;font-family:'DejaVu Sans',sans-serif;transform:translateX(-50%);">❮</span>
<div style="left:835px;top:556px;width:25px;height:20px;background:#fdfdfd;border-radius:1.5px;box-shadow:0.5px 1px 1.5px rgba(120,124,140,.55),0 0 0 0.5px rgba(200,202,208,.7);"></div>
<svg width="20.00" height="18.00" viewBox="0 0 20 18" style="left:838.00px;top:557.00px"><path d="M1.500 2.500v8M17.500 2.500v8" fill="none" stroke="#2a2a2a" stroke-width="1.1"/><path d="M3 6.5L16 6.5" stroke="#2a2a2a" stroke-width="1" fill="none" /><path d="M2 6.5l2.6 -2.08v4.16z" fill="#2a2a2a"/><path d="M17 6.5l-2.6 -2.08v4.16z" fill="#2a2a2a"/><path d="M8 13.5c2.200-3.400 6.800-3.400 9 0c-2.200 3.400-6.800 3.400-9 0z" fill="#fff" stroke="#2a2a2a" stroke-width="0.9"/><circle cx="12.5" cy="13.5" r="1.5" fill="none" stroke="#2a2a2a" stroke-width="0.9"/></svg>
<div style="left:864px;top:556px;width:25px;height:20px;background:#fdfdfd;border-radius:1.5px;box-shadow:0.5px 1px 1.5px rgba(120,124,140,.55),0 0 0 0.5px rgba(200,202,208,.7);"></div>
<svg width="20.00" height="18.00" viewBox="0 0 20 18" style="left:867.00px;top:557.00px"><path d="M1.500 2.500v8M17.500 2.500v8" fill="none" stroke="#2a2a2a" stroke-width="1.1"/><path d="M3 6.5L16 6.5" stroke="#2a2a2a" stroke-width="1" fill="none" /><path d="M2 6.5l2.6 -2.08v4.16z" fill="#2a2a2a"/><path d="M17 6.5l-2.6 -2.08v4.16z" fill="#2a2a2a"/><path d="M11.2 14.3a3 3 0 1 0 3-3.200" fill="none" stroke="#2a2a2a" stroke-width="1.3"/><path d="M14.8 8.7l-2.800 2.300l2.800 2.300z" fill="#2a2a2a"/></svg>
<div style="left:835px;top:652px;width:25px;height:20px;background:#fdfdfd;border-radius:1.5px;box-shadow:0.5px 1px 1.5px rgba(120,124,140,.55),0 0 0 0.5px rgba(200,202,208,.7);"></div>
<svg width="20.00" height="18.00" viewBox="0 0 20 18" style="left:838.00px;top:653.00px"><path d="M7 2v13M13 2v13M3 6h14M3 11.500h14" fill="none" stroke="#2a2a2a" stroke-width="1.1"/><circle cx="7" cy="2.5" r="1.4" fill="#2a2a2a"/><circle cx="13" cy="2.5" r="1.4" fill="#2a2a2a"/><circle cx="2.8" cy="6" r="1.4" fill="#2a2a2a"/><circle cx="2.8" cy="11.5" r="1.4" fill="#2a2a2a"/><path d="M9 14.5c2.200-3.400 6.800-3.400 9 0c-2.200 3.400-6.800 3.400-9 0z" fill="#fff" stroke="#2a2a2a" stroke-width="0.9"/><circle cx="13.5" cy="14.5" r="1.5" fill="none" stroke="#2a2a2a" stroke-width="0.9"/></svg>
<div style="left:864px;top:652px;width:25px;height:20px;background:#fdfdfd;border-radius:1.5px;box-shadow:0.5px 1px 1.5px rgba(120,124,140,.55),0 0 0 0.5px rgba(200,202,208,.7);"></div>
<svg width="20.00" height="18.00" viewBox="0 0 20 18" style="left:867.00px;top:653.00px"><path d="M7 2v13M13 2v13M3 6h14M3 11.500h14" fill="none" stroke="#2a2a2a" stroke-width="1.1"/><circle cx="7" cy="2.5" r="1.4" fill="#2a2a2a"/><circle cx="13" cy="2.5" r="1.4" fill="#2a2a2a"/><circle cx="2.8" cy="6" r="1.4" fill="#2a2a2a"/><circle cx="2.8" cy="11.5" r="1.4" fill="#2a2a2a"/><path d="M12.2 14.8a3 3 0 1 0 3-3.200" fill="none" stroke="#2a2a2a" stroke-width="1.3"/><path d="M15.8 9.2l-2.800 2.300l2.800 2.300z" fill="#2a2a2a"/></svg>
<div style="left:749px;top:772px;width:172px;height:60px;overflow:hidden;">
<span style="left:2.5px;top:0.52px;font-size:11.5px;line-height:14px;color:#000;white-space:pre;font-family:'Liberation Sans','NanumGothic','Noto Sans CJK KR',sans-serif;letter-spacing:-0.406px;">0</span>
<span style="left:2.5px;top:13.52px;font-size:11.5px;line-height:14px;color:#000;white-space:pre;font-family:'Liberation Sans','NanumGothic','Noto Sans CJK KR',sans-serif;letter-spacing:0.619px;">01.건축한계선</span>
<span style="left:2.5px;top:26.52px;font-size:11.5px;line-height:14px;color:#000;white-space:pre;font-family:'Liberation Sans','NanumGothic','Noto Sans CJK KR',sans-serif;letter-spacing:0.162px;">01.토지이용계획(13 0415)</span>
<span style="left:2.5px;top:39.52px;font-size:11.5px;line-height:14px;color:#000;white-space:pre;font-family:'Liberation Sans','NanumGothic','Noto Sans CJK KR',sans-serif;letter-spacing:0.285px;">0-구적</span>
<span style="left:2.5px;top:52.52px;font-size:11.5px;line-height:14px;color:#000;white-space:pre;font-family:'Liberation Sans','NanumGothic','Noto Sans CJK KR',sans-serif;letter-spacing:-0.651px;">A-ANNO-OPEN</span>
<div style="left:155px;top:0;width:17px;height:60px;background:#fff;"></div>
<svg width="17" height="60" style="left:155px;top:0"><path d="M5 10l3.500-4l3.500 4z" fill="#404040"/><path d="M5 49l3.500 4l3.500-4z" fill="#404040"/><rect x="1.500" y="18.500" width="13" height="15" rx="1" fill="#f2f2f2" stroke="#9a9a9a"/><rect x="3" y="20" width="10" height="5" fill="#fff"/></svg>
</div>
<div style="left:942px;top:245px;width:98px;height:22px;background:#fdfdfd;border-radius:1.5px;box-shadow:0.5px 1px 1.5px rgba(120,124,140,.55),0 0 0 0.5px rgba(200,202,208,.7);"></div>
<span style="left:991.0px;top:249.84px;font-size:12.3px;line-height:15px;color:#101010;white-space:pre;letter-spacing:-0.821px;transform:translateX(-50%);">Preview</span>
<div style="left:1045px;top:245px;width:98px;height:22px;background:#fdfdfd;border-radius:1.5px;box-shadow:0.5px 1px 1.5px rgba(120,124,140,.55),0 0 0 0.5px rgba(200,202,208,.7);"></div>
<span style="left:1094.0px;top:249.84px;font-size:12.3px;line-height:15px;color:#101010;white-space:pre;letter-spacing:-0.764px;transform:translateX(-50%);">Define Region</span>
<div style="left:1149px;top:245px;width:98px;height:22px;background:#fdfdfd;border-radius:1.5px;box-shadow:0.5px 1px 1.5px rgba(120,124,140,.55),0 0 0 0.5px rgba(200,202,208,.7);"></div>
<span style="left:1198.0px;top:249.84px;font-size:12.3px;line-height:15px;color:#101010;white-space:pre;letter-spacing:-0.825px;transform:translateX(-50%);">Reset</span>
<div style="left:940px;top:270px;width:353px;height:182px;background:#000;"></div>
<svg width="260" height="182" viewBox="0 0 1543 1080" style="left:990px;top:270px"><rect x="62" y="48" width="1385" height="987" fill="none" stroke="#fff" stroke-width="5.5"/><rect x="305" y="170" width="1052" height="730" fill="none" stroke="#fff" stroke-width="5.5"/><line x1="395" y1="170" x2="395" y2="900" stroke="#8e0000" stroke-width="5.5" /><line x1="490" y1="170" x2="490" y2="900" stroke="#8e0000" stroke-width="5.5" /><line x1="592" y1="170" x2="592" y2="900" stroke="#8e0000" stroke-width="5.5" /><line x1="697" y1="170" x2="697" y2="900" stroke="#8e0000" stroke-width="5.5" /><line x1="797" y1="170" x2="797" y2="900" stroke="#8e0000" stroke-width="5.5" /><line x1="900" y1="170" x2="900" y2="900" stroke="#8e0000" stroke-width="5.5" /><line x1="1005" y1="170" x2="1005" y2="900" stroke="#8e0000" stroke-width="5.5" /><line x1="305" y1="290" x2="1357" y2="290" stroke="#8e0000" stroke-width="5.5" /><line x1="305" y1="407" x2="1357" y2="407" stroke="#8e0000" stroke-width="5.5" /><line x1="305" y1="490" x2="1357" y2="490" stroke="#8e0000" stroke-width="5.5" /><line x1="305" y1="525" x2="1357" y2="525" stroke="#8e0000" stroke-width="5.5" /><line x1="305" y1="595" x2="1357" y2="595" stroke="#8e0000" stroke-width="5.5" /><line x1="305" y1="690" x2="1357" y2="690" stroke="#8e0000" stroke-width="5.5" /><line x1="305" y1="787" x2="1357" y2="787" stroke="#8e0000" stroke-width="5.5" /><line x1="870" y1="170" x2="1033" y2="900" stroke="#8e0000" stroke-width="5.5" /><line x1="960" y1="170" x2="1123" y2="900" stroke="#8e0000" stroke-width="5.5" /><line x1="985" y1="170" x2="1148" y2="900" stroke="#8e0000" stroke-width="5.5" /><line x1="1080" y1="170" x2="1243" y2="900" stroke="#8e0000" stroke-width="5.5" /><line x1="1160" y1="170" x2="1323" y2="900" stroke="#8e0000" stroke-width="5.5" /><path d="M435 235L1130 235L1190 280L1292 770L1240 832L455 832L370 745L370 295z" fill="none" stroke="#e00000" stroke-width="5.5" /><path d="M452 275L1120 275L1150 298L1250 755L1225 787L470 790L412 735L412 320z" fill="none" stroke="#fff" stroke-width="4.5" /><path d="M452 285L485 285L485 495L452 495z" fill="none" stroke="#fff" stroke-width="4.5" /><path d="M1110 290L900 290" fill="none" stroke="#00e800" stroke-width="5.5" /><path d="M485 290L485 787L1210 787" fill="none" stroke="#00e800" stroke-width="5.5" /><path d="M485 400L697 400L697 787" fill="none" stroke="#00e800" stroke-width="5.5" /><path d="M757 495L757 787" fill="none" stroke="#00e800" stroke-width="5.5" /><path d="M757 573L950 573" fill="none" stroke="#00e800" stroke-width="5.5" /><path d="M757 495L940 495L1000 787" fill="none" stroke="#00e800" stroke-width="5.5" /><path d="M940 525L1040 525" fill="none" stroke="#00e800" stroke-width="5.5" /><path d="M1035 495L1095 787" fill="none" stroke="#00e800" stroke-width="5.5" /><path d="M1110 290L1215 787" fill="none" stroke="#00e800" stroke-width="5.5" stroke-dasharray="28 8 6 8"/><line x1="760" y1="500" x2="940" y2="570" stroke="#b8b8b8" stroke-width="3.5" /><line x1="760" y1="570" x2="940" y2="500" stroke="#b8b8b8" stroke-width="3.5" /><rect x="484" y="284" width="12" height="12" fill="#f0e000"/><rect x="586" y="284" width="12" height="12" fill="#f0e000"/><rect x="691" y="284" width="12" height="12" fill="#f0e000"/><rect x="791" y="284" width="12" height="12" fill="#f0e000"/><rect x="894" y="284" width="12" height="12" fill="#f0e000"/><rect x="999" y="284" width="12" height="12" fill="#f0e000"/><rect x="1099" y="284" width="12" height="12" fill="#f0e000"/><rect x="484" y="401" width="12" height="12" fill="#f0e000"/><rect x="586" y="401" width="12" height="12" fill="#f0e000"/><rect x="691" y="401" width="12" height="12" fill="#f0e000"/><rect x="1124" y="401" width="12" height="12" fill="#f0e000"/><rect x="484" y="484" width="12" height="12" fill="#f0e000"/><rect x="586" y="484" width="12" height="12" fill="#f0e000"/><rect x="691" y="484" width="12" height="12" fill="#f0e000"/><rect x="1144" y="489" width="12" height="12" fill="#f0e000"/><rect x="484" y="589" width="12" height="12" fill="#f0e000"/><rect x="586" y="589" width="12" height="12" fill="#f0e000"/><rect x="691" y="589" width="12" height="12" fill="#f0e000"/><rect x="959" y="589" width="12" height="12" fill="#f0e000"/><rect x="1044" y="589" width="12" height="12" fill="#f0e000"/><rect x="1164" y="589" width="12" height="12" fill="#f0e000"/><rect x="484" y="684" width="12" height="12" fill="#f0e000"/><rect x="691" y="684" width="12" height="12" fill="#f0e000"/><rect x="979" y="684" width="12" height="12" fill="#f0e000"/><rect x="1064" y="684" width="12" height="12" fill="#f0e000"/><rect x="1186" y="684" width="12" height="12" fill="#f0e000"/><rect x="484" y="781" width="12" height="12" fill="#f0e000"/><rect x="586" y="781" width="12" height="12" fill="#f0e000"/><rect x="691" y="781" width="12" height="12" fill="#f0e000"/><rect x="999" y="781" width="12" height="12" fill="#f0e000"/><rect x="1084" y="781" width="12" height="12" fill="#f0e000"/><rect x="1207" y="781" width="12" height="12" fill="#f0e000"/><rect x="745" y="400" width="267" height="95" fill="none" stroke="#f0e000" stroke-width="7"/><line x1="820" y1="400" x2="820" y2="495" stroke="#f0e000" stroke-width="6" /><line x1="860" y1="400" x2="860" y2="495" stroke="#f0e000" stroke-width="6" /><line x1="900" y1="400" x2="900" y2="495" stroke="#f0e000" stroke-width="6" /><line x1="955" y1="400" x2="955" y2="495" stroke="#f0e000" stroke-width="6" /><rect x="765" y="410" width="50" height="35" fill="#8a9a20"/><rect x="930" y="410" width="30" height="30" fill="#8a9a20"/><circle cx="782" cy="470" r="20" fill="#1a20ff"/><circle cx="983" cy="448" r="20" fill="#1a20ff"/><rect x="825" y="412" width="25" height="28" fill="#1a20ff"/><rect x="825" y="460" width="25" height="30" fill="#1a20ff"/><rect x="905" y="412" width="25" height="28" fill="#1a20ff"/><rect x="905" y="460" width="25" height="30" fill="#1a20ff"/><rect x="772" y="462" width="20" height="16" fill="#fff"/><rect x="974" y="440" width="18" height="15" fill="#fff"/><rect x="653" y="327" width="59" height="23" fill="#fff"/><rect x="528" y="558" width="112" height="29" fill="#fff"/><rect x="807" y="605" width="83" height="18" fill="#fff"/><rect x="980" y="630" width="77" height="27" fill="#fff"/><rect x="1045" y="492" width="112" height="28" fill="#fff"/><rect x="835" y="522" width="31" height="18" fill="#fff"/><rect x="535" y="522" width="63" height="16" fill="#a85050"/><rect x="392" y="85" width="7" height="75" fill="#fff"/><rect x="406" y="85" width="34" height="25" fill="#fff"/><rect x="414" y="130" width="56" height="30" fill="#fff"/><rect x="490" y="85" width="7" height="75" fill="#fff"/><rect x="504" y="85" width="34" height="25" fill="#fff"/><rect x="512" y="130" width="56" height="30" fill="#fff"/><rect x="592" y="85" width="7" height="75" fill="#fff"/><rect x="606" y="85" width="34" height="25" fill="#fff"/><rect x="614" y="130" width="56" height="30" fill="#fff"/><rect x="697" y="85" width="7" height="75" fill="#fff"/><rect x="711" y="85" width="34" height="25" fill="#fff"/><rect x="719" y="130" width="56" height="30" fill="#fff"/><rect x="797" y="85" width="7" height="75" fill="#fff"/><rect x="811" y="85" width="34" height="25" fill="#fff"/><rect x="819" y="130" width="56" height="30" fill="#fff"/><rect x="898" y="85" width="7" height="75" fill="#fff"/><rect x="912" y="85" width="34" height="25" fill="#fff"/><rect x="920" y="130" width="56" height="30" fill="#fff"/><rect x="1003" y="85" width="7" height="75" fill="#fff"/><rect x="1017" y="85" width="34" height="25" fill="#fff"/><rect x="1025" y="130" width="56" height="30" fill="#fff"/><rect x="1105" y="85" width="7" height="75" fill="#fff"/><rect x="1119" y="85" width="34" height="25" fill="#fff"/><rect x="278" y="215" width="17" height="85" fill="#fff"/><rect x="220" y="268" width="42" height="26" fill="#fff"/><rect x="220" y="290" width="70" height="5" fill="#fff"/><rect x="278" y="320" width="17" height="85" fill="#fff"/><rect x="220" y="373" width="42" height="26" fill="#fff"/><rect x="220" y="395" width="70" height="5" fill="#fff"/><rect x="278" y="420" width="17" height="70" fill="#fff"/><rect x="220" y="458" width="42" height="26" fill="#fff"/><rect x="220" y="480" width="70" height="5" fill="#fff"/><rect x="278" y="520" width="17" height="75" fill="#fff"/><rect x="220" y="563" width="42" height="26" fill="#fff"/><rect x="220" y="585" width="70" height="5" fill="#fff"/><rect x="278" y="610" width="17" height="80" fill="#fff"/><rect x="220" y="658" width="42" height="26" fill="#fff"/><rect x="220" y="680" width="70" height="5" fill="#fff"/><rect x="278" y="710" width="17" height="110" fill="#fff"/><rect x="220" y="788" width="42" height="26" fill="#fff"/><rect x="220" y="810" width="70" height="5" fill="#fff"/><rect x="220" y="215" width="28" height="75" fill="#fff"/><rect x="220" y="750" width="28" height="65" fill="#fff"/><rect x="248" y="245" width="22" height="25" fill="#fff"/><rect x="248" y="770" width="22" height="25" fill="#fff"/><text x="183" y="131" font-family="Liberation Sans,sans-serif" font-weight="bold" font-size="36" fill="#00f000" textLength="90" lengthAdjust="spacingAndGlyphs">ALT-2</text></svg>
<span style="left:942.5px;top:464.52px;font-size:11.5px;line-height:14px;color:#000;white-space:pre;letter-spacing:-0.423px;">Center line Info.</span>
<div style="left:940px;top:483px;width:353px;height:350px;background:#ffffff;border:1px solid #a5a8ae;"></div>
<div style="left:941px;top:484px;width:351px;height:21px;background:linear-gradient(#f7f8fc,#e6e9f2);"></div>
<div style="left:941px;top:504px;width:351px;height:1px;background:#aeb6cc;"></div>
<div style="left:970px;top:485px;width:1px;height:20px;background:#aeb6cc;"></div>
<div style="left:1131px;top:485px;width:1px;height:20px;background:#aeb6cc;"></div>
<div style="left:1221px;top:485px;width:1px;height:20px;background:#aeb6cc;"></div>
<div style="left:1291px;top:485px;width:1px;height:20px;background:#aeb6cc;"></div>
<div style="left:942px;top:485px;width:1px;height:19px;background:#ffffff;"></div>
<div style="left:971px;top:485px;width:1px;height:19px;background:#ffffff;"></div>
<div style="left:1132px;top:485px;width:1px;height:19px;background:#ffffff;"></div>
<div style="left:1222px;top:485px;width:1px;height:19px;background:#ffffff;"></div>
<svg width="12" height="12" style="left:957px;top:489px"><path d="M11 1v10h-10z" fill="#4a4a4a"/></svg>
<span style="left:978px;top:487.34px;font-size:12px;line-height:15px;color:#222;white-space:pre;letter-spacing:0.496px;">Type</span>
<span style="left:1137px;top:487.34px;font-size:12px;line-height:15px;color:#222;white-space:pre;letter-spacing:0.389px;">Bubble name</span>
<div style="left:1017px;top:848px;width:130px;height:24px;background:#72767d;border:1px solid #d2d4d8;border-radius:3px;"></div>
<span style="left:1082.0px;top:852.84px;font-size:12px;line-height:15px;color:#ffffff;white-space:pre;letter-spacing:-0.340px;transform:translateX(-50%);">Save</span>
<div style="left:1151px;top:848px;width:140px;height:24px;background:#72767d;border:1px solid #d2d4d8;border-radius:3px;"></div>
<span style="left:1221.0px;top:852.84px;font-size:12px;line-height:15px;color:#ffffff;white-space:pre;letter-spacing:-0.537px;transform:translateX(-50%);">Close</span>
<div style="left:304px;top:883px;width:1524px;height:20px;background:#3f4246;"></div>
<div style="left:304px;top:902px;width:1524px;height:1px;background:#2c2e30;"></div>
<div style="left:304px;top:903px;width:1524px;height:4px;background:#45484c;"></div>
<div style="left:306px;top:885px;width:16px;height:16px;background:#565a5e;border:1px solid #2a2c2e;"></div>
<svg width="15" height="13" style="left:306px;top:887px"><path d="M3 2v9" stroke="#1d1e20" stroke-width="1.600" fill="none"/><path d="M11 2l-6 4.500l6 4.500z" fill="#1d1e20"/></svg>
<div style="left:324px;top:885px;width:16px;height:16px;background:#565a5e;border:1px solid #2a2c2e;"></div>
<svg width="15" height="13" style="left:324px;top:887px"><path d="M10 2l-6 4.500l6 4.500z" fill="#1d1e20"/></svg>
<div style="left:342px;top:885px;width:16px;height:16px;background:#565a5e;border:1px solid #2a2c2e;"></div>
<svg width="15" height="13" style="left:342px;top:887px"><path d="M5 2l6 4.500l-6 4.500z" fill="#1d1e20"/></svg>
<div style="left:360px;top:885px;width:16px;height:16px;background:#565a5e;border:1px solid #2a2c2e;"></div>
<svg width="15" height="13" style="left:360px;top:887px"><path d="M12 2v9" stroke="#1d1e20" stroke-width="1.600" fill="none"/><path d="M4 2l6 4.500l-6 4.500z" fill="#1d1e20"/></svg>
<svg width="210" height="19" style="left:377px;top:884px">
<path d="M58 0.500h75l-14 16h-75z" fill="#45484c" stroke="#25272a"/>
<path d="M126 0.500h75l-14 16h-75z" fill="#45484c" stroke="#25272a"/>
<path d="M0.500 0h65l-15 17h-50z" fill="#646870"/>
<path d="M65.500 0l-15 17h-50" fill="none" stroke="#2a2c2e"/>
</svg>
<span style="left:385.5px;top:886.16px;font-size:10.5px;line-height:13px;color:#ffffff;white-space:pre;font-weight:bold;font-family:'DejaVu Sans','Liberation Sans',sans-serif;letter-spacing:0.419px;">Model</span>
<span style="left:443px;top:885.49px;font-size:11px;line-height:14px;color:#9a9ea3;white-space:pre;letter-spacing:0.621px;">Layout1</span>
<span style="left:511px;top:885.49px;font-size:11px;line-height:14px;color:#9a9ea3;white-space:pre;letter-spacing:0.763px;">Layout2</span>
<div style="left:304px;top:907px;width:1524px;height:149px;background:#6e727a;"></div>
<div style="left:304px;top:907px;width:1524px;height:1px;background:#8b8f96;"></div>
<span style="left:307.5px;top:911.84px;font-size:12px;line-height:15px;color:#c9cdd4;white-space:pre;letter-spacing:-0.276px;">Command row</span>
<div style="left:304px;top:929px;width:1524px;height:124px;background:#ffffff;border:1px solid #111;"></div>
<div style="left:304px;top:1035px;width:1524px;height:1px;background:#111;"></div>
<span style="left:306px;top:945.60px;font-size:13px;line-height:16px;color:#000;white-space:pre;font-family:'Liberation Sans','NanumGothic','Noto Sans CJK KR',sans-serif;letter-spacing:0.523px;">가져오기 파일 이름 입력:D:/99_공유/검증 data/04_실무검증/도면/007_hotel_DR_re03.dwg</span>
<span style="left:306px;top:961.60px;font-size:13px;line-height:16px;color:#000;white-space:pre;font-family:'Liberation Sans','NanumGothic','Noto Sans CJK KR',sans-serif;letter-spacing:0.401px;">Substituting [NanumGothic.ttf] font to [YDIYGO120-KSCpc-EUC-H] font.</span>
<span style="left:306px;top:977.60px;font-size:13px;line-height:16px;color:#000;white-space:pre;font-family:'Liberation Sans','NanumGothic','Noto Sans CJK KR',sans-serif;letter-spacing:0.303px;">Command:</span>
<span style="left:306px;top:993.60px;font-size:13px;line-height:16px;color:#000;white-space:pre;font-family:'Liberation Sans','NanumGothic','Noto Sans CJK KR',sans-serif;letter-spacing:0.303px;">Command:</span>
<span style="left:306px;top:1009.60px;font-size:13px;line-height:16px;color:#000;white-space:pre;font-family:'Liberation Sans','NanumGothic','Noto Sans CJK KR',sans-serif;letter-spacing:0.556px;">Command:  ZOOMSpecifies the window corners, the scale factor (nX or nXP) input, or [All (A) / center (C) / Dynamic (D) / range (E) / Previous (P) / Scale (S) / Windows (W ) / object (O)] &lt;real time&gt;:E</span>
<div style="left:307px;top:1036px;width:25px;height:16px;background:linear-gradient(90deg,#c8c9cb,#e4e5e7 60%,#cfd0d2);border:1px solid #555;border-top:none;"></div>
<svg width="24" height="15" style="left:307px;top:1037px"><path d="M5 3l5 4l-5 4" fill="none" stroke="#111" stroke-width="1.600"/><path d="M11 12h6" stroke="#111" stroke-width="1.400"/></svg>
<span style="left:335px;top:1035.60px;font-size:13px;line-height:16px;color:#000;white-space:pre;font-family:'Liberation Sans','NanumGothic','Noto Sans CJK KR',sans-serif;letter-spacing:0.303px;">Command:</span>
<div style="left:1828px;top:907px;width:2px;height:149px;background:#7b7f85;"></div>
<div style="left:0px;top:1056px;width:1859px;height:24px;background:linear-gradient(#4e5155,#3b3e41);"></div>
<div style="left:0px;top:1056px;width:1859px;height:1px;background:#5d6166;"></div>
<span style="left:12px;top:1062.19px;font-size:11px;line-height:14px;color:#ffffff;white-space:pre;letter-spacing:-0.152px;">21866.1959,52629.873,0</span>
<div style="left:822px;top:1058px;width:25px;height:21px;background:#3f4245;border:1px solid #131415;"></div>
<svg width="22.00" height="18.00" viewBox="0 0 22 18" style="left:824.00px;top:1059.00px"><rect x="1" y="1" width="18" height="16" fill="#f4f4f4"/><path d="M4 1L4 17" stroke="#c0c2c6" stroke-width="0.6" fill="none" stroke-dasharray="1 1"/><path d="M1 4L19 4" stroke="#c0c2c6" stroke-width="0.6" fill="none" stroke-dasharray="1 1"/><path d="M8 1L8 17" stroke="#c0c2c6" stroke-width="0.6" fill="none" stroke-dasharray="1 1"/><path d="M1 7.5L19 7.5" stroke="#c0c2c6" stroke-width="0.6" fill="none" stroke-dasharray="1 1"/><path d="M12 1L12 17" stroke="#c0c2c6" stroke-width="0.6" fill="none" stroke-dasharray="1 1"/><path d="M1 11L19 11" stroke="#c0c2c6" stroke-width="0.6" fill="none" stroke-dasharray="1 1"/><path d="M16 1L16 17" stroke="#c0c2c6" stroke-width="0.6" fill="none" stroke-dasharray="1 1"/><path d="M1 14.5L19 14.5" stroke="#c0c2c6" stroke-width="0.6" fill="none" stroke-dasharray="1 1"/><path d="M3 14.500h13M16 14.500v-11" fill="none" stroke="#111" stroke-width="1.1"/><circle cx="16" cy="14.5" r="1.8" fill="#fff" stroke="#1f7be8" stroke-width="1.2"/></svg>
<div style="left:846px;top:1058px;width:27px;height:21px;background:#3f4245;border:1px solid #131415;"></div>
<svg width="22.00" height="18.00" viewBox="0 0 22 18" style="left:848.00px;top:1059.00px"><rect x="2" y="2" width="2.6" height="2.6" fill="#f0f0f0"/><rect x="2" y="5.5" width="2.6" height="2.6" fill="#f0f0f0"/><rect x="2" y="9" width="2.6" height="2.6" fill="#f0f0f0"/><rect x="2" y="12.5" width="2.6" height="2.6" fill="#f0f0f0"/><rect x="2" y="16" width="2.6" height="2.6" fill="#f0f0f0"/><rect x="5.5" y="2" width="2.6" height="2.6" fill="#f0f0f0"/><rect x="5.5" y="5.5" width="2.6" height="2.6" fill="#f0f0f0"/><rect x="5.5" y="9" width="2.6" height="2.6" fill="#f0f0f0"/><rect x="5.5" y="12.5" width="2.6" height="2.6" fill="#f0f0f0"/><rect x="5.5" y="16" width="2.6" height="2.6" fill="#f0f0f0"/><rect x="9" y="2" width="2.6" height="2.6" fill="#f0f0f0"/><rect x="9" y="5.5" width="2.6" height="2.6" fill="#f0f0f0"/><rect x="9" y="9" width="2.6" height="2.6" fill="#f0f0f0"/><rect x="9" y="12.5" width="2.6" height="2.6" fill="#f0f0f0"/><rect x="9" y="16" width="2.6" height="2.6" fill="#f0f0f0"/><rect x="12.5" y="2" width="2.6" height="2.6" fill="#f0f0f0"/><rect x="12.5" y="5.5" width="2.6" height="2.6" fill="#f0f0f0"/><rect x="12.5" y="9" width="2.6" height="2.6" fill="#f0f0f0"/><rect x="12.5" y="12.5" width="2.6" height="2.6" fill="#f0f0f0"/><rect x="12.5" y="16" width="2.6" height="2.6" fill="#f0f0f0"/><rect x="16" y="2" width="2.6" height="2.6" fill="#f0f0f0"/><rect x="16" y="5.5" width="2.6" height="2.6" fill="#f0f0f0"/><rect x="16" y="9" width="2.6" height="2.6" fill="#f0f0f0"/><rect x="16" y="12.5" width="2.6" height="2.6" fill="#f0f0f0"/><rect x="16" y="16" width="2.6" height="2.6" fill="#f0f0f0"/></svg>
<div style="left:872px;top:1058px;width:27px;height:21px;background:#3f4245;border:1px solid #131415;"></div>
<svg width="22.00" height="18.00" viewBox="0 0 22 18" style="left:874.00px;top:1059.00px"><path d="M3.500 1v15h15" fill="none" stroke="#e8e8e8" stroke-width="1.3"/><rect x="4.5" y="9" width="6" height="6" fill="#3b8be8"/></svg>
<div style="left:898px;top:1058px;width:27px;height:21px;background:#3f4245;border:1px solid #131415;"></div>
<svg width="22.00" height="18.00" viewBox="0 0 22 18" style="left:900.00px;top:1059.00px"><path d="M10 3.500a6.500 6.500 0 1 0 6.500 6.500h-6.500z" fill="#f4f4f4"/><path d="M11 8.500l8.500-6v6z" fill="#6fb0e8" stroke="#1f4f90" stroke-width="0.5"/></svg>
<div style="left:924px;top:1058px;width:26px;height:21px;background:#5a9cf0;border:1px solid #131415;"></div>
<svg width="22.00" height="18.00" viewBox="0 0 22 18" style="left:926.00px;top:1059.00px"><rect x="2" y="1" width="17" height="16" fill="#fff" stroke="#111" stroke-width="0.6"/><path d="M4 3L15 14" stroke="#111" stroke-width="1.1" fill="none" /><rect x="4" y="3.5" width="3" height="3" fill="#fff" stroke="#1f7be8" stroke-width="1"/><path d="M12 16v-3.500a2.500 2.500 0 0 1 5 0v3.500" fill="none" stroke="#d01818" stroke-width="2"/></svg>
<div style="left:949px;top:1058px;width:28px;height:21px;background:#5a9cf0;border:1px solid #131415;"></div>
<svg width="22.00" height="18.00" viewBox="0 0 22 18" style="left:951.00px;top:1059.00px"><rect x="2" y="1" width="17" height="16" fill="#fff" stroke="#111" stroke-width="0.6"/><path d="M4 9L15 9" stroke="#111" stroke-width="1.2" fill="none" /><rect x="3" y="8" width="2" height="2" fill="#111"/><circle cx="16" cy="9" r="2" fill="#fff" stroke="#1f7be8" stroke-width="1.3"/></svg>
<div style="left:976px;top:1058px;width:26px;height:21px;background:#3f4245;border:1px solid #131415;"></div>
<svg width="22.00" height="18.00" viewBox="0 0 22 18" style="left:978.00px;top:1059.00px"><rect x="6" y="1" width="13" height="12" fill="#8a8d92"/><rect x="6" y="1" width="6" height="6" fill="#c8cacd"/><rect x="12.5" y="7.5" width="6.5" height="5.5" fill="#b0b2b6"/><path d="M3 1v15.500h16" fill="none" stroke="#f4f4f4" stroke-width="1.1"/><path d="M1 3.500l2-3l2 3M16.500 14.500l3 2l-3 2" fill="none" stroke="#f4f4f4" stroke-width="1"/><rect x="1.8" y="14.8" width="2.4" height="2.4" fill="#fff" stroke="#1f7be8" stroke-width="0.8"/></svg>
<div style="left:1001px;top:1058px;width:28px;height:21px;background:#5a9cf0;border:1px solid #131415;"></div>
<svg width="22.00" height="18.00" viewBox="0 0 22 18" style="left:1003.00px;top:1059.00px"><g transform="translate(3 1)"><path d="M1.500 2.500l4.500-1.500l9 6.500l-4.500 7l-9.500-6.500z" fill="url(#gW)" stroke="#2a2c2f" stroke-width="0.8"/><path d="M3.500 4c-3 2.500-3 6-1.500 10" fill="none" stroke="#111" stroke-width="0.9"/><circle cx="4" cy="4.2" r="1" fill="#222"/></g></svg>
<div style="left:1028px;top:1058px;width:27px;height:21px;background:#5a9cf0;border:1px solid #131415;"></div>
<svg width="22.00" height="18.00" viewBox="0 0 22 18" style="left:1030.00px;top:1059.00px"><path d="M1.500 8l3.500 5.500l5-9h5" fill="none" stroke="#1f4f90" stroke-width="2.2"/><g transform="translate(7 5) scale(0.95)"><path d="M1 4.500l4-2l7 3.500l-3 6l-7.500-3.500z" fill="url(#gW)" stroke="#2a2c2f" stroke-width="0.7"/></g></svg>
<div style="left:1054px;top:1058px;width:27px;height:21px;background:#5a9cf0;border:1px solid #131415;"></div>
<svg width="22.00" height="18.00" viewBox="0 0 22 18" style="left:1056.00px;top:1059.00px"><rect x="5" y="1" width="11" height="10" fill="#3b8be8" stroke="#1f4f90" stroke-width="0.8"/><path d="M6 16l-2.500-3l3-2.500l2.500 3z" fill="#f0901a"/><g transform="translate(11 6) scale(1.05)"><path d="M0 0v9l2.200-2l1.600 3.500l1.600-.8l-1.600-3.300h3z" fill="#f4f4f4" stroke="#222" stroke-width="0.6"/></g></svg>
<div style="left:1080px;top:1058px;width:27px;height:21px;background:#3f4245;border:1px solid #131415;"></div>
<svg width="22.00" height="18.00" viewBox="0 0 22 18" style="left:1082.00px;top:1059.00px"><rect x="1.5" y="1" width="17.5" height="16" fill="none" stroke="#18a8f8" stroke-width="1.2" stroke-dasharray="1.6 1.2"/><rect x="3.5" y="3" width="5" height="5" fill="#3f9bf0"/><rect x="11.5" y="3.5" width="4" height="4" fill="#fff"/><rect x="4" y="11" width="4" height="4" fill="#fff"/><g transform="translate(9.5 5.5) scale(1.05)"><path d="M0 0v9l2.200-2l1.600 3.500l1.600-.8l-1.600-3.300h3z" fill="#f4f4f4" stroke="#222" stroke-width="0.6"/></g></svg>
<div style="left:1106px;top:1058px;width:27px;height:21px;background:#3f4245;border:1px solid #131415;"></div>
<svg width="22.00" height="18.00" viewBox="0 0 22 18" style="left:1108.00px;top:1059.00px"><path d="M10.500 0l1.500 9l7 7.500l-8.500-3.500l-8.500 3.500l7-7.500z" fill="#f4f4f4" stroke="#3a3d42" stroke-width="0.4"/><path d="M10.500 0l1.500 9l-1.500 4z" fill="#b8babd"/></svg>
<div style="left:1132px;top:1058px;width:26px;height:21px;background:#3f4245;border:1px solid #131415;"></div>
<svg width="22.00" height="18.00" viewBox="0 0 22 18" style="left:1134.00px;top:1059.00px"><rect x="2" y="1" width="12" height="5" fill="#d8dade" stroke="#3a3d42" stroke-width="0.5"/><rect x="2" y="1" width="12" height="1.5" fill="#4d7ac0"/><rect x="4" y="5" width="12" height="5" fill="#d8dade" stroke="#3a3d42" stroke-width="0.5"/><rect x="4" y="5" width="12" height="1.5" fill="#4d7ac0"/><path d="M4 11h9l-1.500 6.500h-6z" fill="#e8c25a" stroke="#7a5a10" stroke-width="0.5"/><path d="M13.5 9.5L18.5 2" stroke="#c8cacd" stroke-width="1.8" fill="none" /></svg>
<div style="left:1828px;top:139px;width:31px;height:917px;background:#505050;"></div>
<div style="left:1828px;top:163px;width:2px;height:740px;background:#55585d;"></div>
<div style="left:1830px;top:139px;width:29px;height:261px;background:linear-gradient(90deg,#555a5f,#50555a 50%,#4a4e53);"></div>
<div style="left:1830px;top:139px;width:29px;height:1px;background:#858a90;"></div>
<div style="left:1830px;top:139px;width:1px;height:261px;background:#858a90;"></div>
<div style="left:1857px;top:139px;width:2px;height:261px;background:#1e2022;"></div>
<div style="left:1830px;top:400px;width:29px;height:1px;background:#1c1d1f;"></div>
<svg width="20" height="4" style="left:1834px;top:142px"><rect width="20" height="4" fill="url(#grip)"/></svg>
<svg width="18.00" height="18.00" viewBox="0 0 18 18" style="left:1835.00px;top:151.00px"><rect x="3" y="1" width="11" height="15" fill="url(#gW)" stroke="#2a2c2f" stroke-width="0.8" rx="1"/><path d="M9.35 13L16.48 5.19L13.82 2.76L6.69 10.57z" fill="#f2b01e" stroke="#7a5200" stroke-width="0.5"/><path d="M6 14L9.35 13L6.69 10.57z" fill="#f6e2b8" stroke="#7a5200" stroke-width="0.5"/><path d="M16.48 5.19L17.83 3.71L15.17 1.29L13.82 2.76z" fill="#f06a18" stroke="#7a3000" stroke-width="0.5"/><path d="M8.02 11.78L15.15 3.98" stroke="#ffe27a" stroke-width="0.8" fill="none" /><circle cx="3" cy="14.8" r="2.7" fill="#fff" stroke="#2a2c2f" stroke-width="0.7"/></svg>
<svg width="18.00" height="18.00" viewBox="0 0 18 18" style="left:1835.00px;top:175.00px"><rect x="3" y="1" width="11" height="15" fill="url(#gG)" stroke="#2a2c2f" stroke-width="0.8" rx="1"/><circle cx="12.5" cy="5.5" r="4.2" fill="url(#gBadge)" stroke="#0b3f9a" stroke-width="0.5"/><rect x="11.6" y="2.5" width="1.8" height="3.8" fill="#fff" rx="0.8"/><circle cx="12.5" cy="7.8" r="1" fill="#fff"/><circle cx="3" cy="14.8" r="2.7" fill="#fff" stroke="#2a2c2f" stroke-width="0.7"/></svg>
<svg width="18.00" height="18.00" viewBox="0 0 18 18" style="left:1835.00px;top:199.00px"><rect x="2" y="1" width="12" height="16" fill="url(#gW)" stroke="#2a2c2f" stroke-width="0.8" rx="1"/><circle cx="13.5" cy="13.5" r="3" fill="#3b8be8" stroke="#0b4faa" stroke-width="0.5"/></svg>
<svg width="18.00" height="18.00" viewBox="0 0 18 18" style="left:1835.00px;top:223.00px"><circle cx="6" cy="5" r="4.5" fill="#3b8be8" stroke="#0b4faa" stroke-width="0.5"/><rect x="6.5" y="6.5" width="10" height="9.5" fill="url(#gG)" stroke="#3a3d42" stroke-width="0.6"/><circle cx="13" cy="9.5" r="2.2" fill="#3b8be8" stroke="#0b4faa" stroke-width="0.5"/><path d="M9 14L12 10.5" stroke="#2a2c2f" stroke-width="1" fill="none" /><rect x="7.5" y="12.5" width="3" height="3" fill="#f4f4f4" stroke="#3a3d42" stroke-width="0.5"/></svg>
<svg width="18.00" height="18.00" viewBox="0 0 18 18" style="left:1835.00px;top:248.00px"><rect x="3.5" y="1" width="11.5" height="16.5" fill="url(#gW)" stroke="#2a2c2f" stroke-width="0.8" rx="1"/><path d="M5 4.5h-2.500a1.800 1.800 0 0 0 0 3.600h4a1.800 1.800 0 0 0 1.500-2.800" fill="none" stroke="#2f8ff0" stroke-width="1.2"/><path d="M11.23 13.36L16.4 7.59L13.94 5.39L8.77 11.16z" fill="#f2b01e" stroke="#7a5200" stroke-width="0.5"/><path d="M8 14.5L11.23 13.36L8.77 11.16z" fill="#f6e2b8" stroke="#7a5200" stroke-width="0.5"/><path d="M16.4 7.59L17.73 6.1L15.27 3.9L13.94 5.39z" fill="#f06a18" stroke="#7a3000" stroke-width="0.5"/><path d="M10 12.26L15.17 6.49" stroke="#ffe27a" stroke-width="0.8" fill="none" /></svg>
<svg width="18.00" height="18.00" viewBox="0 0 18 18" style="left:1835.00px;top:272.00px"><rect x="3" y="1.5" width="10" height="15.5" fill="url(#gG)" stroke="#2a2c2f" stroke-width="0.8" rx="1"/><path d="M5 3h-2.500a1.800 1.800 0 0 0 0 3.600h4a1.800 1.800 0 0 0 1.500-2.800" fill="none" stroke="#2f8ff0" stroke-width="1.2"/><rect x="10" y="9" width="7" height="7" fill="#2f8ff0"/><path d="M12 10.500v3.500h3.500M11 11.500h3.500v3.500" fill="none" stroke="#fff" stroke-width="1"/></svg>
<svg width="18.00" height="18.00" viewBox="0 0 18 18" style="left:1835.00px;top:296.00px"><path d="M3 15L12 6" stroke="#4da0f0" stroke-width="1.1" fill="none" stroke-dasharray="2 1.2"/><rect x="11.5" y="2" width="4.5" height="4.5" fill="url(#gW)" stroke="#3a3d42" stroke-width="0.5"/><rect x="1.8" y="14" width="2" height="2" fill="#fff" stroke="#1f7be8" stroke-width="0.8"/></svg>
<svg width="18.00" height="18.00" viewBox="0 0 18 18" style="left:1835.00px;top:320.00px"><rect x="3" y="1.5" width="13" height="12.5" fill="#d8dade" stroke="#3a3d42" stroke-width="0.6"/><text x="3.6" y="8.2" font-family="Liberation Sans,sans-serif" font-size="6.2" font-weight="bold" fill="#1f7be8" textLength="11.500" lengthAdjust="spacingAndGlyphs">ABC</text><circle cx="12.5" cy="11" r="4.2" fill="url(#gBadge)" stroke="#0b3f9a" stroke-width="0.5"/><rect x="11.6" y="8" width="1.8" height="3.8" fill="#fff" rx="0.8"/><circle cx="12.5" cy="13.3" r="1" fill="#fff"/><circle cx="3" cy="14.8" r="2.7" fill="#fff" stroke="#2a2c2f" stroke-width="0.7"/></svg>
<svg width="18.00" height="18.00" viewBox="0 0 18 18" style="left:1835.00px;top:344.00px"><rect x="3" y="1.5" width="13" height="12.5" fill="#d8dade" stroke="#3a3d42" stroke-width="0.6"/><text x="3.6" y="8.2" font-family="Liberation Sans,sans-serif" font-size="6.2" font-weight="bold" fill="#1f7be8" textLength="11.500" lengthAdjust="spacingAndGlyphs">ABC</text><path d="M9.35 14L16.48 6.19L13.82 3.76L6.69 11.57z" fill="#f2b01e" stroke="#7a5200" stroke-width="0.5"/><path d="M6 15L9.35 14L6.69 11.57z" fill="#f6e2b8" stroke="#7a5200" stroke-width="0.5"/><path d="M16.48 6.19L17.83 4.71L15.17 2.29L13.82 3.76z" fill="#f06a18" stroke="#7a3000" stroke-width="0.5"/><path d="M8.02 12.78L15.15 4.98" stroke="#ffe27a" stroke-width="0.8" fill="none" /><circle cx="3" cy="14.8" r="2.7" fill="#fff" stroke="#2a2c2f" stroke-width="0.7"/></svg>
<svg width="18.00" height="18.00" viewBox="0 0 18 18" style="left:1835.00px;top:368.00px"><rect x="3" y="1.5" width="13" height="12.5" fill="#f6e49a" stroke="#3a3d42" stroke-width="0.6"/><text x="3.6" y="8.2" font-family="Liberation Sans,sans-serif" font-size="6.2" font-weight="bold" fill="#1f7be8" textLength="11.500" lengthAdjust="spacingAndGlyphs">ABC</text><path d="M9.35 14L16.48 6.19L13.82 3.76L6.69 11.57z" fill="#f2b01e" stroke="#7a5200" stroke-width="0.5"/><path d="M6 15L9.35 14L6.69 11.57z" fill="#f6e2b8" stroke="#7a5200" stroke-width="0.5"/><path d="M16.48 6.19L17.83 4.71L15.17 2.29L13.82 3.76z" fill="#f06a18" stroke="#7a3000" stroke-width="0.5"/><path d="M8.02 12.78L15.15 4.98" stroke="#ffe27a" stroke-width="0.8" fill="none" /><circle cx="3" cy="14.8" r="2.7" fill="#fff" stroke="#2a2c2f" stroke-width="0.7"/></svg>
<div style="left:1831px;top:390px;width:27px;height:10px;background:linear-gradient(#3f4246,#37393d);"></div>
<svg width="8" height="8" style="left:1847px;top:391px"><rect x="0.500" y="0.500" width="1" height="6" fill="#8e9399"/><path d="M3 0.500l4 3l-4 3z" fill="#8e9399"/></svg>
<div style="left:1830px;top:401px;width:29px;height:574px;background:linear-gradient(90deg,#555a5f,#50555a 50%,#4a4e53);"></div>
<div style="left:1830px;top:401px;width:29px;height:1px;background:#858a90;"></div>
<div style="left:1830px;top:401px;width:1px;height:574px;background:#858a90;"></div>
<div style="left:1857px;top:401px;width:2px;height:574px;background:#1e2022;"></div>
<div style="left:1830px;top:975px;width:29px;height:1px;background:#1c1d1f;"></div>
<svg width="20" height="4" style="left:1834px;top:404px"><rect width="20" height="4" fill="url(#grip)"/></svg>
<svg width="18.00" height="18.00" viewBox="0 0 18 18" style="left:1835.00px;top:413.00px"><path d="M2 15.5L17 15.5" stroke="#f0f0f0" stroke-width="1" fill="none" /><path d="M3 14l3.500-5l3 2.500l-3.500 2.500z" fill="#f4f4f4" stroke="#3a3d42" stroke-width="0.4"/><path d="M9.48 10.31L16.36 3.76L13.74 1L6.86 7.56z" fill="#f2b01e" stroke="#7a5200" stroke-width="0.5"/><path d="M6 11L9.48 10.31L6.86 7.56z" fill="#f6e2b8" stroke="#7a5200" stroke-width="0.5"/><path d="M16.36 3.76L17.81 2.38L15.19 -0.38L13.74 1z" fill="#f06a18" stroke="#7a3000" stroke-width="0.5"/><path d="M8.17 8.93L15.05 2.38" stroke="#ffe27a" stroke-width="0.8" fill="none" /></svg>
<svg width="18.00" height="18.00" viewBox="0 0 18 18" style="left:1835.00px;top:437.00px"><rect x="2" y="2" width="8" height="8" fill="url(#gG)" stroke="#3a3d42" stroke-width="0.6"/><path d="M8 5.500h5l3 3v8h-8z" fill="url(#gB)" stroke="#12335e" stroke-width="0.8"/><path d="M7 3.500c3-1.500 5.500 0 6 2.500" fill="none" stroke="#2f8ff0" stroke-width="1.3"/><path d="M11.200 5.500l2.300 2.200l1.500-2.800z" fill="#2f8ff0"/></svg>
<svg width="18.00" height="18.00" viewBox="0 0 18 18" style="left:1835.00px;top:461.00px"><rect x="2" y="2" width="8" height="8" fill="url(#gG)" stroke="#3a3d42" stroke-width="0.6"/><path d="M8 5.500h5l3 3v8h-8z" fill="url(#gB)" stroke="#12335e" stroke-width="0.8"/><path d="M7 3.500c3-1.500 5.500 0 6 2.500" fill="none" stroke="#2f8ff0" stroke-width="1.3"/><path d="M11.200 5.500l2.300 2.200l1.500-2.800z" fill="#2f8ff0"/><text x="10" y="15" font-family="Liberation Mono,sans-serif" font-size="8.5" font-weight="bold" fill="#0b2f6a" >n</text></svg>
<svg width="18.00" height="18.00" viewBox="0 0 18 18" style="left:1835.00px;top:485.00px"><rect x="1.5" y="1.5" width="7" height="7" fill="url(#gG)" stroke="#3a3d42" stroke-width="0.6"/><path d="M5.500 5h5l2 2v7h-7z" fill="url(#gB)" stroke="#12335e" stroke-width="0.7"/><path d="M8.500 8h5l2.500 2.500v6h-7.500z" fill="url(#gB)" stroke="#12335e" stroke-width="0.7"/><path d="M8 2.500c3-1 5 0 5.500 2.500" fill="none" stroke="#2f8ff0" stroke-width="1.3"/><path d="M11.500 5l2.300 1.800l1.200-2.800z" fill="#2f8ff0"/></svg>
<svg width="18.00" height="18.00" viewBox="0 0 18 18" style="left:1835.00px;top:510.00px"><path d="M7.500 2c-3.500 1-5 4-5 13h5z" fill="url(#gW)" stroke="#3a3d42" stroke-width="0.5"/><path d="M10.500 2c3.500 1 5 4 5 13h-5z" fill="url(#gB)" stroke="#12335e" stroke-width="0.5"/><path d="M9 0.5L9 17" stroke="#f4f4f4" stroke-width="1" fill="none" /></svg>
<svg width="18.00" height="18.00" viewBox="0 0 18 18" style="left:1835.00px;top:534.00px"><rect x="1" y="11" width="16" height="4.5" fill="#5a5d62" stroke="#3a3d42" stroke-width="0.4"/><path d="M1 15.500l4.500-4.500M5 15.500l4.500-4.500M9 15.500l4.500-4.500M13 15.500l4-4" fill="none" stroke="#c8cacd" stroke-width="0.8"/><path d="M9 2v9M6.500 4.500l2.500-3l2.500 3M6.500 8l2.500 3l2.500-3" fill="none" stroke="#2f8ff0" stroke-width="1.3"/></svg>
<svg width="18.00" height="18.00" viewBox="0 0 18 18" style="left:1835.00px;top:558.00px"><path d="M2 2v13h14v-13h-3.500v9.500h-7v-9.500z" fill="#5a5d62" stroke="#f0f0f0" stroke-width="0.9"/><path d="M2 6l3.500-3.500M2 10l3.500-3.500M2 14l3.500-3.500M5 15l4-4M9 15l4-4M12.500 11l3.500-3.500M12.500 7l3.500-3.500" fill="none" stroke="#c8cacd" stroke-width="0.7"/><path d="M14 14l3.500 3.500v-3h-3z" fill="#2f8ff0"/></svg>
<svg width="18.00" height="18.00" viewBox="0 0 18 18" style="left:1835.00px;top:582.00px"><rect x="2" y="2.5" width="6.5" height="3.2" fill="#4d9af0" stroke="#1f4f90" stroke-width="0.5"/><rect x="2" y="7.5" width="6.5" height="3.2" fill="#4d9af0" stroke="#1f4f90" stroke-width="0.5"/><rect x="2" y="12.5" width="6.5" height="3.2" fill="#4d9af0" stroke="#1f4f90" stroke-width="0.5"/><rect x="10" y="2.5" width="6.5" height="3.2" fill="#4d9af0" stroke="#1f4f90" stroke-width="0.5"/><rect x="10" y="7.5" width="6.5" height="3.2" fill="#4d9af0" stroke="#1f4f90" stroke-width="0.5"/><rect x="10" y="12.5" width="6.5" height="3.2" fill="#4d9af0" stroke="#1f4f90" stroke-width="0.5"/></svg>
<svg width="18.00" height="18.00" viewBox="0 0 18 18" style="left:1835.00px;top:606.00px"><path d="M9 .5l3 3.500h-2v4h4v-2l3.500 3l-3.500 3v-2h-4v4h2l-3 3.500l-3-3.500h2v-4h-4v2l-3.500-3l3.500-3v2h4v-4h-2z" fill="#f4f4f4" stroke="#3a3d42" stroke-width="0.4"/><rect x="7.5" y="7.5" width="3" height="3" fill="#fff" stroke="#1f7be8" stroke-width="1"/></svg>
<svg width="18.00" height="18.00" viewBox="0 0 18 18" style="left:1835.00px;top:630.00px"><path d="M12.500 3.500a6.500 6.500 0 1 1-6 -.3" fill="none" stroke="#f4f4f4" stroke-width="1.7"/><path d="M5 1l5 1.500l-3.500 3.800z" fill="#f4f4f4"/></svg>
<svg width="18.00" height="18.00" viewBox="0 0 18 18" style="left:1835.00px;top:654.00px"><rect x="1" y="1" width="16" height="16" fill="#4d9af0" stroke="#1f4f90" stroke-width="0.5"/><rect x="1.5" y="11.5" width="5" height="5" fill="#f4f4f4" stroke="#3a3d42" stroke-width="0.5"/><path d="M7.500 10.500l6-6" fill="none" stroke="#fff" stroke-width="1.4"/><path d="M10 3.500h4.500v4.500z" fill="#fff"/></svg>
<svg width="18.00" height="18.00" viewBox="0 0 18 18" style="left:1835.00px;top:679.00px"><path d="M2 1.500h5v9h9.500v5.500h-14.500z" fill="#4d9af0" stroke="#1f4f90" stroke-width="0.5"/><rect x="2.5" y="11.5" width="4.5" height="4.5" fill="#d8dade" stroke="#3a3d42" stroke-width="0.4"/><path d="M4.500 9v-5M3 5.500l1.500-2l1.500 2" fill="none" stroke="#fff" stroke-width="1.1"/></svg>
<svg width="18.00" height="18.00" viewBox="0 0 18 18" style="left:1835.00px;top:703.00px"><path d="M2 16L16 2" stroke="#f0f0f0" stroke-width="1.1" fill="none" /><path d="M5 5L14 14" stroke="#4da0f0" stroke-width="1.1" fill="none" /><rect x="1" y="15" width="2.5" height="2.5" fill="#9a9da2"/><rect x="15" y="1" width="2.2" height="2.2" fill="#4da0f0"/><rect x="8.2" y="8.2" width="2.2" height="2.2" fill="#fff" stroke="#1f7be8" stroke-width="0.8"/></svg>
<svg width="18.00" height="18.00" viewBox="0 0 18 18" style="left:1835.00px;top:727.00px"><path d="M1 9L10 9" stroke="#4da0f0" stroke-width="1.2" fill="none" /><path d="M8 1L8 17" stroke="#4da0f0" stroke-width="1.2" fill="none" /><path d="M10.5 9L17 9" stroke="#f0f0f0" stroke-width="1.1" fill="none" stroke-dasharray="1 1"/></svg>
<svg width="18.00" height="18.00" viewBox="0 0 18 18" style="left:1835.00px;top:751.00px"><path d="M1 9L7 9" stroke="#f0f0f0" stroke-width="1.1" fill="none" /><path d="M8.5 9L15 9" stroke="#4da0f0" stroke-width="1.2" fill="none" /><path d="M12.500 6.500l3 2.500l-3 2.500z" fill="#4da0f0"/><path d="M16.5 2L16.5 17" stroke="#4da0f0" stroke-width="1.2" fill="none" /></svg>
<svg width="18.00" height="18.00" viewBox="0 0 18 18" style="left:1835.00px;top:775.00px"><rect x="3.5" y="2.5" width="12.5" height="13" fill="none" stroke="#f0f0f0" stroke-width="1.3"/><rect x="2.2" y="6.5" width="2.6" height="2.6" fill="#fff" stroke="#1f7be8" stroke-width="0.9"/><rect x="2.5" y="10.5" width="2.2" height="2.5" fill="#9a9da2"/></svg>
<svg width="18.00" height="18.00" viewBox="0 0 18 18" style="left:1835.00px;top:799.00px"><rect x="3.5" y="2.5" width="12.5" height="13" fill="none" stroke="#f0f0f0" stroke-width="1.3"/><path d="M1.500 6h4.500l-2.250 3z" fill="#2f8ff0"/><path d="M1.500 12h4.500l-2.250-3z" fill="#9a9da2"/></svg>
<svg width="18.00" height="18.00" viewBox="0 0 18 18" style="left:1835.00px;top:824.00px"><path d="M3 16v-8l7-6.500h6.500v14.500z" fill="url(#gW)" stroke="#3a3d42" stroke-width="0.5"/></svg>
<svg width="18.00" height="18.00" viewBox="0 0 18 18" style="left:1835.00px;top:848.00px"><path d="M3.500 16v-6.500c0-5 3.500-8 8.500-8h4.500v14.500z" fill="url(#gW)" stroke="#3a3d42" stroke-width="0.5"/><path d="M2.500 9.500c0-5 3.500-8.500 9-8.500" fill="none" stroke="#2f8ff0" stroke-width="1.4"/></svg>
<svg width="18.00" height="18.00" viewBox="0 0 18 18" style="left:1835.00px;top:872.00px"><path d="M1 8h7M9.500 9.500v7.500" fill="none" stroke="#f0f0f0" stroke-width="1.2"/><path d="M9.500 1v7M11 8h6.500" fill="none" stroke="#4da0f0" stroke-width="1.1" stroke-dasharray="1.5 1"/></svg>
<svg width="18.00" height="18.00" viewBox="0 0 18 18" style="left:1835.00px;top:896.00px"><path d="M1 2.500h7M1 5.500h6M1 8.500h4M11 17v-5M14 17v-6M17 17v-7" fill="none" stroke="#f0f0f0" stroke-width="1.1"/><path d="M8 2.500c5 0 9 4 9 7.500M7 5.500c4 0 7 3 7 5.500M5 8.500c3.500 0 6 1.500 6 3.500" fill="none" stroke="#4da0f0" stroke-width="1.1" stroke-dasharray="1.5 1"/></svg>
<svg width="18.00" height="18.00" viewBox="0 0 18 18" style="left:1835.00px;top:920.00px"><path d="M2.5 1L2.5 17" stroke="#f0f0f0" stroke-width="1.2" fill="none" /><rect x="4.5" y="2.5" width="12" height="6" fill="url(#gB)" stroke="#1f4f90" stroke-width="0.4"/><rect x="4.5" y="9.5" width="7" height="5.5" fill="url(#gW)" stroke="#3a3d42" stroke-width="0.4"/></svg>
<svg width="18.00" height="18.00" viewBox="0 0 18 18" style="left:1835.00px;top:944.00px"><path d="M1.500 5v11.500h11.500z" fill="#eceef0" stroke="#3a3d42" stroke-width="0.3"/><path d="M10.500 1l7 6l-3.500 4.500l-7-6z" fill="url(#gB)" stroke="#1f4f90" stroke-width="0.4"/></svg>
<div style="left:1831px;top:965px;width:27px;height:10px;background:linear-gradient(#3f4246,#37393d);"></div>
<svg width="8" height="8" style="left:1847px;top:966px"><rect x="0.500" y="0.500" width="1" height="6" fill="#8e9399"/><path d="M3 0.500l4 3l-4 3z" fill="#8e9399"/></svg>
</body></html>
